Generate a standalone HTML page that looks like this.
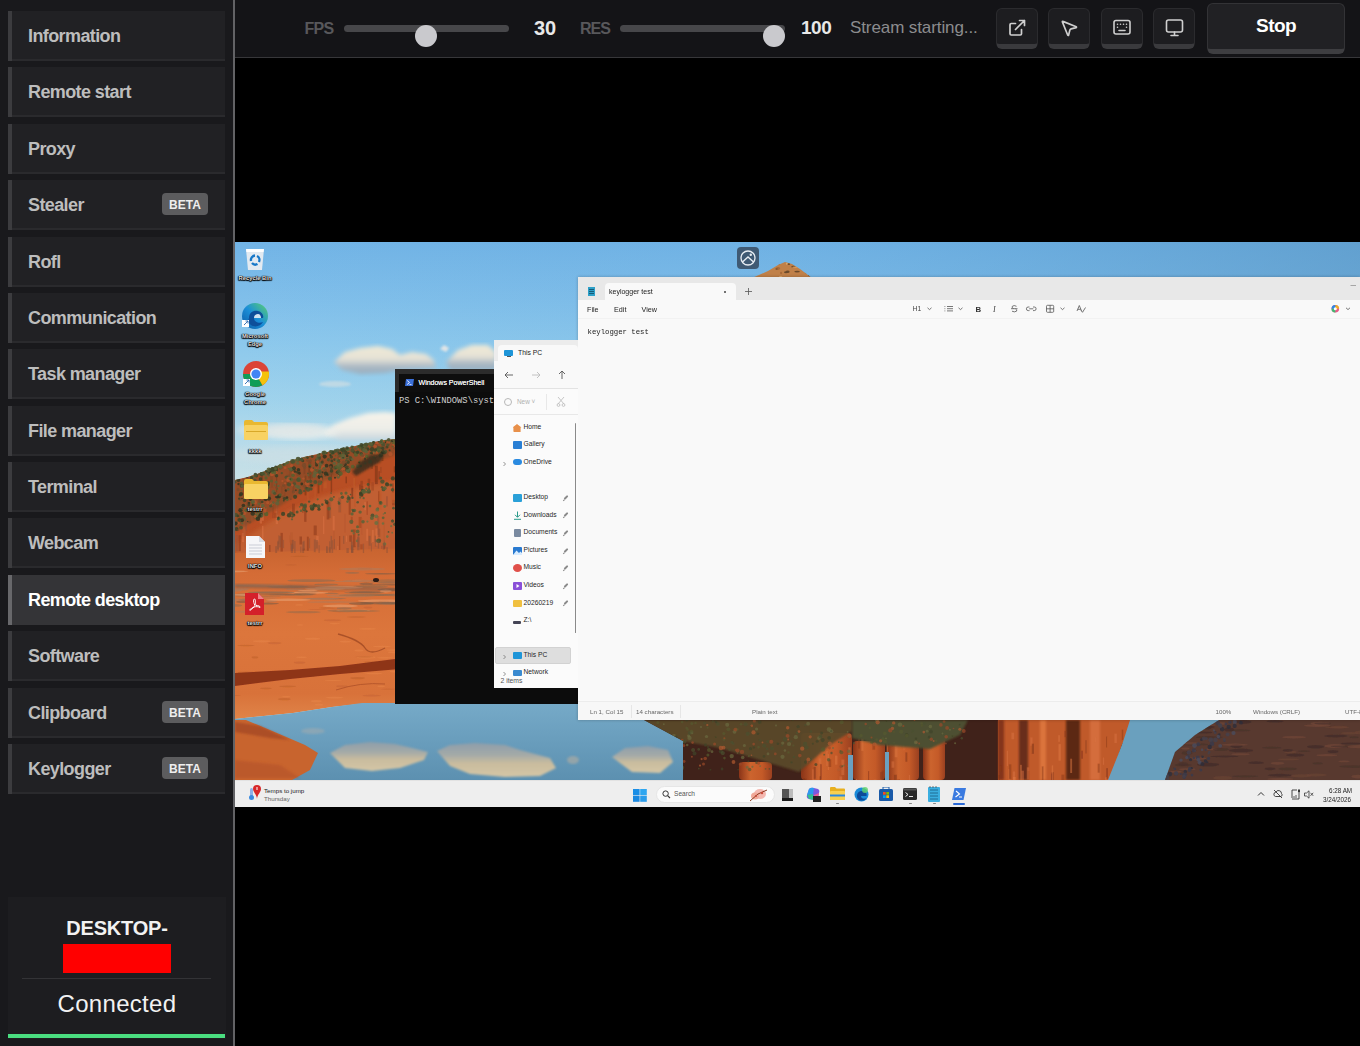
<!DOCTYPE html>
<html><head><meta charset="utf-8">
<style>
*{margin:0;padding:0;box-sizing:border-box}
html,body{width:1360px;height:1046px;overflow:hidden;background:#000;font-family:"Liberation Sans",sans-serif}
#side{position:absolute;left:0;top:0;width:233px;height:1046px;background:#19191c}
#vdiv{position:absolute;left:233px;top:0;width:2px;height:1046px;background:#626265}
.it{position:absolute;left:8px;width:217px;height:50px;background:#212124;box-shadow:inset 4px 0 0 #3c3c3f,inset 0 -2px 0 #2a2a2d}
.it span{position:absolute;left:20px;top:15px;font-size:18px;font-weight:bold;color:#bdbdbd;letter-spacing:-0.6px;line-height:20px}
.it.act{background:#343437;box-shadow:inset 4px 0 0 #68686b}
.it.act span{color:#fff}
.beta{position:absolute;left:154px;top:13px;width:46px;height:22px;background:#5c5c5e;border-radius:4px;color:#eee;font-size:12px;font-weight:bold;text-align:center;line-height:25px}
#card{position:absolute;left:8px;top:897px;width:218px;height:142px;background:#1d1d20}
#top{position:absolute;left:235px;top:0;width:1125px;height:58px;background:#141417;border-bottom:1px solid #37373a}

.lbl{position:absolute;font-weight:bold;font-size:16px;color:#58585b;letter-spacing:-0.4px;line-height:18px}
.val{position:absolute;font-weight:bold;font-size:19px;color:#e8e8e8;letter-spacing:-0.5px;line-height:20px}
.trk{position:absolute;top:25px;height:7px;background:#47474a;border-radius:4px}
.thm{position:absolute;top:25px;width:22px;height:22px;border-radius:50%;background:#c9c9cd}
.btn{position:absolute;top:8px;width:42px;height:41px;background:#1d1d20;border:1px solid #2b2b2e;border-bottom:5px solid #3a3a3d;border-radius:6px}
.btn svg{position:absolute;left:10px;top:9px}
#stop{position:absolute;left:1207px;top:3px;width:138px;height:51px;background:#212124;border:1px solid #333336;border-bottom:5px solid #3e3e41;border-radius:6px;color:#fff;font-weight:bold;font-size:19px;text-align:center;line-height:43px;letter-spacing:-0.6px}

#desk{position:absolute;left:235px;top:242px;width:1125px;height:565px;overflow:hidden;background:#72b2e2}
#desk svg.bg{position:absolute;left:0;top:0}

.win{position:absolute;overflow:hidden}
.t{position:absolute;white-space:nowrap;line-height:1}
#ps{left:160px;top:127px;width:183px;height:335px;background:#0c0c0c}
#ex{left:259px;top:98px;width:84px;height:348px;background:#fbfbfb}
#np{left:343px;top:35px;width:782px;height:443px;background:#f9f9f9;box-shadow:0 0 3px rgba(0,0,0,0.25)}

.exi{position:absolute;left:0;width:84px;height:10px}
.exi i{position:absolute;left:18.5px;top:1px;width:9px;height:8px;border-radius:1px}
.exi b{position:absolute;left:29.5px;top:1px;font-weight:normal;font-size:6.7px;color:#1f1f1f;white-space:nowrap;line-height:1}
.exi u{position:absolute;left:71px;top:1.5px;width:2.2px;height:5px;background:#8a8a8a;transform:rotate(45deg);border-radius:1px}
.exi u:after{content:'';position:absolute;left:1px;top:4.5px;width:0.6px;height:2.5px;background:#8a8a8a}

.lab{position:absolute;width:40px;text-align:center;font-size:5.8px;font-weight:bold;color:#e0e0e0;line-height:8px;text-shadow:0 0 1px #000,0.5px 0.5px 1px #000,-0.5px -0.5px 1px #000,0.5px -0.5px 1px #000,-0.5px 0.5px 1px #000}
#tb{position:absolute;left:0;top:538px;width:1125px;height:27px;background:#eeeeee;border-top:1px solid #e2e2e2}
</style></head><body>
<div id="side">
<div class="it" style="top:11px"><span>Information</span></div>
<div class="it" style="top:67px"><span>Remote start</span></div>
<div class="it" style="top:124px"><span>Proxy</span></div>
<div class="it" style="top:180px"><span>Stealer</span><div class="beta">BETA</div></div>
<div class="it" style="top:237px"><span>Rofl</span></div>
<div class="it" style="top:293px"><span>Communication</span></div>
<div class="it" style="top:349px"><span>Task manager</span></div>
<div class="it" style="top:406px"><span>File manager</span></div>
<div class="it" style="top:462px"><span>Terminal</span></div>
<div class="it" style="top:518px"><span>Webcam</span></div>
<div class="it act" style="top:575px"><span>Remote desktop</span></div>
<div class="it" style="top:631px"><span>Software</span></div>
<div class="it" style="top:688px"><span>Clipboard</span><div class="beta">BETA</div></div>
<div class="it" style="top:744px"><span>Keylogger</span><div class="beta">BETA</div></div>
<div id="card">
<div style="position:absolute;left:0;top:19.5px;width:218px;text-align:center;font-weight:bold;font-size:20px;color:#f2f2f2;letter-spacing:-0.2px;line-height:22px">DESKTOP-</div>
<div style="position:absolute;left:55px;top:47px;width:108px;height:29px;background:#ff0000"></div>
<div style="position:absolute;left:14px;top:81px;width:189px;height:1px;background:#333336"></div>
<div style="position:absolute;left:0;top:92.5px;width:218px;text-align:center;font-size:24px;color:#f2f2f2;line-height:28px;letter-spacing:0.3px">Connected</div>
<div style="position:absolute;left:0;top:137px;width:217px;height:4px;background:#4ade80"></div>
</div>
</div>
<div id="vdiv"></div>
<div id="top"></div>
<div class="lbl" style="left:304.5px;top:20px;letter-spacing:-0.7px">FPS</div>
<div class="trk" style="left:344px;width:165px"></div>
<div class="thm" style="left:415px"></div>
<div class="val" style="left:534px;top:17.5px;font-size:20px;letter-spacing:0">30</div>
<div class="lbl" style="left:580px;top:20px;letter-spacing:-1px">RES</div>
<div class="trk" style="left:620px;width:165px"></div>
<div class="thm" style="left:763px"></div>
<div class="val" style="left:801px;top:18px">100</div>
<div style="position:absolute;left:850px;top:18px;font-size:17px;color:#8c8c8e;line-height:20px;letter-spacing:-0.1px">Stream starting...</div>
<div class="btn" style="left:996px"><svg width="20" height="20" viewBox="0 0 20 20" fill="none" stroke="#cfcfcf" stroke-width="1.7" stroke-linecap="round" stroke-linejoin="round"><path d="M8.5 5.5H4.2A1.2 1.2 0 0 0 3 6.7V15.8A1.2 1.2 0 0 0 4.2 17H13.3A1.2 1.2 0 0 0 14.5 15.8V11.5"/><path d="M8.5 11.5L17.5 2.5M12.5 2.5H17.5V7.5"/></svg></div>
<div class="btn" style="left:1048px"><svg width="20" height="20" viewBox="0 0 24 24" fill="none" stroke="#cfcfcf" stroke-width="2" stroke-linecap="round" stroke-linejoin="round"><path d="M4.037 4.688a.495.495 0 0 1 .651-.651l16 6.5a.5.5 0 0 1-.063.947l-6.124 1.58a2 2 0 0 0-1.438 1.435l-1.579 6.126a.5.5 0 0 1-.947.063z"/></svg></div>
<div class="btn" style="left:1101px"><svg width="20" height="20" viewBox="0 0 20 20" fill="none" stroke="#cfcfcf" stroke-width="1.6" stroke-linecap="round" stroke-linejoin="round"><rect x="2" y="2.5" width="16" height="13.5" rx="2"/><path d="M5.5 6.2h.01M8.5 6.2h.01M11.5 6.2h.01M14.5 6.2h.01M5.5 9.2h.01M14.5 9.2h.01M7 12.5h6"/></svg></div>
<div class="btn" style="left:1153px"><svg width="20" height="20" viewBox="0 0 20 20" fill="none" stroke="#cfcfcf" stroke-width="1.6" stroke-linecap="round" stroke-linejoin="round"><rect x="2.5" y="2" width="16" height="12" rx="2"/><path d="M10.5 14v3.5M7 17.5h7"/></svg></div>
<div id="stop">Stop</div>

<div id="desk">
<svg class="bg" width="1125" height="565" viewBox="0 0 1125 565">
<defs>
<linearGradient id="sky" x1="0" y1="0" x2="0" y2="565" gradientUnits="userSpaceOnUse"><stop offset="0.0000" stop-color="#72b4e6"/><stop offset="0.1027" stop-color="#80bfea"/><stop offset="0.1770" stop-color="#8cc8ec"/><stop offset="0.2832" stop-color="#a0d3ec"/><stop offset="0.3540" stop-color="#b6dbea"/><stop offset="0.4159" stop-color="#c8e0e6"/></linearGradient>
<linearGradient id="skyR" x1="0" y1="0" x2="1125" y2="0" gradientUnits="userSpaceOnUse"><stop offset="0" stop-color="#5a9ed4" stop-opacity="0"/><stop offset="0.45" stop-color="#5a9ed4" stop-opacity="0.12"/><stop offset="1" stop-color="#5490be" stop-opacity="0.55"/></linearGradient>
<linearGradient id="water" x1="0" y1="461" x2="0" y2="538" gradientUnits="userSpaceOnUse"><stop offset="0" stop-color="#76aac8"/><stop offset="1" stop-color="#5c90b0"/></linearGradient>
<filter id="b05"><feGaussianBlur stdDeviation="0.5"/></filter>
<filter id="b1"><feGaussianBlur stdDeviation="1"/></filter>
<filter id="b2"><feGaussianBlur stdDeviation="2"/></filter>
<filter id="b3"><feGaussianBlur stdDeviation="3"/></filter>
<filter id="b5"><feGaussianBlur stdDeviation="5"/></filter>
</defs>
<rect width="1125" height="565" fill="url(#sky)"/>
<rect width="1125" height="250" fill="url(#skyR)"/>
<linearGradient id="cg1" x1="0" y1="0" x2="0" y2="1"><stop offset="0" stop-color="#f0ead6"/><stop offset="0.45" stop-color="#e6e2d6"/><stop offset="0.75" stop-color="#a9b8c4"/><stop offset="1" stop-color="#98acbc"/></linearGradient>
<linearGradient id="cg2" x1="0" y1="0" x2="0" y2="1"><stop offset="0" stop-color="#f6f3ea"/><stop offset="0.6" stop-color="#eeeee8"/><stop offset="1" stop-color="#c8d6de"/></linearGradient>
<path d="M99.0,120.0 L110.0,110.0 L125.0,106.0 L143.0,104.0 L157.0,107.0 L165.0,113.0 L177.0,110.0 L191.0,112.0 L199.0,118.0 L201.0,126.0 L165.0,128.0 L150.0,131.0 L125.0,132.0 L107.0,128.0Z" fill="url(#cg1)" filter="url(#b2)" opacity="1" stroke-linejoin="round"/>
<path d="M211.0,120.0 L223.0,108.0 L237.0,103.0 L253.0,103.0 L261.0,110.0 L261.0,128.0 L215.0,128.0Z" fill="url(#cg1)" filter="url(#b2)" opacity="1" stroke-linejoin="round"/>
<path d="M205.0,107.0 L209.0,103.0 L214.0,106.0 L211.0,110.0Z" fill="#dfe4e6" filter="url(#b1)" opacity="1" stroke-linejoin="round"/>
<ellipse cx="100" cy="142" rx="16" ry="3" fill="#c8dce4" opacity="0.8" filter="url(#b1)"/>
<path d="M87.0,192.0 L100.0,182.0 L115.0,176.0 L133.0,171.0 L150.0,170.0 L161.0,171.0 L161.0,198.0 L105.0,198.0Z" fill="url(#cg2)" filter="url(#b2)" opacity="1" stroke-linejoin="round"/>
<ellipse cx="65" cy="190" rx="38" ry="7" fill="#eef0ec" opacity="0.85" filter="url(#b3)"/>
<ellipse cx="45" cy="188" rx="45" ry="6" fill="#dde5e6" opacity="0.75" filter="url(#b3)"/>
<ellipse cx="65" cy="213" rx="70" ry="9" fill="#d3e0e3" opacity="0.55" filter="url(#b3)"/>
<clipPath id="pkc"><polygon points="517.0,36.0 533.0,29.0 543.0,23.0 550.0,20.0 557.0,22.0 565.0,27.0 577.0,36.0"/></clipPath>
<polygon points="517.0,36.0 533.0,29.0 543.0,23.0 550.0,20.0 557.0,22.0 565.0,27.0 577.0,36.0" fill="#c08048"/>
<g clip-path="url(#pkc)" filter="url(#b05)">
<ellipse cx="537.8" cy="23.3" rx="2.3" ry="0.7" fill="#a86a38"/>
<ellipse cx="525.2" cy="29.7" rx="2.8" ry="0.8" fill="#8a5a30"/>
<ellipse cx="543.9" cy="22.0" rx="1.2" ry="0.9" fill="#a86a38"/>
<ellipse cx="526.8" cy="24.3" rx="2.3" ry="1.4" fill="#a86a38"/>
<ellipse cx="552.2" cy="21.7" rx="1.4" ry="1.0" fill="#e0a868"/>
<ellipse cx="535.9" cy="23.2" rx="1.2" ry="0.8" fill="#e0a868"/>
<ellipse cx="525.7" cy="29.6" rx="1.4" ry="0.7" fill="#8a5a30"/>
<ellipse cx="551.0" cy="30.3" rx="2.0" ry="1.0" fill="#6a4a2a"/>
<ellipse cx="545.6" cy="34.9" rx="1.7" ry="0.8" fill="#e0a868"/>
<ellipse cx="558.4" cy="24.7" rx="2.1" ry="1.0" fill="#6a4a2a"/>
<ellipse cx="560.1" cy="25.3" rx="3.0" ry="0.7" fill="#d89858"/>
<ellipse cx="529.1" cy="26.1" rx="2.9" ry="0.9" fill="#8a5a30"/>
<ellipse cx="562.1" cy="29.6" rx="2.8" ry="0.9" fill="#6a4a2a"/>
<ellipse cx="552.7" cy="29.7" rx="1.9" ry="1.3" fill="#6a4a2a"/>
<ellipse cx="546.1" cy="31.0" rx="1.1" ry="1.2" fill="#a86a38"/>
<ellipse cx="574.6" cy="33.3" rx="1.6" ry="0.9" fill="#6a4a2a"/>
<ellipse cx="521.2" cy="27.9" rx="1.3" ry="0.7" fill="#8a5a30"/>
<ellipse cx="532.0" cy="25.3" rx="2.5" ry="0.9" fill="#d89858"/>
<ellipse cx="524.4" cy="27.7" rx="2.1" ry="1.3" fill="#d89858"/>
<ellipse cx="567.5" cy="25.2" rx="1.8" ry="0.9" fill="#d89858"/>
<ellipse cx="572.7" cy="23.3" rx="1.4" ry="0.8" fill="#e0a868"/>
<ellipse cx="520.7" cy="33.5" rx="1.4" ry="0.8" fill="#e0a868"/>
<ellipse cx="543.0" cy="26.5" rx="2.1" ry="1.4" fill="#a86a38"/>
<ellipse cx="572.3" cy="30.8" rx="2.5" ry="1.0" fill="#a86a38"/>
<ellipse cx="541.6" cy="27.0" rx="1.2" ry="1.1" fill="#8a5a30"/>
<ellipse cx="530.5" cy="35.8" rx="1.9" ry="0.7" fill="#a86a38"/>
<ellipse cx="522.9" cy="21.0" rx="1.3" ry="0.7" fill="#6a4a2a"/>
<ellipse cx="553.8" cy="22.1" rx="1.4" ry="0.9" fill="#6a4a2a"/>
<ellipse cx="572.6" cy="30.0" rx="1.9" ry="0.7" fill="#d89858"/>
<ellipse cx="574.6" cy="28.0" rx="2.0" ry="0.7" fill="#8a5a30"/>
</g>
<clipPath id="hillc"><polygon points="0.0,238.0 13.0,235.0 28.0,230.0 42.0,224.0 55.0,219.0 69.0,215.0 83.0,212.0 97.0,209.0 111.0,206.0 125.0,203.0 139.0,200.0 150.0,198.0 160.0,197.0 185.0,194.0 185.0,318.0 0.0,318.0"/></clipPath>
<polygon points="0.0,238.0 13.0,235.0 28.0,230.0 42.0,224.0 55.0,219.0 69.0,215.0 83.0,212.0 97.0,209.0 111.0,206.0 125.0,203.0 139.0,200.0 150.0,198.0 160.0,197.0 185.0,194.0 185.0,318.0 0.0,318.0" fill="#b84e24"/>
<g clip-path="url(#hillc)">
<g filter="url(#b05)">
<polygon points="0.0,303.0 45.0,273.0 85.0,255.0 125.0,245.0 165.0,238.0 185.0,236.0 185.0,318.0 0.0,318.0" fill="#c86a3a" opacity="0.6" filter="url(#b2)"/>
<rect x="131.2" y="286.7" width="2.0" height="12.2" fill="#d87242" opacity="0.6"/>
<rect x="35.9" y="310.6" width="2.8" height="10.4" fill="#9a5236" opacity="0.6"/>
<rect x="132.7" y="236.7" width="2.4" height="14.6" fill="#8e3a1a" opacity="0.6"/>
<rect x="45.7" y="244.4" width="2.1" height="7.5" fill="#a04420" opacity="0.6"/>
<rect x="136.3" y="240.3" width="2.6" height="8.3" fill="#a04420" opacity="0.6"/>
<rect x="143.2" y="286.6" width="2.0" height="8.4" fill="#9a5236" opacity="0.6"/>
<rect x="127.9" y="314.8" width="1.5" height="16.9" fill="#b85a30" opacity="0.6"/>
<rect x="121.2" y="311.1" width="2.9" height="11.7" fill="#a04420" opacity="0.6"/>
<rect x="63.8" y="227.9" width="1.7" height="8.4" fill="#a04420" opacity="0.6"/>
<rect x="84.5" y="314.3" width="2.0" height="14.2" fill="#8e3a1a" opacity="0.6"/>
<rect x="114.3" y="293.4" width="2.8" height="6.3" fill="#8e3a1a" opacity="0.6"/>
<rect x="136.9" y="287.8" width="1.9" height="12.2" fill="#d87242" opacity="0.6"/>
<rect x="111.3" y="212.8" width="1.9" height="19.2" fill="#c05a2a" opacity="0.6"/>
<rect x="130.1" y="212.6" width="1.1" height="7.4" fill="#a04420" opacity="0.6"/>
<rect x="103.4" y="255.6" width="2.7" height="14.8" fill="#9a5236" opacity="0.6"/>
<rect x="171.6" y="277.3" width="2.1" height="10.3" fill="#9a5236" opacity="0.6"/>
<rect x="3.7" y="293.3" width="2.1" height="15.9" fill="#8e3a1a" opacity="0.6"/>
<rect x="163.4" y="252.0" width="1.1" height="18.1" fill="#a04420" opacity="0.6"/>
<rect x="37.2" y="259.6" width="1.5" height="16.5" fill="#a04420" opacity="0.6"/>
<rect x="73.3" y="217.8" width="2.8" height="18.7" fill="#7a3018" opacity="0.6"/>
<rect x="115.9" y="295.1" width="1.3" height="12.8" fill="#9a5236" opacity="0.6"/>
<rect x="26.6" y="260.7" width="2.2" height="18.1" fill="#d87242" opacity="0.6"/>
<rect x="135.8" y="219.9" width="2.1" height="7.1" fill="#8e3a1a" opacity="0.6"/>
<rect x="57.0" y="261.6" width="2.8" height="13.3" fill="#8e3a1a" opacity="0.6"/>
<rect x="9.9" y="224.6" width="2.0" height="5.6" fill="#8e3a1a" opacity="0.6"/>
<rect x="98.3" y="288.9" width="1.7" height="18.7" fill="#b85a30" opacity="0.6"/>
<rect x="170.3" y="271.5" width="1.9" height="8.0" fill="#a04420" opacity="0.6"/>
<rect x="93.3" y="257.0" width="2.8" height="19.1" fill="#9a5236" opacity="0.6"/>
<rect x="164.9" y="232.3" width="2.7" height="13.4" fill="#a04420" opacity="0.6"/>
<rect x="24.0" y="216.7" width="2.3" height="11.6" fill="#8e3a1a" opacity="0.6"/>
<rect x="75.0" y="227.0" width="2.8" height="9.5" fill="#8e3a1a" opacity="0.6"/>
<rect x="27.0" y="283.9" width="1.5" height="14.9" fill="#d87242" opacity="0.6"/>
<rect x="24.0" y="255.9" width="1.8" height="16.2" fill="#8e3a1a" opacity="0.6"/>
<rect x="85.3" y="314.9" width="2.4" height="17.5" fill="#d87242" opacity="0.6"/>
<rect x="174.0" y="248.6" width="1.6" height="11.3" fill="#7a3018" opacity="0.6"/>
<rect x="126.4" y="205.2" width="2.4" height="13.3" fill="#c05a2a" opacity="0.6"/>
<rect x="67.3" y="261.5" width="1.2" height="9.4" fill="#8e3a1a" opacity="0.6"/>
<rect x="160.7" y="228.8" width="1.5" height="18.1" fill="#8e3a1a" opacity="0.6"/>
<rect x="6.9" y="291.0" width="2.6" height="9.1" fill="#d87242" opacity="0.6"/>
<rect x="148.7" y="279.4" width="1.3" height="19.2" fill="#b85a30" opacity="0.6"/>
<rect x="160.9" y="267.5" width="1.6" height="15.5" fill="#8e3a1a" opacity="0.6"/>
<rect x="139.9" y="223.7" width="2.9" height="18.4" fill="#7a3018" opacity="0.6"/>
<rect x="111.0" y="293.6" width="1.1" height="6.3" fill="#d87242" opacity="0.6"/>
<rect x="151.0" y="254.3" width="1.8" height="10.1" fill="#9a5236" opacity="0.6"/>
<rect x="160.2" y="273.3" width="2.9" height="5.6" fill="#d87242" opacity="0.6"/>
<rect x="169.6" y="232.6" width="2.3" height="7.7" fill="#7a3018" opacity="0.6"/>
<rect x="92.9" y="226.3" width="1.5" height="11.7" fill="#a04420" opacity="0.6"/>
<rect x="140.6" y="315.4" width="2.5" height="5.6" fill="#8e3a1a" opacity="0.6"/>
<rect x="96.4" y="224.4" width="1.2" height="12.1" fill="#c05a2a" opacity="0.6"/>
<rect x="143.3" y="251.8" width="2.9" height="12.4" fill="#c05a2a" opacity="0.6"/>
<rect x="53.9" y="227.3" width="2.7" height="8.4" fill="#a04420" opacity="0.6"/>
<rect x="123.7" y="274.9" width="3.0" height="11.1" fill="#a04420" opacity="0.6"/>
<rect x="146.5" y="204.6" width="1.9" height="14.4" fill="#7a3018" opacity="0.6"/>
<rect x="9.7" y="278.2" width="2.3" height="10.7" fill="#9a5236" opacity="0.6"/>
<rect x="49.3" y="230.4" width="1.4" height="9.4" fill="#c05a2a" opacity="0.6"/>
<rect x="47.1" y="203.4" width="2.9" height="10.5" fill="#7a3018" opacity="0.6"/>
<rect x="95.7" y="230.6" width="1.4" height="19.5" fill="#7a3018" opacity="0.6"/>
<rect x="32.0" y="240.9" width="2.0" height="6.3" fill="#7a3018" opacity="0.6"/>
<rect x="35.2" y="260.0" width="2.6" height="5.1" fill="#a04420" opacity="0.6"/>
<rect x="25.2" y="269.3" width="1.6" height="10.9" fill="#a04420" opacity="0.6"/>
<rect x="40.7" y="269.2" width="2.3" height="12.9" fill="#d87242" opacity="0.6"/>
<rect x="125.3" y="302.3" width="2.4" height="10.8" fill="#a04420" opacity="0.6"/>
<rect x="86.5" y="235.1" width="1.1" height="14.3" fill="#a04420" opacity="0.6"/>
<rect x="146.2" y="303.8" width="1.3" height="14.4" fill="#9a5236" opacity="0.6"/>
<rect x="91.7" y="260.0" width="2.7" height="17.5" fill="#8e3a1a" opacity="0.6"/>
<rect x="102.2" y="303.9" width="1.2" height="15.2" fill="#d87242" opacity="0.6"/>
<rect x="7.3" y="275.0" width="2.7" height="19.4" fill="#b85a30" opacity="0.6"/>
<rect x="97.7" y="273.9" width="2.0" height="14.4" fill="#d87242" opacity="0.6"/>
<rect x="0.6" y="293.1" width="2.8" height="16.2" fill="#9a5236" opacity="0.6"/>
<rect x="16.1" y="262.4" width="1.5" height="16.2" fill="#b85a30" opacity="0.6"/>
<rect x="13.0" y="233.0" width="1.5" height="15.9" fill="#a04420" opacity="0.6"/>
<rect x="113.7" y="255.0" width="2.0" height="17.7" fill="#8e3a1a" opacity="0.6"/>
<rect x="119.6" y="289.7" width="1.2" height="14.3" fill="#d87242" opacity="0.6"/>
<rect x="25.8" y="231.7" width="2.2" height="16.1" fill="#7a3018" opacity="0.6"/>
<rect x="23.4" y="257.5" width="2.4" height="12.3" fill="#8e3a1a" opacity="0.6"/>
<rect x="118.2" y="235.9" width="1.9" height="12.7" fill="#c05a2a" opacity="0.6"/>
<rect x="134.3" y="315.2" width="3.0" height="13.2" fill="#a04420" opacity="0.6"/>
<rect x="163.8" y="205.0" width="3.0" height="11.9" fill="#c05a2a" opacity="0.6"/>
<rect x="67.7" y="306.6" width="2.2" height="19.0" fill="#8e3a1a" opacity="0.6"/>
<rect x="24.8" y="262.2" width="2.2" height="19.3" fill="#d87242" opacity="0.6"/>
<rect x="110.5" y="234.6" width="1.5" height="6.7" fill="#7a3018" opacity="0.6"/>
<rect x="157.1" y="257.9" width="2.9" height="5.4" fill="#8e3a1a" opacity="0.6"/>
<rect x="119.3" y="248.8" width="1.7" height="15.9" fill="#c05a2a" opacity="0.6"/>
<rect x="55.3" y="297.9" width="2.7" height="5.0" fill="#a04420" opacity="0.6"/>
<rect x="21.0" y="307.7" width="1.5" height="15.7" fill="#a04420" opacity="0.6"/>
<rect x="11.4" y="247.1" width="1.7" height="18.0" fill="#8e3a1a" opacity="0.6"/>
<rect x="74.9" y="234.1" width="1.1" height="5.7" fill="#8e3a1a" opacity="0.6"/>
<rect x="115.8" y="274.8" width="1.9" height="7.2" fill="#a04420" opacity="0.6"/>
<rect x="55.2" y="290.4" width="2.8" height="16.8" fill="#b85a30" opacity="0.6"/>
<rect x="142.1" y="274.3" width="2.1" height="18.7" fill="#9a5236" opacity="0.6"/>
<rect x="125.9" y="208.6" width="2.2" height="16.0" fill="#c05a2a" opacity="0.6"/>
<rect x="24.3" y="301.3" width="1.3" height="12.3" fill="#9a5236" opacity="0.6"/>
<rect x="82.6" y="241.8" width="1.8" height="9.5" fill="#7a3018" opacity="0.6"/>
<rect x="41.8" y="257.6" width="1.3" height="15.0" fill="#8e3a1a" opacity="0.6"/>
<rect x="28.3" y="226.5" width="2.1" height="18.6" fill="#c05a2a" opacity="0.6"/>
<rect x="79.3" y="240.6" width="1.3" height="16.4" fill="#c05a2a" opacity="0.6"/>
<rect x="33.7" y="213.3" width="1.6" height="10.1" fill="#8e3a1a" opacity="0.6"/>
<rect x="64.5" y="294.5" width="2.5" height="8.0" fill="#8e3a1a" opacity="0.6"/>
<rect x="72.2" y="249.8" width="1.5" height="12.9" fill="#c05a2a" opacity="0.6"/>
<rect x="131.6" y="259.3" width="1.3" height="13.6" fill="#a04420" opacity="0.6"/>
<rect x="88.1" y="274.1" width="1.2" height="17.9" fill="#d87242" opacity="0.6"/>
<rect x="156.9" y="246.5" width="2.9" height="14.7" fill="#c05a2a" opacity="0.6"/>
<rect x="148.5" y="301.6" width="1.9" height="5.3" fill="#8e3a1a" opacity="0.6"/>
<rect x="133.6" y="293.9" width="1.0" height="19.5" fill="#b85a30" opacity="0.6"/>
<rect x="68.5" y="307.7" width="2.9" height="17.4" fill="#b85a30" opacity="0.6"/>
<rect x="43.5" y="215.3" width="2.9" height="7.3" fill="#8e3a1a" opacity="0.6"/>
<rect x="126.3" y="276.2" width="1.2" height="16.5" fill="#b85a30" opacity="0.6"/>
<rect x="136.0" y="203.2" width="2.3" height="6.9" fill="#8e3a1a" opacity="0.6"/>
<rect x="53.2" y="217.5" width="2.4" height="8.8" fill="#c05a2a" opacity="0.6"/>
<rect x="19.6" y="210.9" width="1.8" height="12.9" fill="#a04420" opacity="0.6"/>
<rect x="39.1" y="270.9" width="3.0" height="5.2" fill="#a04420" opacity="0.6"/>
<rect x="48.8" y="238.7" width="2.0" height="17.6" fill="#a04420" opacity="0.6"/>
<rect x="41.1" y="230.9" width="1.1" height="19.4" fill="#7a3018" opacity="0.6"/>
<rect x="34.0" y="303.0" width="1.5" height="14.7" fill="#8e3a1a" opacity="0.6"/>
<rect x="116.8" y="307.5" width="2.4" height="8.4" fill="#8e3a1a" opacity="0.6"/>
<rect x="125.7" y="243.9" width="2.6" height="10.9" fill="#8e3a1a" opacity="0.6"/>
<rect x="129.3" y="260.1" width="1.6" height="8.1" fill="#d87242" opacity="0.6"/>
<rect x="143.5" y="229.1" width="1.2" height="8.3" fill="#7a3018" opacity="0.6"/>
<rect x="109.1" y="271.9" width="1.8" height="18.4" fill="#b85a30" opacity="0.6"/>
<rect x="116.4" y="310.2" width="1.1" height="7.2" fill="#b85a30" opacity="0.6"/>
<rect x="4.1" y="270.4" width="1.4" height="11.2" fill="#8e3a1a" opacity="0.6"/>
<rect x="78.7" y="283.5" width="3.0" height="9.7" fill="#8e3a1a" opacity="0.6"/>
<rect x="163.0" y="240.2" width="1.1" height="7.8" fill="#c05a2a" opacity="0.6"/>
<rect x="116.3" y="245.8" width="1.9" height="10.6" fill="#7a3018" opacity="0.6"/>
<rect x="19.1" y="211.8" width="2.9" height="6.2" fill="#c05a2a" opacity="0.6"/>
<rect x="21.6" y="312.0" width="2.5" height="8.1" fill="#a04420" opacity="0.6"/>
<rect x="54.0" y="293.8" width="1.4" height="6.3" fill="#b85a30" opacity="0.6"/>
<rect x="94.8" y="253.4" width="1.1" height="9.8" fill="#b85a30" opacity="0.6"/>
<rect x="71.9" y="294.7" width="1.8" height="16.5" fill="#8e3a1a" opacity="0.6"/>
<rect x="81.2" y="293.8" width="2.5" height="5.9" fill="#d87242" opacity="0.6"/>
<rect x="157.2" y="241.3" width="1.5" height="9.1" fill="#8e3a1a" opacity="0.6"/>
<rect x="125.4" y="238.8" width="2.4" height="9.1" fill="#8e3a1a" opacity="0.6"/>
<rect x="104.2" y="294.0" width="1.0" height="19.2" fill="#8e3a1a" opacity="0.6"/>
<rect x="40.9" y="256.7" width="2.6" height="19.4" fill="#b85a30" opacity="0.6"/>
<rect x="159.9" y="295.1" width="1.4" height="7.0" fill="#b85a30" opacity="0.6"/>
<rect x="140.4" y="286.4" width="2.2" height="17.3" fill="#d87242" opacity="0.6"/>
<rect x="57.4" y="239.1" width="2.0" height="10.4" fill="#8e3a1a" opacity="0.6"/>
<rect x="68.5" y="221.1" width="2.0" height="11.1" fill="#8e3a1a" opacity="0.6"/>
<rect x="95.3" y="221.2" width="3.0" height="11.4" fill="#8e3a1a" opacity="0.6"/>
<rect x="46.4" y="212.5" width="3.0" height="6.4" fill="#c05a2a" opacity="0.6"/>
<rect x="170.1" y="222.6" width="2.2" height="7.0" fill="#c05a2a" opacity="0.6"/>
<rect x="118.0" y="287.5" width="2.6" height="17.7" fill="#8e3a1a" opacity="0.6"/>
<rect x="51.4" y="234.6" width="2.5" height="9.0" fill="#7a3018" opacity="0.6"/>
<rect x="34.9" y="231.0" width="1.6" height="8.7" fill="#a04420" opacity="0.6"/>
<rect x="158.8" y="224.3" width="3.0" height="6.0" fill="#7a3018" opacity="0.6"/>
<rect x="88.8" y="229.1" width="3.0" height="17.1" fill="#c05a2a" opacity="0.6"/>
<rect x="17.9" y="256.6" width="2.8" height="17.3" fill="#b85a30" opacity="0.6"/>
<rect x="7.1" y="236.2" width="2.2" height="6.8" fill="#a04420" opacity="0.6"/>
<rect x="144.9" y="224.9" width="1.9" height="6.1" fill="#a04420" opacity="0.6"/>
<rect x="45.5" y="290.9" width="2.3" height="19.2" fill="#8e3a1a" opacity="0.6"/>
<rect x="124.2" y="242.5" width="1.3" height="5.6" fill="#7a3018" opacity="0.6"/>
<rect x="35.7" y="231.8" width="2.6" height="14.0" fill="#a04420" opacity="0.6"/>
<rect x="143.3" y="249.2" width="1.2" height="10.6" fill="#7a3018" opacity="0.6"/>
<rect x="5.5" y="259.0" width="1.2" height="12.3" fill="#b85a30" opacity="0.6"/>
<rect x="69.2" y="265.2" width="2.3" height="14.6" fill="#8e3a1a" opacity="0.6"/>
<rect x="69.6" y="233.6" width="1.8" height="19.8" fill="#7a3018" opacity="0.6"/>
<rect x="9.0" y="287.2" width="1.8" height="18.3" fill="#b85a30" opacity="0.6"/>
<rect x="151.2" y="315.6" width="1.8" height="10.5" fill="#d87242" opacity="0.6"/>
<rect x="70.9" y="309.4" width="1.8" height="11.5" fill="#d87242" opacity="0.6"/>
<rect x="143.6" y="248.9" width="2.5" height="18.2" fill="#c05a2a" opacity="0.6"/>
</g>
<polygon points="0.0,238.0 13.0,235.0 28.0,230.0 42.0,224.0 55.0,219.0 69.0,215.0 83.0,212.0 97.0,209.0 111.0,206.0 125.0,203.0 139.0,200.0 150.0,198.0 160.0,197.0 160.0,213.0 137.0,221.0 110.0,230.0 83.0,242.0 61.0,254.0 39.0,268.0 17.0,280.0 0.0,290.0" fill="#6a4a2a" opacity="0.45" filter="url(#b1)"/>
<g filter="url(#b05)">
<circle cx="21.4" cy="233.7" r="1.7" fill="#3a4226" opacity="0.85"/>
<circle cx="150.1" cy="198.5" r="2.1" fill="#b4542a" opacity="0.85"/>
<circle cx="121.6" cy="206.8" r="1.2" fill="#5e6238" opacity="0.85"/>
<circle cx="86.0" cy="240.3" r="1.3" fill="#4a5230" opacity="0.85"/>
<circle cx="124.3" cy="220.5" r="1.1" fill="#2e3420" opacity="0.85"/>
<circle cx="20.9" cy="276.6" r="1.2" fill="#7a4a2a" opacity="0.85"/>
<circle cx="100.3" cy="225.7" r="2.1" fill="#4a5230" opacity="0.85"/>
<circle cx="102.4" cy="230.3" r="1.7" fill="#3a4226" opacity="0.85"/>
<circle cx="141.3" cy="210.4" r="2.0" fill="#b4542a" opacity="0.85"/>
<circle cx="136.8" cy="203.2" r="0.9" fill="#3a4226" opacity="0.85"/>
<circle cx="154.9" cy="199.0" r="1.0" fill="#5e6238" opacity="0.85"/>
<circle cx="40.8" cy="254.9" r="0.9" fill="#3a4226" opacity="0.85"/>
<circle cx="92.8" cy="232.2" r="1.7" fill="#4a5230" opacity="0.85"/>
<circle cx="53.5" cy="234.2" r="1.6" fill="#7a4a2a" opacity="0.85"/>
<circle cx="103.5" cy="215.2" r="1.2" fill="#7a4a2a" opacity="0.85"/>
<circle cx="41.1" cy="240.2" r="1.4" fill="#5e6238" opacity="0.85"/>
<circle cx="72.3" cy="214.1" r="2.2" fill="#b4542a" opacity="0.85"/>
<circle cx="76.8" cy="227.8" r="1.9" fill="#b4542a" opacity="0.85"/>
<circle cx="75.6" cy="218.8" r="1.4" fill="#7a4a2a" opacity="0.85"/>
<circle cx="11.1" cy="252.5" r="0.9" fill="#5e6238" opacity="0.85"/>
<circle cx="72.9" cy="231.3" r="0.9" fill="#4a5230" opacity="0.85"/>
<circle cx="21.5" cy="275.3" r="1.9" fill="#5e6238" opacity="0.85"/>
<circle cx="84.4" cy="212.5" r="2.1" fill="#b4542a" opacity="0.85"/>
<circle cx="107.7" cy="227.0" r="2.0" fill="#4a5230" opacity="0.85"/>
<circle cx="164.4" cy="205.4" r="1.0" fill="#2e3420" opacity="0.85"/>
<circle cx="21.7" cy="273.4" r="2.1" fill="#5e6238" opacity="0.85"/>
<circle cx="151.1" cy="199.6" r="1.8" fill="#2e3420" opacity="0.85"/>
<circle cx="36.5" cy="262.2" r="1.9" fill="#b4542a" opacity="0.85"/>
<circle cx="26.2" cy="271.5" r="2.1" fill="#5e6238" opacity="0.85"/>
<circle cx="75.3" cy="221.5" r="1.1" fill="#7a4a2a" opacity="0.85"/>
<circle cx="43.4" cy="244.0" r="1.3" fill="#5e6238" opacity="0.85"/>
<circle cx="32.8" cy="245.1" r="2.1" fill="#55602f" opacity="0.85"/>
<circle cx="112.1" cy="228.1" r="1.9" fill="#3a4226" opacity="0.85"/>
<circle cx="43.6" cy="255.1" r="1.7" fill="#4a5230" opacity="0.85"/>
<circle cx="59.4" cy="250.6" r="1.5" fill="#b4542a" opacity="0.85"/>
<circle cx="113.6" cy="227.5" r="2.2" fill="#5e6238" opacity="0.85"/>
<circle cx="103.9" cy="217.6" r="1.3" fill="#2e3420" opacity="0.85"/>
<circle cx="62.0" cy="230.1" r="1.3" fill="#3a4226" opacity="0.85"/>
<circle cx="126.2" cy="211.8" r="1.7" fill="#3a4226" opacity="0.85"/>
<circle cx="158.1" cy="200.7" r="1.2" fill="#b4542a" opacity="0.85"/>
<circle cx="105.5" cy="233.4" r="2.1" fill="#b4542a" opacity="0.85"/>
<circle cx="147.8" cy="210.3" r="0.8" fill="#55602f" opacity="0.85"/>
<circle cx="24.6" cy="259.1" r="1.4" fill="#7a4a2a" opacity="0.85"/>
<circle cx="60.1" cy="218.4" r="1.1" fill="#7a4a2a" opacity="0.85"/>
<circle cx="107.8" cy="206.3" r="1.6" fill="#4a5230" opacity="0.85"/>
<circle cx="50.1" cy="241.3" r="1.1" fill="#b4542a" opacity="0.85"/>
<circle cx="96.3" cy="225.8" r="1.3" fill="#3a4226" opacity="0.85"/>
<circle cx="136.7" cy="202.7" r="2.1" fill="#4a5230" opacity="0.85"/>
<circle cx="40.2" cy="230.2" r="0.9" fill="#4a5230" opacity="0.85"/>
<circle cx="23.9" cy="261.8" r="1.4" fill="#5e6238" opacity="0.85"/>
<circle cx="43.6" cy="222.9" r="1.9" fill="#55602f" opacity="0.85"/>
<circle cx="147.3" cy="208.0" r="1.4" fill="#b4542a" opacity="0.85"/>
<circle cx="154.6" cy="208.2" r="1.0" fill="#3a4226" opacity="0.85"/>
<circle cx="0.1" cy="240.2" r="1.4" fill="#4a5230" opacity="0.85"/>
<circle cx="39.2" cy="226.7" r="0.9" fill="#2e3420" opacity="0.85"/>
<circle cx="101.1" cy="226.0" r="1.0" fill="#3a4226" opacity="0.85"/>
<circle cx="32.9" cy="254.3" r="1.7" fill="#b4542a" opacity="0.85"/>
<circle cx="68.5" cy="236.6" r="1.2" fill="#b4542a" opacity="0.85"/>
<circle cx="49.5" cy="222.1" r="1.9" fill="#55602f" opacity="0.85"/>
<circle cx="118.0" cy="203.6" r="1.4" fill="#2e3420" opacity="0.85"/>
<circle cx="150.5" cy="198.3" r="1.4" fill="#55602f" opacity="0.85"/>
<circle cx="37.3" cy="229.7" r="1.7" fill="#3a4226" opacity="0.85"/>
<circle cx="20.3" cy="274.4" r="2.1" fill="#55602f" opacity="0.85"/>
<circle cx="43.4" cy="224.7" r="1.6" fill="#55602f" opacity="0.85"/>
<circle cx="71.9" cy="241.5" r="2.2" fill="#b4542a" opacity="0.85"/>
<circle cx="48.8" cy="258.7" r="0.9" fill="#3a4226" opacity="0.85"/>
<circle cx="83.7" cy="216.4" r="2.0" fill="#3a4226" opacity="0.85"/>
<circle cx="33.5" cy="233.8" r="1.1" fill="#5e6238" opacity="0.85"/>
<circle cx="64.1" cy="238.0" r="2.1" fill="#7a4a2a" opacity="0.85"/>
<circle cx="104.1" cy="225.9" r="2.0" fill="#55602f" opacity="0.85"/>
<circle cx="88.5" cy="224.8" r="1.8" fill="#b4542a" opacity="0.85"/>
<circle cx="141.5" cy="206.9" r="1.1" fill="#55602f" opacity="0.85"/>
<circle cx="146.0" cy="211.9" r="1.7" fill="#7a4a2a" opacity="0.85"/>
<circle cx="12.8" cy="279.5" r="0.8" fill="#3a4226" opacity="0.85"/>
<circle cx="18.5" cy="262.4" r="1.3" fill="#3a4226" opacity="0.85"/>
<circle cx="23.4" cy="231.9" r="1.0" fill="#4a5230" opacity="0.85"/>
<circle cx="106.2" cy="207.2" r="1.8" fill="#4a5230" opacity="0.85"/>
<circle cx="10.9" cy="264.3" r="1.1" fill="#5e6238" opacity="0.85"/>
<circle cx="157.5" cy="204.4" r="0.9" fill="#55602f" opacity="0.85"/>
<circle cx="143.2" cy="215.3" r="0.9" fill="#7a4a2a" opacity="0.85"/>
<circle cx="33.9" cy="231.5" r="2.1" fill="#4a5230" opacity="0.85"/>
<circle cx="150.3" cy="209.7" r="2.0" fill="#4a5230" opacity="0.85"/>
<circle cx="104.2" cy="214.5" r="1.0" fill="#4a5230" opacity="0.85"/>
<circle cx="130.7" cy="214.8" r="1.2" fill="#5e6238" opacity="0.85"/>
<circle cx="69.9" cy="214.6" r="2.1" fill="#5e6238" opacity="0.85"/>
<circle cx="8.0" cy="274.0" r="1.9" fill="#5e6238" opacity="0.85"/>
<circle cx="99.3" cy="221.4" r="1.7" fill="#5e6238" opacity="0.85"/>
<circle cx="5.1" cy="257.2" r="1.5" fill="#7a4a2a" opacity="0.85"/>
<circle cx="16.2" cy="256.0" r="1.6" fill="#4a5230" opacity="0.85"/>
<circle cx="35.7" cy="264.0" r="1.6" fill="#4a5230" opacity="0.85"/>
<circle cx="47.4" cy="239.1" r="1.1" fill="#b4542a" opacity="0.85"/>
<circle cx="125.8" cy="224.1" r="1.3" fill="#4a5230" opacity="0.85"/>
<circle cx="15.8" cy="267.3" r="1.1" fill="#2e3420" opacity="0.85"/>
<circle cx="81.6" cy="222.9" r="1.5" fill="#2e3420" opacity="0.85"/>
<circle cx="95.4" cy="213.1" r="1.1" fill="#2e3420" opacity="0.85"/>
<circle cx="115.4" cy="216.7" r="2.1" fill="#4a5230" opacity="0.85"/>
<circle cx="126.5" cy="212.8" r="1.6" fill="#55602f" opacity="0.85"/>
<circle cx="17.3" cy="248.5" r="1.4" fill="#4a5230" opacity="0.85"/>
<circle cx="65.1" cy="248.4" r="1.4" fill="#4a5230" opacity="0.85"/>
<circle cx="106.6" cy="216.2" r="1.2" fill="#5e6238" opacity="0.85"/>
<circle cx="148.7" cy="205.9" r="2.2" fill="#7a4a2a" opacity="0.85"/>
<circle cx="104.1" cy="232.9" r="1.5" fill="#3a4226" opacity="0.85"/>
<circle cx="124.5" cy="219.5" r="0.8" fill="#55602f" opacity="0.85"/>
<circle cx="96.0" cy="223.9" r="2.0" fill="#2e3420" opacity="0.85"/>
<circle cx="109.2" cy="225.2" r="1.4" fill="#3a4226" opacity="0.85"/>
<circle cx="113.7" cy="211.0" r="1.0" fill="#3a4226" opacity="0.85"/>
<circle cx="76.2" cy="243.2" r="1.5" fill="#3a4226" opacity="0.85"/>
<circle cx="44.1" cy="254.2" r="2.0" fill="#2e3420" opacity="0.85"/>
<circle cx="25.5" cy="237.1" r="1.8" fill="#3a4226" opacity="0.85"/>
<circle cx="99.5" cy="217.6" r="1.3" fill="#3a4226" opacity="0.85"/>
<circle cx="31.2" cy="272.0" r="2.2" fill="#55602f" opacity="0.85"/>
<circle cx="27.2" cy="259.9" r="1.3" fill="#3a4226" opacity="0.85"/>
<circle cx="162.3" cy="206.9" r="1.2" fill="#55602f" opacity="0.85"/>
<circle cx="45.2" cy="226.4" r="1.2" fill="#4a5230" opacity="0.85"/>
<circle cx="146.1" cy="206.0" r="1.4" fill="#4a5230" opacity="0.85"/>
<circle cx="130.5" cy="215.8" r="2.2" fill="#b4542a" opacity="0.85"/>
<circle cx="48.9" cy="221.3" r="1.6" fill="#5e6238" opacity="0.85"/>
<circle cx="66.8" cy="242.0" r="1.4" fill="#2e3420" opacity="0.85"/>
<circle cx="94.7" cy="231.2" r="2.0" fill="#7a4a2a" opacity="0.85"/>
<circle cx="110.2" cy="222.5" r="1.7" fill="#2e3420" opacity="0.85"/>
<circle cx="96.3" cy="215.0" r="1.7" fill="#3a4226" opacity="0.85"/>
<circle cx="74.9" cy="223.7" r="1.8" fill="#55602f" opacity="0.85"/>
<circle cx="147.6" cy="201.7" r="1.8" fill="#7a4a2a" opacity="0.85"/>
<circle cx="103.9" cy="213.5" r="1.5" fill="#7a4a2a" opacity="0.85"/>
<circle cx="3.2" cy="281.1" r="1.7" fill="#b4542a" opacity="0.85"/>
<circle cx="153.5" cy="199.6" r="1.3" fill="#55602f" opacity="0.85"/>
<circle cx="1.8" cy="280.3" r="0.9" fill="#4a5230" opacity="0.85"/>
<circle cx="89.7" cy="214.6" r="2.1" fill="#2e3420" opacity="0.85"/>
<circle cx="33.0" cy="242.6" r="1.6" fill="#2e3420" opacity="0.85"/>
<circle cx="89.3" cy="232.3" r="0.8" fill="#b4542a" opacity="0.85"/>
<circle cx="130.8" cy="208.8" r="1.4" fill="#5e6238" opacity="0.85"/>
<circle cx="156.4" cy="199.6" r="1.1" fill="#55602f" opacity="0.85"/>
<circle cx="84.8" cy="241.1" r="2.2" fill="#55602f" opacity="0.85"/>
<circle cx="58.7" cy="219.2" r="1.3" fill="#5e6238" opacity="0.85"/>
<circle cx="10.1" cy="238.5" r="1.7" fill="#7a4a2a" opacity="0.85"/>
<circle cx="111.4" cy="220.2" r="1.1" fill="#4a5230" opacity="0.85"/>
<circle cx="122.3" cy="224.8" r="2.2" fill="#b4542a" opacity="0.85"/>
<circle cx="164.0" cy="208.6" r="1.1" fill="#7a4a2a" opacity="0.85"/>
<circle cx="21.3" cy="268.4" r="1.9" fill="#2e3420" opacity="0.85"/>
<circle cx="31.9" cy="256.5" r="1.1" fill="#55602f" opacity="0.85"/>
<circle cx="159.0" cy="201.3" r="2.0" fill="#55602f" opacity="0.85"/>
<circle cx="131.2" cy="209.6" r="1.9" fill="#5e6238" opacity="0.85"/>
<circle cx="107.2" cy="227.1" r="1.3" fill="#7a4a2a" opacity="0.85"/>
<circle cx="140.4" cy="203.9" r="1.8" fill="#7a4a2a" opacity="0.85"/>
<circle cx="162.2" cy="205.3" r="0.8" fill="#7a4a2a" opacity="0.85"/>
<circle cx="119.1" cy="210.1" r="1.7" fill="#3a4226" opacity="0.85"/>
<circle cx="52.9" cy="238.4" r="1.7" fill="#b4542a" opacity="0.85"/>
<circle cx="108.8" cy="215.2" r="2.0" fill="#5e6238" opacity="0.85"/>
<circle cx="9.4" cy="276.8" r="1.9" fill="#5e6238" opacity="0.85"/>
<circle cx="23.2" cy="270.0" r="1.6" fill="#55602f" opacity="0.85"/>
<circle cx="108.5" cy="211.2" r="1.7" fill="#4a5230" opacity="0.85"/>
<circle cx="41.3" cy="227.7" r="2.0" fill="#3a4226" opacity="0.85"/>
<circle cx="30.6" cy="248.5" r="1.0" fill="#2e3420" opacity="0.85"/>
<circle cx="149.2" cy="210.8" r="1.7" fill="#3a4226" opacity="0.85"/>
<circle cx="113.5" cy="229.6" r="1.7" fill="#4a5230" opacity="0.85"/>
<circle cx="147.5" cy="211.3" r="1.2" fill="#2e3420" opacity="0.85"/>
<circle cx="81.6" cy="218.4" r="1.8" fill="#4a5230" opacity="0.85"/>
<circle cx="72.4" cy="244.7" r="1.0" fill="#b4542a" opacity="0.85"/>
<circle cx="69.1" cy="244.1" r="1.5" fill="#7a4a2a" opacity="0.85"/>
<circle cx="9.6" cy="258.4" r="1.8" fill="#3a4226" opacity="0.85"/>
<circle cx="40.7" cy="230.7" r="2.0" fill="#b4542a" opacity="0.85"/>
<circle cx="1.1" cy="281.1" r="1.8" fill="#7a4a2a" opacity="0.85"/>
<circle cx="82.1" cy="221.1" r="1.3" fill="#7a4a2a" opacity="0.85"/>
<circle cx="69.1" cy="249.0" r="1.1" fill="#4a5230" opacity="0.85"/>
<circle cx="59.5" cy="241.8" r="1.7" fill="#4a5230" opacity="0.85"/>
<circle cx="112.6" cy="228.8" r="1.9" fill="#5e6238" opacity="0.85"/>
<circle cx="15.5" cy="257.0" r="2.1" fill="#2e3420" opacity="0.85"/>
<circle cx="5.6" cy="272.8" r="1.0" fill="#55602f" opacity="0.85"/>
<circle cx="15.6" cy="265.6" r="1.5" fill="#5e6238" opacity="0.85"/>
<circle cx="86.7" cy="235.0" r="1.2" fill="#3a4226" opacity="0.85"/>
<circle cx="56.4" cy="227.5" r="2.0" fill="#4a5230" opacity="0.85"/>
<circle cx="48.3" cy="254.8" r="1.3" fill="#7a4a2a" opacity="0.85"/>
<circle cx="162.4" cy="208.0" r="2.2" fill="#5e6238" opacity="0.85"/>
<circle cx="108.0" cy="227.1" r="1.1" fill="#5e6238" opacity="0.85"/>
<circle cx="117.7" cy="206.7" r="0.9" fill="#55602f" opacity="0.85"/>
<circle cx="164.4" cy="200.9" r="2.0" fill="#b4542a" opacity="0.85"/>
<circle cx="90.0" cy="211.1" r="1.0" fill="#5e6238" opacity="0.85"/>
<circle cx="7.7" cy="277.3" r="1.7" fill="#7a4a2a" opacity="0.85"/>
<circle cx="108.6" cy="226.8" r="1.7" fill="#b4542a" opacity="0.85"/>
<circle cx="101.8" cy="224.9" r="1.8" fill="#55602f" opacity="0.85"/>
<circle cx="144.6" cy="199.5" r="1.7" fill="#4a5230" opacity="0.85"/>
<circle cx="75.6" cy="239.2" r="1.7" fill="#4a5230" opacity="0.85"/>
<circle cx="143.4" cy="206.0" r="2.1" fill="#4a5230" opacity="0.85"/>
<circle cx="108.2" cy="215.6" r="1.0" fill="#2e3420" opacity="0.85"/>
<circle cx="51.0" cy="248.5" r="1.2" fill="#2e3420" opacity="0.85"/>
<circle cx="69.6" cy="225.4" r="1.6" fill="#7a4a2a" opacity="0.85"/>
<circle cx="95.4" cy="235.8" r="1.6" fill="#7a4a2a" opacity="0.85"/>
<circle cx="6.5" cy="241.6" r="1.4" fill="#2e3420" opacity="0.85"/>
<circle cx="114.8" cy="214.5" r="0.8" fill="#4a5230" opacity="0.85"/>
<circle cx="63.9" cy="237.8" r="2.2" fill="#55602f" opacity="0.85"/>
<circle cx="78.4" cy="226.1" r="0.9" fill="#4a5230" opacity="0.85"/>
<circle cx="77.9" cy="242.8" r="0.8" fill="#55602f" opacity="0.85"/>
<circle cx="0.8" cy="272.9" r="2.2" fill="#4a5230" opacity="0.85"/>
<circle cx="141.6" cy="202.7" r="1.0" fill="#4a5230" opacity="0.85"/>
<circle cx="2.9" cy="273.9" r="1.4" fill="#3a4226" opacity="0.85"/>
<circle cx="122.8" cy="224.2" r="1.9" fill="#5e6238" opacity="0.85"/>
<circle cx="117.7" cy="224.7" r="1.9" fill="#55602f" opacity="0.85"/>
<circle cx="48.4" cy="243.6" r="1.4" fill="#7a4a2a" opacity="0.85"/>
<circle cx="153.8" cy="200.7" r="1.8" fill="#4a5230" opacity="0.85"/>
<circle cx="1.9" cy="237.3" r="1.8" fill="#55602f" opacity="0.85"/>
<circle cx="102.0" cy="218.0" r="1.8" fill="#5e6238" opacity="0.85"/>
<circle cx="27.4" cy="269.2" r="1.7" fill="#7a4a2a" opacity="0.85"/>
<circle cx="52.2" cy="257.5" r="1.4" fill="#55602f" opacity="0.85"/>
<circle cx="111.7" cy="208.6" r="1.0" fill="#2e3420" opacity="0.85"/>
<circle cx="157.4" cy="198.8" r="1.4" fill="#2e3420" opacity="0.85"/>
<circle cx="63.6" cy="245.2" r="1.9" fill="#5e6238" opacity="0.85"/>
<circle cx="93.5" cy="217.7" r="1.7" fill="#4a5230" opacity="0.85"/>
<circle cx="107.4" cy="227.6" r="1.3" fill="#b4542a" opacity="0.85"/>
<circle cx="100.0" cy="235.7" r="1.0" fill="#2e3420" opacity="0.85"/>
<circle cx="137.4" cy="211.1" r="1.3" fill="#3a4226" opacity="0.85"/>
<circle cx="113.0" cy="220.1" r="1.9" fill="#3a4226" opacity="0.85"/>
<circle cx="46.7" cy="221.2" r="1.2" fill="#5e6238" opacity="0.85"/>
<circle cx="26.0" cy="272.7" r="2.0" fill="#2e3420" opacity="0.85"/>
<circle cx="7.0" cy="278.2" r="2.0" fill="#2e3420" opacity="0.85"/>
<circle cx="163.8" cy="197.6" r="1.9" fill="#2e3420" opacity="0.85"/>
<circle cx="90.4" cy="233.7" r="1.3" fill="#7a4a2a" opacity="0.85"/>
<circle cx="14.0" cy="261.1" r="1.3" fill="#2e3420" opacity="0.85"/>
<circle cx="130.0" cy="216.7" r="1.2" fill="#3a4226" opacity="0.85"/>
<circle cx="9.5" cy="254.9" r="1.1" fill="#55602f" opacity="0.85"/>
<circle cx="42.0" cy="255.2" r="1.3" fill="#2e3420" opacity="0.85"/>
<circle cx="89.2" cy="226.6" r="1.9" fill="#5e6238" opacity="0.85"/>
<circle cx="38.4" cy="249.9" r="2.0" fill="#5e6238" opacity="0.85"/>
<circle cx="86.1" cy="225.7" r="1.1" fill="#b4542a" opacity="0.85"/>
<circle cx="35.1" cy="230.1" r="1.8" fill="#2e3420" opacity="0.85"/>
<circle cx="59.9" cy="238.4" r="1.9" fill="#7a4a2a" opacity="0.85"/>
<circle cx="141.4" cy="203.3" r="1.3" fill="#7a4a2a" opacity="0.85"/>
<circle cx="17.5" cy="263.4" r="0.9" fill="#2e3420" opacity="0.85"/>
<circle cx="52.1" cy="220.3" r="1.5" fill="#5e6238" opacity="0.85"/>
<circle cx="3.4" cy="238.0" r="2.0" fill="#2e3420" opacity="0.85"/>
<circle cx="80.2" cy="230.7" r="2.1" fill="#5e6238" opacity="0.85"/>
<circle cx="46.2" cy="225.5" r="1.9" fill="#7a4a2a" opacity="0.85"/>
<circle cx="135.1" cy="219.7" r="2.0" fill="#5e6238" opacity="0.85"/>
<circle cx="55.9" cy="257.1" r="0.9" fill="#7a4a2a" opacity="0.85"/>
<circle cx="8.4" cy="263.5" r="1.8" fill="#2e3420" opacity="0.85"/>
<circle cx="80.3" cy="240.1" r="2.0" fill="#4a5230" opacity="0.85"/>
<circle cx="105.6" cy="231.7" r="2.1" fill="#55602f" opacity="0.85"/>
<circle cx="42.4" cy="247.0" r="0.9" fill="#55602f" opacity="0.85"/>
<circle cx="151.9" cy="205.2" r="1.4" fill="#3a4226" opacity="0.85"/>
<circle cx="26.4" cy="274.6" r="1.1" fill="#55602f" opacity="0.85"/>
<circle cx="6.4" cy="248.7" r="0.9" fill="#5e6238" opacity="0.85"/>
<circle cx="91.2" cy="210.1" r="1.2" fill="#4a5230" opacity="0.85"/>
<circle cx="84.7" cy="234.8" r="2.2" fill="#2e3420" opacity="0.85"/>
<circle cx="9.2" cy="242.2" r="0.8" fill="#2e3420" opacity="0.85"/>
<circle cx="32.8" cy="260.7" r="1.6" fill="#b4542a" opacity="0.85"/>
<circle cx="125.1" cy="204.4" r="1.3" fill="#5e6238" opacity="0.85"/>
<circle cx="64.4" cy="229.4" r="1.0" fill="#7a4a2a" opacity="0.85"/>
<circle cx="39.3" cy="230.4" r="2.0" fill="#55602f" opacity="0.85"/>
<circle cx="77.2" cy="243.7" r="0.9" fill="#2e3420" opacity="0.85"/>
<circle cx="153.1" cy="200.3" r="2.0" fill="#b4542a" opacity="0.85"/>
<circle cx="146.6" cy="200.1" r="2.1" fill="#7a4a2a" opacity="0.85"/>
<circle cx="152.8" cy="203.0" r="1.7" fill="#4a5230" opacity="0.85"/>
<circle cx="74.6" cy="224.7" r="1.1" fill="#2e3420" opacity="0.85"/>
<circle cx="19.1" cy="249.7" r="1.1" fill="#5e6238" opacity="0.85"/>
<circle cx="9.4" cy="271.1" r="2.0" fill="#b4542a" opacity="0.85"/>
<circle cx="72.4" cy="218.6" r="1.4" fill="#7a4a2a" opacity="0.85"/>
<circle cx="25.7" cy="242.5" r="1.2" fill="#2e3420" opacity="0.85"/>
<circle cx="132.7" cy="205.9" r="1.2" fill="#4a5230" opacity="0.85"/>
<circle cx="149.0" cy="199.1" r="0.9" fill="#b4542a" opacity="0.85"/>
<circle cx="147.7" cy="209.2" r="1.6" fill="#3a4226" opacity="0.85"/>
<circle cx="137.8" cy="201.6" r="1.1" fill="#2e3420" opacity="0.85"/>
<circle cx="60.1" cy="254.8" r="2.1" fill="#3a4226" opacity="0.85"/>
<circle cx="16.1" cy="247.2" r="0.9" fill="#3a4226" opacity="0.85"/>
<circle cx="119.9" cy="210.2" r="0.8" fill="#55602f" opacity="0.85"/>
<circle cx="133.2" cy="207.4" r="1.4" fill="#3a4226" opacity="0.85"/>
<circle cx="130.3" cy="221.4" r="1.1" fill="#5e6238" opacity="0.85"/>
<circle cx="71.8" cy="246.0" r="1.2" fill="#3a4226" opacity="0.85"/>
<circle cx="29.8" cy="266.9" r="1.9" fill="#b4542a" opacity="0.85"/>
<circle cx="117.4" cy="208.5" r="2.0" fill="#4a5230" opacity="0.85"/>
<circle cx="146.7" cy="210.6" r="1.2" fill="#2e3420" opacity="0.85"/>
<circle cx="34.0" cy="253.9" r="1.7" fill="#55602f" opacity="0.85"/>
<circle cx="31.7" cy="241.4" r="0.9" fill="#4a5230" opacity="0.85"/>
<circle cx="120.9" cy="212.7" r="2.1" fill="#55602f" opacity="0.85"/>
<circle cx="85.5" cy="221.7" r="2.0" fill="#5e6238" opacity="0.85"/>
<circle cx="142.6" cy="207.6" r="1.4" fill="#4a5230" opacity="0.85"/>
<circle cx="125.9" cy="204.8" r="1.2" fill="#55602f" opacity="0.85"/>
<circle cx="30.7" cy="265.8" r="0.9" fill="#5e6238" opacity="0.85"/>
<circle cx="115.9" cy="218.4" r="0.8" fill="#2e3420" opacity="0.85"/>
<circle cx="85.8" cy="224.9" r="0.9" fill="#b4542a" opacity="0.85"/>
<circle cx="58.9" cy="226.4" r="2.0" fill="#2e3420" opacity="0.85"/>
<circle cx="53.0" cy="247.4" r="1.6" fill="#7a4a2a" opacity="0.85"/>
<circle cx="148.2" cy="202.4" r="2.1" fill="#4a5230" opacity="0.85"/>
<circle cx="81.6" cy="228.4" r="1.9" fill="#b4542a" opacity="0.85"/>
<circle cx="22.2" cy="242.6" r="1.1" fill="#4a5230" opacity="0.85"/>
<circle cx="30.1" cy="232.8" r="1.6" fill="#5e6238" opacity="0.85"/>
<circle cx="157.6" cy="196.5" r="1.8" fill="#55602f" opacity="0.85"/>
<circle cx="43.1" cy="258.3" r="1.6" fill="#55602f" opacity="0.85"/>
<circle cx="86.3" cy="233.0" r="1.3" fill="#4a5230" opacity="0.85"/>
<circle cx="15.5" cy="242.0" r="1.0" fill="#5e6238" opacity="0.85"/>
<circle cx="81.4" cy="228.1" r="1.0" fill="#5e6238" opacity="0.85"/>
<circle cx="20.1" cy="274.3" r="1.6" fill="#b4542a" opacity="0.85"/>
<circle cx="142.1" cy="201.2" r="1.4" fill="#b4542a" opacity="0.85"/>
<circle cx="65.4" cy="250.4" r="2.1" fill="#4a5230" opacity="0.85"/>
<circle cx="64.1" cy="231.2" r="1.6" fill="#2e3420" opacity="0.85"/>
<circle cx="6.0" cy="285.7" r="1.9" fill="#4a5230" opacity="0.85"/>
<circle cx="55.9" cy="227.3" r="1.8" fill="#5e6238" opacity="0.85"/>
<circle cx="139.1" cy="210.1" r="1.9" fill="#5e6238" opacity="0.85"/>
<circle cx="139.9" cy="199.9" r="1.0" fill="#b4542a" opacity="0.85"/>
<circle cx="112.2" cy="213.9" r="1.4" fill="#2e3420" opacity="0.85"/>
<circle cx="104.4" cy="216.6" r="1.1" fill="#b4542a" opacity="0.85"/>
<circle cx="53.5" cy="226.6" r="0.8" fill="#55602f" opacity="0.85"/>
<circle cx="23.0" cy="276.7" r="2.2" fill="#2e3420" opacity="0.85"/>
<circle cx="74.9" cy="214.4" r="0.8" fill="#4a5230" opacity="0.85"/>
<circle cx="105.9" cy="213.4" r="1.7" fill="#55602f" opacity="0.85"/>
<circle cx="103.7" cy="229.2" r="1.7" fill="#4a5230" opacity="0.85"/>
<circle cx="41.3" cy="245.7" r="1.1" fill="#7a4a2a" opacity="0.85"/>
<circle cx="6.5" cy="241.3" r="1.7" fill="#5e6238" opacity="0.85"/>
<circle cx="19.9" cy="260.4" r="2.1" fill="#b4542a" opacity="0.85"/>
<circle cx="13.9" cy="263.0" r="1.4" fill="#3a4226" opacity="0.85"/>
<circle cx="84.4" cy="239.7" r="1.6" fill="#7a4a2a" opacity="0.85"/>
<circle cx="45.2" cy="252.8" r="1.6" fill="#55602f" opacity="0.85"/>
<circle cx="138.6" cy="211.1" r="1.1" fill="#b4542a" opacity="0.85"/>
<circle cx="63.8" cy="236.2" r="1.4" fill="#5e6238" opacity="0.85"/>
<circle cx="90.4" cy="228.6" r="1.9" fill="#7a4a2a" opacity="0.85"/>
<circle cx="5.1" cy="253.1" r="1.5" fill="#3a4226" opacity="0.85"/>
<circle cx="63.2" cy="237.8" r="2.1" fill="#4a5230" opacity="0.85"/>
<circle cx="26.8" cy="273.7" r="1.6" fill="#5e6238" opacity="0.85"/>
<circle cx="81.1" cy="221.0" r="1.2" fill="#3a4226" opacity="0.85"/>
<circle cx="127.4" cy="205.0" r="1.6" fill="#4a5230" opacity="0.85"/>
<circle cx="57.4" cy="243.1" r="1.3" fill="#b4542a" opacity="0.85"/>
<circle cx="72.6" cy="239.4" r="1.5" fill="#4a5230" opacity="0.85"/>
<circle cx="163.2" cy="205.0" r="1.4" fill="#3a4226" opacity="0.85"/>
<circle cx="110.3" cy="208.9" r="1.7" fill="#3a4226" opacity="0.85"/>
<circle cx="140.2" cy="214.7" r="0.9" fill="#b4542a" opacity="0.85"/>
<circle cx="141.3" cy="216.2" r="1.2" fill="#7a4a2a" opacity="0.85"/>
<circle cx="104.1" cy="224.2" r="1.0" fill="#55602f" opacity="0.85"/>
<circle cx="143.7" cy="198.2" r="1.6" fill="#2e3420" opacity="0.85"/>
<circle cx="19.4" cy="251.1" r="1.0" fill="#b4542a" opacity="0.85"/>
<circle cx="140.2" cy="204.2" r="1.7" fill="#b4542a" opacity="0.85"/>
<circle cx="62.6" cy="233.0" r="1.2" fill="#7a4a2a" opacity="0.85"/>
<circle cx="58.2" cy="230.9" r="1.6" fill="#b4542a" opacity="0.85"/>
<circle cx="63.4" cy="227.8" r="1.8" fill="#2e3420" opacity="0.85"/>
<circle cx="163.3" cy="200.9" r="1.1" fill="#5e6238" opacity="0.85"/>
<circle cx="50.2" cy="225.8" r="1.3" fill="#b4542a" opacity="0.85"/>
<circle cx="38.3" cy="260.6" r="1.3" fill="#5e6238" opacity="0.85"/>
<circle cx="139.2" cy="215.4" r="1.1" fill="#5e6238" opacity="0.85"/>
<circle cx="70.4" cy="246.6" r="0.8" fill="#4a5230" opacity="0.85"/>
<circle cx="42.3" cy="261.3" r="2.1" fill="#5e6238" opacity="0.85"/>
<circle cx="127.6" cy="213.5" r="1.5" fill="#7a4a2a" opacity="0.85"/>
<circle cx="85.3" cy="232.8" r="1.4" fill="#7a4a2a" opacity="0.85"/>
<circle cx="6.7" cy="270.2" r="2.1" fill="#7a4a2a" opacity="0.85"/>
<circle cx="111.6" cy="218.6" r="1.4" fill="#4a5230" opacity="0.85"/>
<circle cx="82.6" cy="232.6" r="1.0" fill="#b4542a" opacity="0.85"/>
<circle cx="31.1" cy="246.9" r="1.4" fill="#7a4a2a" opacity="0.85"/>
<circle cx="103.1" cy="234.9" r="1.8" fill="#5e6238" opacity="0.85"/>
<circle cx="123.2" cy="204.6" r="1.2" fill="#5e6238" opacity="0.85"/>
<circle cx="161.4" cy="207.6" r="1.0" fill="#b4542a" opacity="0.85"/>
<circle cx="108.2" cy="213.6" r="1.9" fill="#5e6238" opacity="0.85"/>
<circle cx="163.4" cy="207.8" r="1.7" fill="#7a4a2a" opacity="0.85"/>
<circle cx="86.5" cy="236.6" r="1.5" fill="#3a4226" opacity="0.85"/>
<circle cx="31.0" cy="236.0" r="1.6" fill="#55602f" opacity="0.85"/>
<circle cx="17.6" cy="260.3" r="1.7" fill="#55602f" opacity="0.85"/>
<circle cx="7.0" cy="256.5" r="0.8" fill="#2e3420" opacity="0.85"/>
<circle cx="117.3" cy="217.4" r="1.4" fill="#5e6238" opacity="0.85"/>
<circle cx="16.3" cy="233.7" r="1.1" fill="#4a5230" opacity="0.85"/>
<circle cx="82.1" cy="229.6" r="2.0" fill="#5e6238" opacity="0.85"/>
<circle cx="147.8" cy="206.4" r="1.6" fill="#3a4226" opacity="0.85"/>
<circle cx="67.8" cy="218.8" r="1.5" fill="#3a4226" opacity="0.85"/>
<circle cx="84.1" cy="211.7" r="1.0" fill="#4a5230" opacity="0.85"/>
<circle cx="86.2" cy="236.9" r="1.4" fill="#b4542a" opacity="0.85"/>
<circle cx="132.0" cy="214.3" r="1.9" fill="#55602f" opacity="0.85"/>
<circle cx="53.3" cy="247.4" r="1.2" fill="#5e6238" opacity="0.85"/>
<circle cx="5.4" cy="268.2" r="2.1" fill="#2e3420" opacity="0.85"/>
<circle cx="96.1" cy="218.6" r="1.7" fill="#7a4a2a" opacity="0.85"/>
<circle cx="3.2" cy="247.7" r="1.6" fill="#7a4a2a" opacity="0.85"/>
<circle cx="158.3" cy="202.8" r="1.1" fill="#b4542a" opacity="0.85"/>
<circle cx="36.8" cy="232.3" r="2.0" fill="#b4542a" opacity="0.85"/>
<circle cx="51.9" cy="255.6" r="1.4" fill="#2e3420" opacity="0.85"/>
<circle cx="69.0" cy="223.2" r="2.2" fill="#7a4a2a" opacity="0.85"/>
<circle cx="11.1" cy="268.5" r="1.8" fill="#55602f" opacity="0.85"/>
<circle cx="36.5" cy="239.0" r="1.5" fill="#55602f" opacity="0.85"/>
<circle cx="130.8" cy="206.0" r="1.0" fill="#3a4226" opacity="0.85"/>
<circle cx="62.5" cy="216.1" r="1.4" fill="#5e6238" opacity="0.85"/>
<circle cx="59.9" cy="229.5" r="1.3" fill="#2e3420" opacity="0.85"/>
<circle cx="66.5" cy="217.1" r="1.4" fill="#4a5230" opacity="0.85"/>
<circle cx="150.6" cy="206.3" r="1.1" fill="#7a4a2a" opacity="0.85"/>
<circle cx="46.8" cy="231.1" r="1.2" fill="#4a5230" opacity="0.85"/>
<circle cx="4.2" cy="277.9" r="1.8" fill="#3a4226" opacity="0.85"/>
<circle cx="15.3" cy="246.5" r="1.9" fill="#2e3420" opacity="0.85"/>
<circle cx="91.6" cy="223.7" r="1.9" fill="#2e3420" opacity="0.85"/>
<circle cx="26.3" cy="246.1" r="1.4" fill="#55602f" opacity="0.85"/>
<circle cx="103.8" cy="222.8" r="2.1" fill="#5e6238" opacity="0.85"/>
<circle cx="83.3" cy="218.4" r="1.7" fill="#7a4a2a" opacity="0.85"/>
<circle cx="155.4" cy="212.1" r="2.1" fill="#b4542a" opacity="0.85"/>
<circle cx="96.9" cy="219.0" r="1.4" fill="#3a4226" opacity="0.85"/>
<circle cx="84.2" cy="214.9" r="1.0" fill="#2e3420" opacity="0.85"/>
<circle cx="84.6" cy="228.4" r="1.8" fill="#5e6238" opacity="0.85"/>
<circle cx="126.2" cy="202.4" r="1.6" fill="#55602f" opacity="0.85"/>
<circle cx="51.3" cy="235.3" r="1.8" fill="#4a5230" opacity="0.85"/>
<circle cx="128.1" cy="206.5" r="1.7" fill="#3a4226" opacity="0.85"/>
<circle cx="18.0" cy="259.7" r="1.9" fill="#5e6238" opacity="0.85"/>
<circle cx="125.1" cy="206.4" r="1.2" fill="#55602f" opacity="0.85"/>
<circle cx="37.4" cy="230.5" r="1.4" fill="#55602f" opacity="0.85"/>
<circle cx="58.7" cy="249.8" r="1.9" fill="#7a4a2a" opacity="0.85"/>
<circle cx="145.7" cy="213.3" r="2.1" fill="#3a4226" opacity="0.85"/>
<circle cx="29.1" cy="245.4" r="1.7" fill="#2e3420" opacity="0.85"/>
<circle cx="58.0" cy="233.3" r="1.8" fill="#55602f" opacity="0.85"/>
<circle cx="76.3" cy="247.1" r="1.3" fill="#7a4a2a" opacity="0.85"/>
<circle cx="103.8" cy="211.7" r="1.2" fill="#4a5230" opacity="0.85"/>
<circle cx="100.5" cy="213.6" r="0.9" fill="#55602f" opacity="0.85"/>
<circle cx="6.6" cy="243.8" r="1.9" fill="#3a4226" opacity="0.85"/>
<circle cx="25.8" cy="264.3" r="1.2" fill="#b4542a" opacity="0.85"/>
<circle cx="105.3" cy="211.2" r="1.1" fill="#2e3420" opacity="0.85"/>
<circle cx="82.2" cy="228.5" r="1.7" fill="#7a4a2a" opacity="0.85"/>
<circle cx="94.9" cy="236.7" r="2.0" fill="#4a5230" opacity="0.85"/>
<circle cx="128.1" cy="207.7" r="2.0" fill="#4a5230" opacity="0.85"/>
<circle cx="96.5" cy="228.9" r="1.8" fill="#3a4226" opacity="0.85"/>
<circle cx="6.1" cy="252.0" r="2.1" fill="#2e3420" opacity="0.85"/>
<circle cx="123.7" cy="204.3" r="1.8" fill="#55602f" opacity="0.85"/>
<circle cx="164.7" cy="203.7" r="1.2" fill="#3a4226" opacity="0.85"/>
<circle cx="14.8" cy="280.2" r="1.4" fill="#7a4a2a" opacity="0.85"/>
<circle cx="56.1" cy="237.6" r="2.0" fill="#55602f" opacity="0.85"/>
<circle cx="103.6" cy="219.3" r="1.7" fill="#4a5230" opacity="0.85"/>
<circle cx="34.0" cy="256.6" r="2.1" fill="#2e3420" opacity="0.85"/>
<circle cx="21.1" cy="267.8" r="2.1" fill="#4a5230" opacity="0.85"/>
<circle cx="136.2" cy="211.0" r="1.6" fill="#3a4226" opacity="0.85"/>
<circle cx="160.0" cy="205.3" r="1.2" fill="#b4542a" opacity="0.85"/>
<circle cx="159.0" cy="198.6" r="1.4" fill="#5e6238" opacity="0.85"/>
<circle cx="33.2" cy="240.7" r="1.8" fill="#3a4226" opacity="0.85"/>
<circle cx="80.3" cy="227.9" r="1.1" fill="#55602f" opacity="0.85"/>
<circle cx="85.0" cy="225.1" r="1.3" fill="#55602f" opacity="0.85"/>
<circle cx="49.4" cy="256.6" r="1.6" fill="#3a4226" opacity="0.85"/>
<circle cx="39.7" cy="251.3" r="1.6" fill="#4a5230" opacity="0.85"/>
<circle cx="125.5" cy="205.8" r="1.0" fill="#55602f" opacity="0.85"/>
<circle cx="161.6" cy="207.7" r="2.0" fill="#7a4a2a" opacity="0.85"/>
<circle cx="18.9" cy="246.1" r="1.5" fill="#5e6238" opacity="0.85"/>
<circle cx="7.2" cy="281.3" r="1.1" fill="#5e6238" opacity="0.85"/>
<circle cx="115.8" cy="215.3" r="1.0" fill="#4a5230" opacity="0.85"/>
<circle cx="73.4" cy="233.2" r="1.0" fill="#5e6238" opacity="0.85"/>
<circle cx="11.9" cy="234.8" r="1.5" fill="#2e3420" opacity="0.85"/>
<circle cx="123.3" cy="210.1" r="1.6" fill="#55602f" opacity="0.85"/>
<circle cx="18.0" cy="256.2" r="1.5" fill="#7a4a2a" opacity="0.85"/>
<circle cx="129.3" cy="208.1" r="2.1" fill="#5e6238" opacity="0.85"/>
<circle cx="106.3" cy="223.2" r="1.7" fill="#55602f" opacity="0.85"/>
<circle cx="41.5" cy="233.8" r="1.8" fill="#3a4226" opacity="0.85"/>
<circle cx="4.2" cy="256.6" r="1.2" fill="#3a4226" opacity="0.85"/>
<circle cx="30.6" cy="257.0" r="2.1" fill="#2e3420" opacity="0.85"/>
<circle cx="112.5" cy="207.3" r="2.0" fill="#55602f" opacity="0.85"/>
<circle cx="122.5" cy="210.3" r="1.7" fill="#3a4226" opacity="0.85"/>
<circle cx="58.8" cy="225.9" r="1.6" fill="#3a4226" opacity="0.85"/>
<circle cx="60.9" cy="248.2" r="0.9" fill="#3a4226" opacity="0.85"/>
<circle cx="17.7" cy="271.6" r="2.2" fill="#2e3420" opacity="0.85"/>
<circle cx="66.5" cy="216.6" r="1.5" fill="#3a4226" opacity="0.85"/>
<circle cx="82.4" cy="216.4" r="1.6" fill="#5e6238" opacity="0.85"/>
<circle cx="103.4" cy="210.6" r="1.0" fill="#3a4226" opacity="0.85"/>
<circle cx="73.1" cy="247.5" r="2.2" fill="#4a5230" opacity="0.85"/>
<circle cx="140.4" cy="208.0" r="1.8" fill="#3a4226" opacity="0.85"/>
<circle cx="0.5" cy="281.4" r="2.0" fill="#2e3420" opacity="0.85"/>
<circle cx="84.4" cy="215.4" r="1.7" fill="#4a5230" opacity="0.85"/>
<circle cx="84.9" cy="224.3" r="0.9" fill="#5e6238" opacity="0.85"/>
<circle cx="1.5" cy="287.0" r="2.1" fill="#3a4226" opacity="0.85"/>
<circle cx="27.1" cy="243.0" r="1.9" fill="#7a4a2a" opacity="0.85"/>
<circle cx="111.4" cy="219.8" r="0.9" fill="#7a4a2a" opacity="0.85"/>
<circle cx="53.4" cy="237.1" r="2.1" fill="#b4542a" opacity="0.85"/>
<circle cx="142.8" cy="216.6" r="1.7" fill="#b4542a" opacity="0.85"/>
<circle cx="133.8" cy="201.4" r="1.3" fill="#55602f" opacity="0.85"/>
<circle cx="108.6" cy="220.7" r="2.1" fill="#7a4a2a" opacity="0.85"/>
<circle cx="79.3" cy="233.8" r="2.0" fill="#5e6238" opacity="0.85"/>
<circle cx="87.5" cy="230.3" r="1.1" fill="#2e3420" opacity="0.85"/>
<circle cx="112.0" cy="216.5" r="1.0" fill="#4a5230" opacity="0.85"/>
<circle cx="95.5" cy="225.0" r="1.3" fill="#7a4a2a" opacity="0.85"/>
<circle cx="39.6" cy="243.2" r="1.0" fill="#5e6238" opacity="0.85"/>
<circle cx="29.8" cy="269.0" r="1.8" fill="#b4542a" opacity="0.85"/>
<circle cx="36.5" cy="262.4" r="0.9" fill="#55602f" opacity="0.85"/>
<circle cx="87.6" cy="218.1" r="1.1" fill="#7a4a2a" opacity="0.85"/>
<circle cx="75.6" cy="231.5" r="1.0" fill="#55602f" opacity="0.85"/>
<circle cx="84.7" cy="229.9" r="2.0" fill="#4a5230" opacity="0.85"/>
<circle cx="112.1" cy="225.6" r="2.0" fill="#3a4226" opacity="0.85"/>
<circle cx="90.8" cy="231.6" r="2.1" fill="#2e3420" opacity="0.85"/>
<circle cx="103.4" cy="233.7" r="0.9" fill="#b4542a" opacity="0.85"/>
<circle cx="137.0" cy="207.3" r="2.2" fill="#3a4226" opacity="0.85"/>
<circle cx="31.6" cy="249.0" r="1.0" fill="#4a5230" opacity="0.85"/>
<circle cx="128.1" cy="202.6" r="0.9" fill="#3a4226" opacity="0.85"/>
<circle cx="6.9" cy="271.5" r="1.4" fill="#3a4226" opacity="0.85"/>
<circle cx="19.9" cy="238.2" r="1.7" fill="#4a5230" opacity="0.85"/>
<circle cx="143.9" cy="208.5" r="2.0" fill="#55602f" opacity="0.85"/>
<circle cx="27.7" cy="263.6" r="1.9" fill="#5e6238" opacity="0.85"/>
<circle cx="121.5" cy="203.0" r="1.0" fill="#5e6238" opacity="0.85"/>
<circle cx="61.5" cy="244.3" r="1.8" fill="#5e6238" opacity="0.85"/>
<circle cx="7.2" cy="266.3" r="1.3" fill="#4a5230" opacity="0.85"/>
<circle cx="54.0" cy="242.5" r="2.1" fill="#4a5230" opacity="0.85"/>
<circle cx="111.4" cy="211.6" r="1.8" fill="#3a4226" opacity="0.85"/>
<circle cx="3.5" cy="287.8" r="1.0" fill="#7a4a2a" opacity="0.85"/>
<circle cx="3.5" cy="242.0" r="1.2" fill="#2e3420" opacity="0.85"/>
<circle cx="24.8" cy="273.9" r="1.8" fill="#2e3420" opacity="0.85"/>
<circle cx="62.8" cy="221.2" r="1.6" fill="#5e6238" opacity="0.85"/>
<circle cx="113.8" cy="225.2" r="0.8" fill="#7a4a2a" opacity="0.85"/>
<circle cx="56.5" cy="223.5" r="1.5" fill="#b4542a" opacity="0.85"/>
<circle cx="5.2" cy="279.1" r="1.1" fill="#4a5230" opacity="0.85"/>
<circle cx="135.0" cy="213.8" r="2.0" fill="#7a4a2a" opacity="0.85"/>
<circle cx="159.6" cy="206.2" r="1.4" fill="#7a4a2a" opacity="0.85"/>
<circle cx="144.0" cy="209.3" r="1.3" fill="#4a5230" opacity="0.85"/>
<circle cx="87.2" cy="220.1" r="1.6" fill="#3a4226" opacity="0.85"/>
<circle cx="7.2" cy="244.0" r="1.8" fill="#5e6238" opacity="0.85"/>
<circle cx="54.7" cy="236.8" r="1.2" fill="#5e6238" opacity="0.85"/>
<circle cx="55.4" cy="237.1" r="0.8" fill="#3a4226" opacity="0.85"/>
<circle cx="75.8" cy="246.9" r="1.7" fill="#4a5230" opacity="0.85"/>
<circle cx="119.9" cy="206.6" r="1.2" fill="#7a4a2a" opacity="0.85"/>
<circle cx="82.5" cy="219.8" r="1.6" fill="#b4542a" opacity="0.85"/>
<circle cx="96.4" cy="212.3" r="0.8" fill="#55602f" opacity="0.85"/>
<circle cx="92.5" cy="232.7" r="1.1" fill="#2e3420" opacity="0.85"/>
<circle cx="91.7" cy="260.0" r="1.9" fill="#3a4226" opacity="0.85"/>
<circle cx="69.3" cy="267.6" r="1.8" fill="#4a5230" opacity="0.85"/>
<circle cx="77.2" cy="266.2" r="2.0" fill="#5a6236" opacity="0.85"/>
<circle cx="70.2" cy="263.0" r="1.8" fill="#5a6236" opacity="0.85"/>
<circle cx="80.8" cy="263.4" r="1.5" fill="#3a4226" opacity="0.85"/>
<circle cx="147.4" cy="239.6" r="2.2" fill="#4a5230" opacity="0.85"/>
<circle cx="58.9" cy="273.2" r="1.4" fill="#5a6236" opacity="0.85"/>
<circle cx="94.0" cy="266.6" r="1.9" fill="#5a6236" opacity="0.85"/>
<circle cx="151.6" cy="241.2" r="1.2" fill="#5a6236" opacity="0.85"/>
<circle cx="127.5" cy="249.2" r="1.7" fill="#5a6236" opacity="0.85"/>
<circle cx="155.9" cy="243.0" r="1.6" fill="#4a5230" opacity="0.85"/>
<circle cx="77.2" cy="266.6" r="2.2" fill="#3a4226" opacity="0.85"/>
<circle cx="83.5" cy="264.3" r="2.0" fill="#4a5230" opacity="0.85"/>
<circle cx="79.0" cy="262.1" r="1.2" fill="#4a5230" opacity="0.85"/>
<circle cx="71.6" cy="269.3" r="1.1" fill="#3a4226" opacity="0.85"/>
<circle cx="43.4" cy="276.5" r="1.4" fill="#4a5230" opacity="0.85"/>
<circle cx="64.8" cy="264.8" r="0.9" fill="#5a6236" opacity="0.85"/>
<circle cx="69.8" cy="264.4" r="2.1" fill="#4a5230" opacity="0.85"/>
<circle cx="112.5" cy="259.6" r="1.3" fill="#5a6236" opacity="0.85"/>
<circle cx="57.3" cy="274.6" r="1.2" fill="#4a5230" opacity="0.85"/>
<circle cx="117.5" cy="255.9" r="1.1" fill="#4a5230" opacity="0.85"/>
<circle cx="79.9" cy="265.2" r="0.8" fill="#5a6236" opacity="0.85"/>
<circle cx="98.9" cy="254.9" r="0.9" fill="#4a5230" opacity="0.85"/>
<circle cx="90.3" cy="258.2" r="0.9" fill="#4a5230" opacity="0.85"/>
<circle cx="113.9" cy="255.8" r="1.2" fill="#3a4226" opacity="0.85"/>
<circle cx="96.1" cy="251.1" r="0.8" fill="#4a5230" opacity="0.85"/>
<circle cx="78.7" cy="263.8" r="1.7" fill="#3a4226" opacity="0.85"/>
<circle cx="127.2" cy="248.1" r="1.0" fill="#3a4226" opacity="0.85"/>
<circle cx="43.2" cy="277.2" r="1.3" fill="#4a5230" opacity="0.85"/>
<circle cx="84.0" cy="267.2" r="1.6" fill="#3a4226" opacity="0.85"/>
<circle cx="111.0" cy="251.1" r="1.6" fill="#5a6236" opacity="0.85"/>
<circle cx="68.4" cy="267.0" r="1.2" fill="#5a6236" opacity="0.85"/>
<circle cx="125.7" cy="251.1" r="1.7" fill="#3a4226" opacity="0.85"/>
<circle cx="106.4" cy="251.5" r="1.4" fill="#5a6236" opacity="0.85"/>
<circle cx="74.1" cy="259.6" r="1.2" fill="#4a5230" opacity="0.85"/>
<circle cx="107.4" cy="255.3" r="1.7" fill="#4a5230" opacity="0.85"/>
<circle cx="133.1" cy="242.5" r="1.4" fill="#4a5230" opacity="0.85"/>
<circle cx="157.5" cy="247.7" r="1.7" fill="#4a5230" opacity="0.85"/>
<circle cx="55.5" cy="270.5" r="1.2" fill="#4a5230" opacity="0.85"/>
<circle cx="113.1" cy="254.0" r="1.0" fill="#5a6236" opacity="0.85"/>
<circle cx="62.1" cy="269.9" r="1.5" fill="#4a5230" opacity="0.85"/>
<circle cx="82.7" cy="257.3" r="1.1" fill="#5a6236" opacity="0.85"/>
<circle cx="157.9" cy="236.4" r="2.1" fill="#3a4226" opacity="0.85"/>
<circle cx="87.3" cy="262.6" r="1.3" fill="#4a5230" opacity="0.85"/>
<circle cx="148.5" cy="247.4" r="1.9" fill="#4a5230" opacity="0.85"/>
<circle cx="149.7" cy="246.3" r="2.0" fill="#5a6236" opacity="0.85"/>
<circle cx="48.1" cy="271.9" r="2.1" fill="#3a4226" opacity="0.85"/>
<circle cx="115.6" cy="252.6" r="0.8" fill="#4a5230" opacity="0.85"/>
<circle cx="43.5" cy="275.7" r="1.1" fill="#3a4226" opacity="0.85"/>
<circle cx="131.3" cy="246.8" r="1.2" fill="#5a6236" opacity="0.85"/>
<circle cx="145.7" cy="236.0" r="1.5" fill="#4a5230" opacity="0.85"/>
<circle cx="152.1" cy="242.5" r="2.1" fill="#3a4226" opacity="0.85"/>
<circle cx="57.2" cy="271.5" r="1.5" fill="#4a5230" opacity="0.85"/>
<circle cx="147.0" cy="245.3" r="1.2" fill="#4a5230" opacity="0.85"/>
<circle cx="113.6" cy="256.4" r="2.0" fill="#4a5230" opacity="0.85"/>
<circle cx="66.0" cy="268.7" r="1.3" fill="#5a6236" opacity="0.85"/>
<circle cx="133.8" cy="249.4" r="2.2" fill="#4a5230" opacity="0.85"/>
<circle cx="76.4" cy="264.5" r="1.9" fill="#4a5230" opacity="0.85"/>
<circle cx="59.1" cy="272.7" r="1.0" fill="#3a4226" opacity="0.85"/>
<circle cx="128.6" cy="248.9" r="1.9" fill="#4a5230" opacity="0.85"/>
<circle cx="96.3" cy="257.3" r="2.1" fill="#5a6236" opacity="0.85"/>
<circle cx="126.2" cy="252.4" r="2.2" fill="#3a4226" opacity="0.85"/>
<circle cx="44.9" cy="276.3" r="0.8" fill="#5a6236" opacity="0.85"/>
<circle cx="57.0" cy="277.3" r="1.1" fill="#5a6236" opacity="0.85"/>
<circle cx="92.2" cy="261.5" r="0.9" fill="#3a4226" opacity="0.85"/>
<circle cx="54.1" cy="273.3" r="2.2" fill="#3a4226" opacity="0.85"/>
<circle cx="103.5" cy="259.7" r="1.0" fill="#5a6236" opacity="0.85"/>
<circle cx="128.8" cy="249.7" r="2.2" fill="#5a6236" opacity="0.85"/>
<circle cx="104.1" cy="261.4" r="1.3" fill="#4a5230" opacity="0.85"/>
<circle cx="66.6" cy="262.7" r="1.8" fill="#4a5230" opacity="0.85"/>
<circle cx="128.6" cy="256.1" r="1.2" fill="#5a6236" opacity="0.85"/>
<circle cx="163.3" cy="257.2" r="1.4" fill="#4a5230" opacity="0.85"/>
<circle cx="142.8" cy="266.7" r="1.3" fill="#4a5230" opacity="0.85"/>
<circle cx="117.1" cy="271.9" r="1.6" fill="#5a6236" opacity="0.85"/>
<circle cx="149.5" cy="302.0" r="1.8" fill="#6a6e40" opacity="0.85"/>
<circle cx="135.0" cy="264.1" r="1.3" fill="#5a6236" opacity="0.85"/>
<circle cx="122.6" cy="289.4" r="1.9" fill="#5a6236" opacity="0.85"/>
<circle cx="159.9" cy="282.2" r="1.7" fill="#4a5230" opacity="0.85"/>
<circle cx="161.3" cy="260.5" r="1.8" fill="#6a6e40" opacity="0.85"/>
<circle cx="164.6" cy="293.1" r="1.0" fill="#6a6e40" opacity="0.85"/>
<circle cx="157.2" cy="290.7" r="0.9" fill="#6a6e40" opacity="0.85"/>
<circle cx="149.7" cy="264.5" r="1.4" fill="#6a6e40" opacity="0.85"/>
<circle cx="148.4" cy="272.0" r="0.8" fill="#6a6e40" opacity="0.85"/>
<circle cx="152.3" cy="294.6" r="1.3" fill="#6a6e40" opacity="0.85"/>
<circle cx="142.3" cy="267.7" r="1.9" fill="#6a6e40" opacity="0.85"/>
<circle cx="158.5" cy="266.2" r="1.4" fill="#4a5230" opacity="0.85"/>
<circle cx="141.3" cy="280.9" r="2.0" fill="#6a6e40" opacity="0.85"/>
<circle cx="118.6" cy="291.4" r="1.1" fill="#6a6e40" opacity="0.85"/>
<circle cx="145.6" cy="261.1" r="2.0" fill="#5a6236" opacity="0.85"/>
<circle cx="132.4" cy="279.6" r="1.1" fill="#6a6e40" opacity="0.85"/>
<circle cx="122.1" cy="298.9" r="1.3" fill="#6a6e40" opacity="0.85"/>
<circle cx="125.2" cy="255.6" r="1.1" fill="#5a6236" opacity="0.85"/>
<circle cx="123.6" cy="292.8" r="1.0" fill="#5a6236" opacity="0.85"/>
<circle cx="162.4" cy="294.8" r="2.0" fill="#6a6e40" opacity="0.85"/>
<circle cx="117.2" cy="267.7" r="1.0" fill="#5a6236" opacity="0.85"/>
<circle cx="122.7" cy="260.3" r="1.3" fill="#4a5230" opacity="0.85"/>
<circle cx="148.2" cy="275.8" r="1.4" fill="#5a6236" opacity="0.85"/>
<circle cx="119.4" cy="268.5" r="1.8" fill="#5a6236" opacity="0.85"/>
<circle cx="137.5" cy="273.3" r="1.9" fill="#4a5230" opacity="0.85"/>
<circle cx="122.5" cy="284.8" r="1.5" fill="#5a6236" opacity="0.85"/>
<circle cx="148.0" cy="281.5" r="1.3" fill="#6a6e40" opacity="0.85"/>
<circle cx="134.1" cy="247.0" r="0.8" fill="#4a5230" opacity="0.85"/>
<circle cx="128.0" cy="279.7" r="1.8" fill="#5a6236" opacity="0.85"/>
<circle cx="128.7" cy="264.5" r="1.2" fill="#4a5230" opacity="0.85"/>
<circle cx="136.9" cy="275.9" r="2.0" fill="#5a6236" opacity="0.85"/>
<circle cx="125.1" cy="270.1" r="1.7" fill="#5a6236" opacity="0.85"/>
<circle cx="133.6" cy="248.5" r="1.3" fill="#5a6236" opacity="0.85"/>
<circle cx="117.1" cy="288.9" r="1.4" fill="#5a6236" opacity="0.85"/>
<circle cx="145.4" cy="260.6" r="1.3" fill="#4a5230" opacity="0.85"/>
<circle cx="143.9" cy="298.7" r="2.2" fill="#4a5230" opacity="0.85"/>
<circle cx="157.6" cy="279.1" r="1.7" fill="#4a5230" opacity="0.85"/>
<circle cx="131.5" cy="250.0" r="1.3" fill="#5a6236" opacity="0.85"/>
<circle cx="141.3" cy="274.3" r="1.9" fill="#6a6e40" opacity="0.85"/>
<circle cx="116.3" cy="279.8" r="2.1" fill="#5a6236" opacity="0.85"/>
<circle cx="150.0" cy="270.9" r="1.0" fill="#5a6236" opacity="0.85"/>
<circle cx="118.3" cy="268.7" r="1.5" fill="#4a5230" opacity="0.85"/>
<circle cx="156.2" cy="284.2" r="1.1" fill="#6a6e40" opacity="0.85"/>
<circle cx="142.1" cy="298.8" r="1.6" fill="#5a6236" opacity="0.85"/>
<circle cx="153.5" cy="289.9" r="0.9" fill="#4a5230" opacity="0.85"/>
<circle cx="157.4" cy="278.5" r="0.9" fill="#4a5230" opacity="0.85"/>
</g>
<polygon points="117.0,230.0 125.0,220.0 137.0,213.0 149.0,212.0 145.0,220.0 131.0,228.0 121.0,234.0" fill="#2a2a1e" opacity="0.75" filter="url(#b1)"/>
</g>
<g filter="url(#b05)">
<circle cx="28.2" cy="231.4" r="1.8" fill="#4a5230" opacity="0.9"/>
<circle cx="138.6" cy="200.5" r="1.5" fill="#4a5230" opacity="0.9"/>
<circle cx="97.6" cy="210.4" r="2.2" fill="#4a5230" opacity="0.9"/>
<circle cx="164.7" cy="198.1" r="2.2" fill="#4a5230" opacity="0.9"/>
<circle cx="63.1" cy="217.1" r="2.4" fill="#4a5230" opacity="0.9"/>
<circle cx="163.3" cy="197.2" r="1.4" fill="#3e4628" opacity="0.9"/>
<circle cx="72.6" cy="215.6" r="1.4" fill="#3e4628" opacity="0.9"/>
<circle cx="91.6" cy="211.0" r="1.1" fill="#3e4628" opacity="0.9"/>
<circle cx="52.3" cy="220.8" r="1.6" fill="#5a6036" opacity="0.9"/>
<circle cx="53.6" cy="220.0" r="1.1" fill="#5a6036" opacity="0.9"/>
<circle cx="112.8" cy="207.5" r="1.9" fill="#5a6036" opacity="0.9"/>
<circle cx="102.6" cy="208.5" r="2.1" fill="#4a5230" opacity="0.9"/>
<circle cx="83.5" cy="213.3" r="1.9" fill="#5a6036" opacity="0.9"/>
<circle cx="62.1" cy="218.0" r="1.6" fill="#5a6036" opacity="0.9"/>
<circle cx="138.5" cy="200.2" r="1.3" fill="#3e4628" opacity="0.9"/>
<circle cx="58.7" cy="219.4" r="2.1" fill="#5a6036" opacity="0.9"/>
<circle cx="106.6" cy="207.8" r="2.0" fill="#4a5230" opacity="0.9"/>
<circle cx="146.7" cy="198.7" r="1.6" fill="#5a6036" opacity="0.9"/>
<circle cx="33.7" cy="227.8" r="2.2" fill="#5a6036" opacity="0.9"/>
<circle cx="89.6" cy="210.6" r="2.0" fill="#5a6036" opacity="0.9"/>
<circle cx="135.1" cy="201.8" r="1.9" fill="#5a6036" opacity="0.9"/>
<circle cx="127.3" cy="204.1" r="1.7" fill="#4a5230" opacity="0.9"/>
<circle cx="36.9" cy="228.0" r="1.3" fill="#4a5230" opacity="0.9"/>
<circle cx="84.8" cy="212.0" r="1.1" fill="#4a5230" opacity="0.9"/>
<circle cx="77.2" cy="214.6" r="1.4" fill="#3e4628" opacity="0.9"/>
<circle cx="117.9" cy="204.8" r="1.1" fill="#5a6036" opacity="0.9"/>
<circle cx="35.0" cy="227.3" r="1.6" fill="#4a5230" opacity="0.9"/>
<circle cx="146.2" cy="200.3" r="2.0" fill="#5a6036" opacity="0.9"/>
<circle cx="38.1" cy="227.5" r="1.5" fill="#4a5230" opacity="0.9"/>
<circle cx="37.8" cy="227.4" r="2.4" fill="#3e4628" opacity="0.9"/>
<circle cx="161.1" cy="197.5" r="1.2" fill="#3e4628" opacity="0.9"/>
<circle cx="48.5" cy="222.6" r="1.1" fill="#3e4628" opacity="0.9"/>
<circle cx="37.3" cy="226.4" r="1.5" fill="#3e4628" opacity="0.9"/>
<circle cx="32.2" cy="229.9" r="1.2" fill="#4a5230" opacity="0.9"/>
<circle cx="164.4" cy="198.3" r="1.7" fill="#3e4628" opacity="0.9"/>
<circle cx="88.5" cy="210.9" r="2.1" fill="#4a5230" opacity="0.9"/>
<circle cx="45.1" cy="223.4" r="1.4" fill="#5a6036" opacity="0.9"/>
<circle cx="96.1" cy="209.4" r="1.2" fill="#3e4628" opacity="0.9"/>
<circle cx="130.2" cy="203.4" r="2.3" fill="#5a6036" opacity="0.9"/>
<circle cx="153.7" cy="197.7" r="1.8" fill="#4a5230" opacity="0.9"/>
<circle cx="66.6" cy="217.6" r="1.9" fill="#4a5230" opacity="0.9"/>
<circle cx="40.8" cy="225.2" r="1.7" fill="#3e4628" opacity="0.9"/>
<circle cx="126.4" cy="203.1" r="2.1" fill="#3e4628" opacity="0.9"/>
<circle cx="136.4" cy="202.0" r="1.6" fill="#5a6036" opacity="0.9"/>
<circle cx="97.7" cy="210.4" r="1.8" fill="#3e4628" opacity="0.9"/>
<circle cx="20.4" cy="232.6" r="1.8" fill="#3e4628" opacity="0.9"/>
<circle cx="112.0" cy="206.0" r="1.8" fill="#3e4628" opacity="0.9"/>
<circle cx="26.4" cy="232.0" r="2.0" fill="#3e4628" opacity="0.9"/>
<circle cx="40.5" cy="226.5" r="1.5" fill="#5a6036" opacity="0.9"/>
<circle cx="146.0" cy="199.7" r="1.2" fill="#4a5230" opacity="0.9"/>
<circle cx="31.0" cy="229.2" r="1.2" fill="#3e4628" opacity="0.9"/>
<circle cx="95.4" cy="209.6" r="1.7" fill="#4a5230" opacity="0.9"/>
<circle cx="100.3" cy="208.4" r="1.4" fill="#4a5230" opacity="0.9"/>
<circle cx="57.5" cy="219.4" r="2.4" fill="#4a5230" opacity="0.9"/>
<circle cx="124.0" cy="204.3" r="1.3" fill="#4a5230" opacity="0.9"/>
<circle cx="17.3" cy="235.5" r="1.7" fill="#5a6036" opacity="0.9"/>
<circle cx="100.6" cy="209.6" r="1.3" fill="#4a5230" opacity="0.9"/>
<circle cx="38.0" cy="226.2" r="1.0" fill="#3e4628" opacity="0.9"/>
<circle cx="108.6" cy="206.7" r="1.8" fill="#4a5230" opacity="0.9"/>
<circle cx="27.6" cy="231.3" r="1.3" fill="#5a6036" opacity="0.9"/>
<circle cx="131.2" cy="202.7" r="2.1" fill="#4a5230" opacity="0.9"/>
<circle cx="26.0" cy="231.4" r="1.1" fill="#4a5230" opacity="0.9"/>
<circle cx="107.7" cy="208.1" r="2.1" fill="#3e4628" opacity="0.9"/>
<circle cx="27.6" cy="231.7" r="1.8" fill="#4a5230" opacity="0.9"/>
<circle cx="16.6" cy="235.7" r="1.6" fill="#3e4628" opacity="0.9"/>
<circle cx="19.8" cy="234.3" r="1.2" fill="#5a6036" opacity="0.9"/>
<circle cx="116.8" cy="205.1" r="1.5" fill="#4a5230" opacity="0.9"/>
<circle cx="45.6" cy="224.5" r="2.0" fill="#5a6036" opacity="0.9"/>
<circle cx="161.4" cy="198.8" r="2.1" fill="#3e4628" opacity="0.9"/>
<circle cx="20.7" cy="233.5" r="1.5" fill="#4a5230" opacity="0.9"/>
</g>
<clipPath id="grc"><polygon points="0.0,311.0 65.0,309.0 185.0,306.0 185.0,470.0 125.0,462.0 97.0,465.0 58.0,471.0 0.0,477.0"/></clipPath>
<linearGradient id="grg" x1="0" y1="306" x2="0" y2="477" gradientUnits="userSpaceOnUse"><stop offset="0" stop-color="#c86430"/><stop offset="0.15" stop-color="#d46c36"/><stop offset="0.5" stop-color="#dc763c"/><stop offset="0.85" stop-color="#d8723a"/><stop offset="1" stop-color="#e08448"/></linearGradient>
<polygon points="0.0,311.0 65.0,309.0 185.0,306.0 185.0,470.0 125.0,462.0 97.0,465.0 58.0,471.0 0.0,477.0" fill="url(#grg)"/>
<g clip-path="url(#grc)">
<g filter="url(#b05)">
<ellipse cx="124.0" cy="408.5" rx="4.4" ry="0.9" fill="#e8884a" opacity="0.45"/>
<ellipse cx="129.8" cy="326.9" rx="8.0" ry="0.7" fill="#b85a28" opacity="0.45"/>
<ellipse cx="132.6" cy="386.9" rx="8.4" ry="0.8" fill="#e8884a" opacity="0.45"/>
<ellipse cx="136.7" cy="453.6" rx="9.3" ry="1.0" fill="#c06030" opacity="0.45"/>
<ellipse cx="97.4" cy="378.3" rx="8.8" ry="1.0" fill="#c06030" opacity="0.45"/>
<ellipse cx="49.3" cy="457.1" rx="6.7" ry="1.2" fill="#b85a28" opacity="0.45"/>
<ellipse cx="11.2" cy="430.5" rx="8.6" ry="1.0" fill="#b85a28" opacity="0.45"/>
<ellipse cx="39.6" cy="401.1" rx="6.9" ry="1.1" fill="#c06030" opacity="0.45"/>
<ellipse cx="149.8" cy="415.8" rx="8.0" ry="0.8" fill="#e8884a" opacity="0.45"/>
<ellipse cx="131.0" cy="415.4" rx="9.6" ry="1.1" fill="#e8884a" opacity="0.45"/>
<ellipse cx="156.4" cy="347.3" rx="7.7" ry="1.1" fill="#c06030" opacity="0.45"/>
<ellipse cx="98.2" cy="438.4" rx="8.6" ry="0.5" fill="#e8884a" opacity="0.45"/>
<ellipse cx="99.6" cy="455.6" rx="9.1" ry="0.8" fill="#e8884a" opacity="0.45"/>
<ellipse cx="99.8" cy="381.6" rx="5.3" ry="0.6" fill="#e8884a" opacity="0.45"/>
<ellipse cx="65.0" cy="382.9" rx="3.2" ry="0.7" fill="#e8884a" opacity="0.45"/>
<ellipse cx="30.9" cy="446.4" rx="5.9" ry="0.9" fill="#b85a28" opacity="0.45"/>
<ellipse cx="19.9" cy="415.4" rx="3.3" ry="1.1" fill="#b85a28" opacity="0.45"/>
<ellipse cx="64.3" cy="362.9" rx="4.1" ry="0.6" fill="#e8884a" opacity="0.45"/>
<ellipse cx="146.8" cy="404.5" rx="9.3" ry="0.8" fill="#e8884a" opacity="0.45"/>
<ellipse cx="52.6" cy="444.4" rx="8.5" ry="0.9" fill="#b85a28" opacity="0.45"/>
<ellipse cx="64.5" cy="314.4" rx="9.0" ry="0.6" fill="#b85a28" opacity="0.45"/>
<ellipse cx="75.0" cy="434.4" rx="4.8" ry="0.7" fill="#b85a28" opacity="0.45"/>
<ellipse cx="162.4" cy="423.2" rx="8.3" ry="1.0" fill="#b85a28" opacity="0.45"/>
<ellipse cx="153.2" cy="447.1" rx="7.7" ry="0.6" fill="#c06030" opacity="0.45"/>
<ellipse cx="54.6" cy="353.0" rx="5.1" ry="0.7" fill="#c06030" opacity="0.45"/>
<ellipse cx="104.3" cy="369.4" rx="6.7" ry="1.0" fill="#c06030" opacity="0.45"/>
<ellipse cx="82.2" cy="367.6" rx="9.8" ry="0.5" fill="#c06030" opacity="0.45"/>
<ellipse cx="19.6" cy="369.6" rx="5.2" ry="0.9" fill="#b85a28" opacity="0.45"/>
<ellipse cx="120.3" cy="425.5" rx="3.2" ry="0.7" fill="#b85a28" opacity="0.45"/>
<ellipse cx="1.2" cy="453.5" rx="4.9" ry="0.6" fill="#c06030" opacity="0.45"/>
<ellipse cx="83.8" cy="462.7" rx="4.2" ry="0.9" fill="#e8884a" opacity="0.45"/>
<ellipse cx="103.5" cy="349.3" rx="8.4" ry="0.5" fill="#c06030" opacity="0.45"/>
<ellipse cx="161.4" cy="410.3" rx="8.6" ry="1.0" fill="#e8884a" opacity="0.45"/>
<ellipse cx="81.3" cy="459.2" rx="5.5" ry="1.1" fill="#e8884a" opacity="0.45"/>
<ellipse cx="26.7" cy="399.3" rx="8.8" ry="1.1" fill="#e8884a" opacity="0.45"/>
<ellipse cx="147.5" cy="343.1" rx="8.7" ry="0.5" fill="#e8884a" opacity="0.45"/>
<ellipse cx="121.8" cy="338.6" rx="5.2" ry="0.5" fill="#e8884a" opacity="0.45"/>
<ellipse cx="160.3" cy="429.6" rx="5.5" ry="1.0" fill="#e8884a" opacity="0.45"/>
<ellipse cx="51.1" cy="454.6" rx="4.4" ry="0.7" fill="#e8884a" opacity="0.45"/>
<ellipse cx="66.5" cy="415.2" rx="5.5" ry="0.7" fill="#e8884a" opacity="0.45"/>
<ellipse cx="44.0" cy="343.6" rx="9.4" ry="0.8" fill="#e8884a" opacity="0.45"/>
<ellipse cx="105.1" cy="429.8" rx="5.2" ry="0.6" fill="#c06030" opacity="0.45"/>
<ellipse cx="77.6" cy="396.8" rx="7.7" ry="1.0" fill="#e8884a" opacity="0.45"/>
<ellipse cx="64.6" cy="420.6" rx="5.8" ry="1.1" fill="#c06030" opacity="0.45"/>
<ellipse cx="20.0" cy="380.4" rx="3.1" ry="0.9" fill="#c06030" opacity="0.45"/>
<ellipse cx="93.5" cy="366.0" rx="9.6" ry="0.7" fill="#b85a28" opacity="0.45"/>
<ellipse cx="146.2" cy="444.3" rx="3.7" ry="0.9" fill="#e8884a" opacity="0.45"/>
<ellipse cx="137.7" cy="419.8" rx="9.5" ry="0.6" fill="#b85a28" opacity="0.45"/>
<ellipse cx="159.6" cy="408.1" rx="7.8" ry="1.0" fill="#e8884a" opacity="0.45"/>
<ellipse cx="138.9" cy="431.5" rx="8.9" ry="0.8" fill="#e8884a" opacity="0.45"/>
<ellipse cx="132.9" cy="365.5" rx="4.3" ry="1.1" fill="#c06030" opacity="0.45"/>
<ellipse cx="121.4" cy="375.0" rx="9.5" ry="0.7" fill="#b85a28" opacity="0.45"/>
<ellipse cx="55.9" cy="322.9" rx="5.9" ry="0.9" fill="#c06030" opacity="0.45"/>
<ellipse cx="110.2" cy="399.7" rx="5.8" ry="0.9" fill="#e8884a" opacity="0.45"/>
<ellipse cx="129.6" cy="414.9" rx="9.0" ry="0.6" fill="#b85a28" opacity="0.45"/>
<ellipse cx="110.8" cy="426.1" rx="6.5" ry="1.1" fill="#b85a28" opacity="0.45"/>
<ellipse cx="122.6" cy="436.1" rx="7.5" ry="1.1" fill="#b85a28" opacity="0.45"/>
<ellipse cx="106.8" cy="444.3" rx="5.7" ry="1.1" fill="#c06030" opacity="0.45"/>
<ellipse cx="11.1" cy="403.5" rx="8.8" ry="0.7" fill="#b85a28" opacity="0.45"/>
<ellipse cx="149.1" cy="359.4" rx="5.5" ry="0.9" fill="#b85a28" opacity="0.45"/>
<ellipse cx="56.2" cy="352.9" rx="21.9" ry="0.9" fill="#8e6a50" opacity="0.6"/>
<ellipse cx="72.8" cy="350.7" rx="20.5" ry="1.0" fill="#e8a070" opacity="0.6"/>
<ellipse cx="5.0" cy="343.2" rx="21.3" ry="0.6" fill="#b07a58" opacity="0.6"/>
<ellipse cx="13.8" cy="357.8" rx="10.3" ry="1.2" fill="#7a5a44" opacity="0.6"/>
<ellipse cx="159.0" cy="347.6" rx="16.6" ry="1.4" fill="#7a5a44" opacity="0.6"/>
<ellipse cx="137.7" cy="352.8" rx="21.4" ry="1.1" fill="#8e6a50" opacity="0.6"/>
<ellipse cx="32.9" cy="361.6" rx="11.1" ry="1.0" fill="#7a5a44" opacity="0.6"/>
<ellipse cx="118.2" cy="368.5" rx="17.1" ry="1.0" fill="#e8a070" opacity="0.6"/>
<ellipse cx="157.3" cy="342.8" rx="22.8" ry="0.7" fill="#7a5a44" opacity="0.6"/>
<ellipse cx="158.4" cy="361.2" rx="12.3" ry="1.6" fill="#8e6a50" opacity="0.6"/>
<ellipse cx="104.1" cy="345.5" rx="24.4" ry="1.5" fill="#e8a070" opacity="0.6"/>
<ellipse cx="72.3" cy="349.6" rx="12.5" ry="0.8" fill="#b07a58" opacity="0.6"/>
<ellipse cx="23.1" cy="354.2" rx="23.1" ry="0.6" fill="#9a6a48" opacity="0.6"/>
<ellipse cx="129.3" cy="350.4" rx="20.1" ry="1.4" fill="#9a6a48" opacity="0.6"/>
<ellipse cx="90.2" cy="346.7" rx="20.2" ry="1.5" fill="#e8a070" opacity="0.6"/>
<ellipse cx="117.3" cy="330.9" rx="7.2" ry="0.8" fill="#8e6a50" opacity="0.6"/>
<ellipse cx="137.0" cy="344.6" rx="16.2" ry="1.2" fill="#9a6a48" opacity="0.6"/>
<ellipse cx="91.1" cy="342.4" rx="12.0" ry="1.0" fill="#8e6a50" opacity="0.6"/>
<ellipse cx="2.5" cy="357.8" rx="23.1" ry="1.4" fill="#b07a58" opacity="0.6"/>
<ellipse cx="126.4" cy="361.5" rx="12.5" ry="1.5" fill="#7a5a44" opacity="0.6"/>
<ellipse cx="127.2" cy="327.0" rx="23.3" ry="1.4" fill="#b07a58" opacity="0.6"/>
<ellipse cx="147.5" cy="358.9" rx="24.5" ry="1.4" fill="#e8a070" opacity="0.6"/>
<ellipse cx="90.8" cy="347.8" rx="10.8" ry="0.6" fill="#9a6a48" opacity="0.6"/>
<ellipse cx="115.7" cy="353.7" rx="24.0" ry="1.6" fill="#b07a58" opacity="0.6"/>
<ellipse cx="126.7" cy="353.2" rx="23.0" ry="1.0" fill="#9a6a48" opacity="0.6"/>
<ellipse cx="-2.8" cy="348.7" rx="10.1" ry="1.2" fill="#b07a58" opacity="0.6"/>
<ellipse cx="-0.3" cy="363.4" rx="7.6" ry="1.4" fill="#9a6a48" opacity="0.6"/>
<ellipse cx="146.1" cy="331.7" rx="16.1" ry="0.7" fill="#7a5a44" opacity="0.6"/>
<ellipse cx="52.5" cy="344.7" rx="20.6" ry="1.5" fill="#8e6a50" opacity="0.6"/>
<ellipse cx="36.4" cy="350.3" rx="23.2" ry="1.0" fill="#8e6a50" opacity="0.6"/>
<ellipse cx="11.7" cy="369.6" rx="14.4" ry="1.2" fill="#b07a58" opacity="0.6"/>
<ellipse cx="124.5" cy="338.9" rx="16.8" ry="1.3" fill="#b07a58" opacity="0.6"/>
<ellipse cx="23.7" cy="343.6" rx="24.8" ry="1.3" fill="#b07a58" opacity="0.6"/>
<ellipse cx="112.6" cy="339.4" rx="15.0" ry="0.7" fill="#b07a58" opacity="0.6"/>
<ellipse cx="96.8" cy="360.1" rx="24.8" ry="0.8" fill="#b07a58" opacity="0.6"/>
<ellipse cx="91.2" cy="356.6" rx="20.2" ry="0.8" fill="#8e6a50" opacity="0.6"/>
<ellipse cx="36.2" cy="359.0" rx="6.0" ry="1.1" fill="#b07a58" opacity="0.6"/>
<ellipse cx="35.9" cy="350.7" rx="23.7" ry="0.8" fill="#8e6a50" opacity="0.6"/>
<ellipse cx="153.2" cy="341.0" rx="11.0" ry="0.8" fill="#8e6a50" opacity="0.6"/>
<ellipse cx="76.4" cy="338.6" rx="24.2" ry="1.4" fill="#8e6a50" opacity="0.6"/>
<ellipse cx="26.8" cy="355.9" rx="15.7" ry="0.7" fill="#b07a58" opacity="0.6"/>
<ellipse cx="150.8" cy="349.0" rx="6.0" ry="1.5" fill="#e8a070" opacity="0.6"/>
<ellipse cx="105.2" cy="363.9" rx="17.6" ry="1.4" fill="#e8a070" opacity="0.6"/>
<ellipse cx="8.2" cy="359.9" rx="7.0" ry="1.1" fill="#7a5a44" opacity="0.6"/>
<ellipse cx="72.7" cy="348.5" rx="10.0" ry="0.8" fill="#e8a070" opacity="0.6"/>
<ellipse cx="133.0" cy="343.9" rx="14.7" ry="0.7" fill="#9a6a48" opacity="0.6"/>
<ellipse cx="109.2" cy="366.3" rx="7.6" ry="1.1" fill="#8e6a50" opacity="0.6"/>
<ellipse cx="9.9" cy="352.7" rx="10.5" ry="1.5" fill="#8e6a50" opacity="0.6"/>
<ellipse cx="10.3" cy="352.8" rx="11.6" ry="1.1" fill="#e8a070" opacity="0.6"/>
<ellipse cx="161.4" cy="361.7" rx="20.6" ry="0.6" fill="#8e6a50" opacity="0.6"/>
<ellipse cx="2.4" cy="347.7" rx="10.1" ry="1.0" fill="#b07a58" opacity="0.6"/>
<ellipse cx="152.0" cy="340.0" rx="16.9" ry="0.8" fill="#8e6a50" opacity="0.6"/>
<ellipse cx="150.2" cy="361.4" rx="6.6" ry="1.3" fill="#b07a58" opacity="0.6"/>
<ellipse cx="131.2" cy="341.8" rx="7.0" ry="1.2" fill="#7a5a44" opacity="0.6"/>
<ellipse cx="70.1" cy="352.1" rx="11.7" ry="0.9" fill="#7a5a44" opacity="0.6"/>
<ellipse cx="60.0" cy="347.4" rx="9.1" ry="0.8" fill="#b07a58" opacity="0.6"/>
<ellipse cx="124.6" cy="369.0" rx="20.3" ry="0.9" fill="#9a6a48" opacity="0.6"/>
<ellipse cx="-2.8" cy="329.3" rx="16.2" ry="0.9" fill="#e8a070" opacity="0.6"/>
<ellipse cx="145.7" cy="361.1" rx="20.6" ry="1.4" fill="#7a5a44" opacity="0.6"/>
<ellipse cx="130.1" cy="350.2" rx="16.1" ry="0.7" fill="#7a5a44" opacity="0.6"/>
<ellipse cx="67.3" cy="352.3" rx="8.3" ry="1.1" fill="#9a6a48" opacity="0.6"/>
<ellipse cx="85.3" cy="356.8" rx="18.3" ry="1.1" fill="#b07a58" opacity="0.6"/>
<ellipse cx="153.3" cy="338.5" rx="18.0" ry="1.2" fill="#9a6a48" opacity="0.6"/>
<ellipse cx="43.9" cy="352.2" rx="23.2" ry="0.6" fill="#7a5a44" opacity="0.6"/>
<ellipse cx="68.3" cy="370.1" rx="17.6" ry="1.2" fill="#9a6a48" opacity="0.6"/>
<ellipse cx="112.4" cy="368.8" rx="20.2" ry="1.4" fill="#9a6a48" opacity="0.6"/>
<ellipse cx="53.1" cy="357.8" rx="22.5" ry="1.2" fill="#e8a070" opacity="0.6"/>
<ellipse cx="158.9" cy="353.0" rx="18.2" ry="1.2" fill="#8e6a50" opacity="0.6"/>
<ellipse cx="96.6" cy="351.4" rx="7.2" ry="0.7" fill="#8e6a50" opacity="0.6"/>
<ellipse cx="7.5" cy="346.8" rx="7.4" ry="1.2" fill="#b07a58" opacity="0.6"/>
</g>
<polygon points="0.0,342.0 65.0,343.0 160.0,346.0 160.0,349.0 65.0,347.0 0.0,346.0" fill="#7a5a48" opacity="0.6" filter="url(#b1)"/>
<polygon points="0.0,431.0 55.0,428.0 105.0,424.0 160.0,417.0 165.0,427.0 105.0,432.0 55.0,437.0 0.0,444.0" fill="#8a3018" opacity="0.95" filter="url(#b05)"/>
<ellipse cx="141" cy="338" rx="3" ry="2" fill="#2a1a14" filter="url(#b05)"/>
<path d="M103.0,392.0 Q125.0,398.0 130.0,406.0 T150.0,406.0" stroke="#a04a24" stroke-width="1.4" fill="none" opacity="0.8" filter="url(#b05)"/>
<path d="M101.0,448.0 Q125.0,440.0 150.0,442.0" stroke="#a84c26" stroke-width="1" fill="none" opacity="0.7" filter="url(#b05)"/>
</g>
<g filter="url(#b05)">
<rect x="116.1" y="299.6" width="2.3" height="11.4" fill="#8a5038" opacity="0.5"/>
<rect x="91.3" y="304.7" width="1.4" height="6.3" fill="#8a5038" opacity="0.5"/>
<rect x="122.1" y="295.3" width="2.5" height="13.0" fill="#8a5038" opacity="0.5"/>
<rect x="142.7" y="299.0" width="1.5" height="7.6" fill="#8a5038" opacity="0.5"/>
<rect x="83.5" y="303.2" width="1.2" height="7.7" fill="#8a5038" opacity="0.5"/>
<rect x="78.8" y="297.4" width="1.9" height="12.8" fill="#8a5038" opacity="0.5"/>
<rect x="44.1" y="294.2" width="2.2" height="11.3" fill="#8a5038" opacity="0.5"/>
<rect x="74.0" y="296.4" width="1.1" height="9.9" fill="#8a5038" opacity="0.5"/>
<rect x="139.6" y="293.7" width="1.4" height="6.7" fill="#8a5038" opacity="0.5"/>
<rect x="108.0" y="293.8" width="1.4" height="8.1" fill="#8a5038" opacity="0.5"/>
<rect x="151.3" y="305.2" width="1.5" height="5.8" fill="#8a5038" opacity="0.5"/>
<rect x="57.0" y="297.8" width="2.1" height="9.0" fill="#8a5038" opacity="0.5"/>
<rect x="55.8" y="301.6" width="2.3" height="9.4" fill="#8a5038" opacity="0.5"/>
<rect x="55.7" y="302.9" width="2.4" height="6.2" fill="#8a5038" opacity="0.5"/>
<rect x="116.1" y="304.5" width="2.1" height="6.5" fill="#8a5038" opacity="0.5"/>
<rect x="65.1" y="304.6" width="1.4" height="6.1" fill="#8a5038" opacity="0.5"/>
<rect x="47.5" y="297.9" width="1.6" height="8.3" fill="#8a5038" opacity="0.5"/>
<rect x="94.1" y="299.3" width="1.2" height="10.4" fill="#8a5038" opacity="0.5"/>
<rect x="96.5" y="298.3" width="1.7" height="12.7" fill="#8a5038" opacity="0.5"/>
<rect x="148.7" y="298.5" width="1.1" height="7.5" fill="#8a5038" opacity="0.5"/>
<rect x="68.3" y="298.8" width="1.4" height="8.7" fill="#8a5038" opacity="0.5"/>
<rect x="42.2" y="299.6" width="1.7" height="7.7" fill="#8a5038" opacity="0.5"/>
<rect x="111.4" y="306.0" width="2.4" height="5.0" fill="#8a5038" opacity="0.5"/>
<rect x="42.5" y="298.6" width="1.1" height="10.2" fill="#8a5038" opacity="0.5"/>
<rect x="98.8" y="297.1" width="1.2" height="9.8" fill="#8a5038" opacity="0.5"/>
<rect x="93.6" y="305.3" width="2.2" height="5.7" fill="#8a5038" opacity="0.5"/>
<rect x="135.8" y="301.2" width="1.1" height="8.2" fill="#8a5038" opacity="0.5"/>
<rect x="133.6" y="293.9" width="2.1" height="9.8" fill="#8a5038" opacity="0.5"/>
<rect x="67.2" y="299.6" width="1.9" height="11.4" fill="#8a5038" opacity="0.5"/>
<rect x="147.8" y="301.4" width="2.0" height="6.3" fill="#8a5038" opacity="0.5"/>
<rect x="116.1" y="303.0" width="2.0" height="7.1" fill="#8a5038" opacity="0.5"/>
<rect x="80.6" y="298.0" width="2.3" height="8.6" fill="#8a5038" opacity="0.5"/>
<rect x="40.2" y="304.1" width="2.0" height="6.9" fill="#8a5038" opacity="0.5"/>
<rect x="122.5" y="293.2" width="1.7" height="11.8" fill="#8a5038" opacity="0.5"/>
<rect x="91.2" y="304.1" width="1.4" height="6.9" fill="#8a5038" opacity="0.5"/>
<rect x="139.9" y="297.0" width="1.5" height="7.6" fill="#8a5038" opacity="0.5"/>
<rect x="43.3" y="293.3" width="1.2" height="8.9" fill="#8a5038" opacity="0.5"/>
<rect x="95.5" y="293.9" width="1.6" height="12.8" fill="#8a5038" opacity="0.5"/>
<rect x="127.8" y="301.7" width="1.3" height="9.3" fill="#8a5038" opacity="0.5"/>
<rect x="59.1" y="299.1" width="1.5" height="11.9" fill="#8a5038" opacity="0.5"/>
</g>
<polygon points="0.0,477.0 58.0,471.0 97.0,465.0 127.0,461.0 185.0,461.0 1125.0,461.0 1125.0,538.0 0.0,538.0" fill="url(#water)"/>
<polygon points="0.0,478.0 11.0,478.0 49.0,494.0 70.0,503.0 83.0,511.0 75.0,528.0 57.0,538.0 0.0,538.0" fill="#c8642e"/>
<polygon points="0.0,480.0 25.0,484.0 55.0,498.0 35.0,496.0 0.0,490.0" fill="#9a4020" opacity="0.6" filter="url(#b1)"/>
<polygon points="0.0,518.0 45.0,523.0 65.0,536.0 0.0,536.0" fill="#b0502a" opacity="0.5" filter="url(#b1)"/>
<linearGradient id="cgR" x1="0" y1="0" x2="0" y2="1"><stop offset="0" stop-color="#8e9eaa"/><stop offset="0.35" stop-color="#a4aaa8"/><stop offset="0.6" stop-color="#c9bc9e"/><stop offset="1" stop-color="#d4c6a6"/></linearGradient>
<path d="M95.0,511.0 L110.0,503.0 L135.0,500.0 L160.0,502.0 L177.0,506.0 L193.0,510.0 L189.0,518.0 L165.0,526.0 L137.0,529.0 L110.0,526.0Z" fill="url(#cgR)" filter="url(#b1)" opacity="1" stroke-linejoin="round"/>
<path d="M202.0,509.0 L215.0,503.0 L240.0,501.0 L270.0,503.0 L285.0,508.0 L315.0,516.0 L321.0,526.0 L305.0,534.0 L270.0,535.0 L235.0,532.0 L215.0,524.0Z" fill="url(#cgR)" filter="url(#b1)" opacity="1" stroke-linejoin="round"/>
<path d="M377.0,515.0 L390.0,506.0 L413.0,504.0 L433.0,508.0 L438.0,520.0 L425.0,531.0 L397.0,530.0Z" fill="url(#cgR)" filter="url(#b1)" opacity="1" stroke-linejoin="round"/>
<ellipse cx="338" cy="518" rx="6" ry="4" fill="#a8aaa4" opacity="0.7" filter="url(#b1)"/>
<ellipse cx="78" cy="489" rx="12" ry="3" fill="#9eaab0" opacity="0.6" filter="url(#b1)"/>
<clipPath id="rrc"><polygon points="409.0,478.0 899.0,478.0 887.0,503.0 875.0,538.0 448.0,538.0 448.0,499.0"/></clipPath>
<polygon points="409.0,478.0 899.0,478.0 887.0,503.0 875.0,538.0 448.0,538.0 448.0,499.0" fill="#40221a"/>
<g clip-path="url(#rrc)">
<linearGradient id="pil" x1="0" y1="0" x2="1" y2="0"><stop offset="0" stop-color="#8a3418"/><stop offset="0.35" stop-color="#cc642e"/><stop offset="0.7" stop-color="#c45a28"/><stop offset="1" stop-color="#9a4020"/></linearGradient>
<rect x="504" y="520" width="33" height="18" rx="4" fill="url(#pil)"/>
<rect x="566" y="491" width="51" height="47" rx="4" fill="url(#pil)"/>
<rect x="618" y="499" width="32" height="39" rx="4" fill="url(#pil)"/>
<rect x="652" y="502" width="32" height="36" rx="4" fill="url(#pil)"/>
<rect x="688" y="493" width="22" height="45" rx="4" fill="url(#pil)"/>
<polygon points="763.0,478.0 899.0,478.0 887.0,503.0 875.0,538.0 763.0,538.0" fill="#c05a2a"/>
<g filter="url(#b1)">
<rect x="784" y="478" width="9" height="60" fill="#5a2414" opacity="0.85"/>
<rect x="831" y="478" width="14" height="60" fill="#4a2012" opacity="0.85"/>
<rect x="805" y="478" width="6" height="60" fill="#e07840" opacity="0.85"/>
<rect x="855" y="478" width="10" height="60" fill="#d87040" opacity="0.85"/>
<rect x="763" y="478" width="6" height="60" fill="#7a3018" opacity="0.85"/>
</g>
<g filter="url(#b05)">
<rect x="886.8" y="487.7" width="1.4" height="10.4" fill="#8a3a1c" opacity="0.5"/>
<rect x="633.1" y="529.1" width="1.0" height="12.9" fill="#7a3018" opacity="0.5"/>
<rect x="823.3" y="493.2" width="1.5" height="6.6" fill="#e07a44" opacity="0.5"/>
<rect x="583.6" y="516.2" width="2.8" height="5.7" fill="#d87040" opacity="0.5"/>
<rect x="773.2" y="527.1" width="1.5" height="12.4" fill="#d87040" opacity="0.5"/>
<rect x="884.5" y="536.3" width="2.4" height="6.2" fill="#e07a44" opacity="0.5"/>
<rect x="673.9" y="533.0" width="1.1" height="14.8" fill="#d87040" opacity="0.5"/>
<rect x="816.4" y="530.1" width="2.6" height="13.5" fill="#8a3a1c" opacity="0.5"/>
<rect x="826.4" y="532.7" width="2.9" height="7.5" fill="#8a3a1c" opacity="0.5"/>
<rect x="795.2" y="495.4" width="2.4" height="8.3" fill="#d87040" opacity="0.5"/>
<rect x="884.5" y="521.2" width="1.1" height="14.6" fill="#e07a44" opacity="0.5"/>
<rect x="591.1" y="509.1" width="1.7" height="14.9" fill="#d87040" opacity="0.5"/>
<rect x="620.9" y="536.9" width="1.2" height="17.6" fill="#e07a44" opacity="0.5"/>
<rect x="613.3" y="505.3" width="2.4" height="9.9" fill="#e07a44" opacity="0.5"/>
<rect x="656.5" y="519.3" width="2.8" height="6.5" fill="#d87040" opacity="0.5"/>
<rect x="670.4" y="510.4" width="1.9" height="9.3" fill="#7a3018" opacity="0.5"/>
<rect x="859.3" y="495.1" width="2.0" height="5.2" fill="#d87040" opacity="0.5"/>
<rect x="777.9" y="529.4" width="2.3" height="13.2" fill="#d87040" opacity="0.5"/>
<rect x="871.0" y="494.5" width="1.1" height="10.9" fill="#8a3a1c" opacity="0.5"/>
<rect x="764.9" y="523.7" width="1.5" height="5.9" fill="#8a3a1c" opacity="0.5"/>
<rect x="664.8" y="486.2" width="1.5" height="8.4" fill="#d87040" opacity="0.5"/>
<rect x="568.3" y="536.4" width="1.3" height="9.4" fill="#7a3018" opacity="0.5"/>
<rect x="816.0" y="531.5" width="1.7" height="17.1" fill="#7a3018" opacity="0.5"/>
<rect x="585.2" y="522.2" width="1.5" height="15.3" fill="#7a3018" opacity="0.5"/>
<rect x="606.3" y="517.5" width="3.0" height="15.5" fill="#d87040" opacity="0.5"/>
<rect x="816.7" y="523.3" width="1.5" height="15.4" fill="#e07a44" opacity="0.5"/>
<rect x="577.1" y="527.3" width="1.9" height="11.1" fill="#d87040" opacity="0.5"/>
<rect x="867.8" y="515.4" width="1.3" height="7.5" fill="#d87040" opacity="0.5"/>
<rect x="578.7" y="525.0" width="2.0" height="11.8" fill="#7a3018" opacity="0.5"/>
<rect x="651.5" y="497.5" width="1.6" height="13.3" fill="#e07a44" opacity="0.5"/>
<rect x="638.5" y="537.3" width="3.0" height="16.7" fill="#d87040" opacity="0.5"/>
<rect x="791.7" y="529.0" width="2.4" height="17.5" fill="#7a3018" opacity="0.5"/>
<rect x="829.4" y="488.9" width="2.2" height="6.2" fill="#8a3a1c" opacity="0.5"/>
<rect x="604.4" y="534.4" width="2.8" height="11.0" fill="#d87040" opacity="0.5"/>
<rect x="862.7" y="521.7" width="2.0" height="9.0" fill="#8a3a1c" opacity="0.5"/>
<rect x="771.9" y="508.7" width="1.1" height="15.4" fill="#d87040" opacity="0.5"/>
<rect x="871.2" y="526.1" width="1.7" height="10.8" fill="#7a3018" opacity="0.5"/>
<rect x="776.3" y="490.6" width="2.8" height="6.7" fill="#d87040" opacity="0.5"/>
<rect x="573.5" y="501.6" width="1.1" height="14.8" fill="#7a3018" opacity="0.5"/>
<rect x="773.9" y="522.3" width="2.4" height="14.6" fill="#8a3a1c" opacity="0.5"/>
<rect x="600.0" y="513.6" width="2.4" height="9.1" fill="#e07a44" opacity="0.5"/>
<rect x="785.1" y="522.8" width="1.7" height="16.6" fill="#e07a44" opacity="0.5"/>
<rect x="777.9" y="535.0" width="2.9" height="14.4" fill="#e07a44" opacity="0.5"/>
<rect x="884.5" y="525.5" width="1.8" height="7.6" fill="#d87040" opacity="0.5"/>
<rect x="879.3" y="491.6" width="2.6" height="9.4" fill="#d87040" opacity="0.5"/>
<rect x="569.3" y="536.8" width="2.2" height="9.1" fill="#7a3018" opacity="0.5"/>
<rect x="646.5" y="528.7" width="2.7" height="12.5" fill="#8a3a1c" opacity="0.5"/>
<rect x="658.9" y="532.8" width="2.9" height="9.3" fill="#7a3018" opacity="0.5"/>
<rect x="796.8" y="501.7" width="2.2" height="10.1" fill="#7a3018" opacity="0.5"/>
<rect x="791.8" y="525.3" width="2.5" height="12.4" fill="#d87040" opacity="0.5"/>
<rect x="662.4" y="537.5" width="2.5" height="14.8" fill="#7a3018" opacity="0.5"/>
<rect x="846.3" y="508.7" width="1.6" height="8.1" fill="#7a3018" opacity="0.5"/>
<rect x="645.2" y="530.1" width="2.8" height="6.8" fill="#8a3a1c" opacity="0.5"/>
<rect x="870.0" y="535.2" width="1.9" height="11.0" fill="#d87040" opacity="0.5"/>
<rect x="652.1" y="491.2" width="1.7" height="5.3" fill="#8a3a1c" opacity="0.5"/>
<rect x="592.8" y="511.9" width="1.1" height="16.2" fill="#e07a44" opacity="0.5"/>
<rect x="823.5" y="502.1" width="2.3" height="16.6" fill="#e07a44" opacity="0.5"/>
<rect x="806.8" y="524.4" width="1.7" height="16.9" fill="#8a3a1c" opacity="0.5"/>
<rect x="623.1" y="496.8" width="1.7" height="9.7" fill="#8a3a1c" opacity="0.5"/>
<rect x="835.2" y="516.7" width="1.9" height="14.3" fill="#e07a44" opacity="0.5"/>
<rect x="786.3" y="528.7" width="2.6" height="9.6" fill="#d87040" opacity="0.5"/>
<rect x="659.7" y="497.4" width="2.8" height="17.9" fill="#e07a44" opacity="0.5"/>
<rect x="584.6" y="534.3" width="1.4" height="8.9" fill="#7a3018" opacity="0.5"/>
<rect x="886.5" y="514.4" width="2.0" height="13.7" fill="#d87040" opacity="0.5"/>
<rect x="637.4" y="495.5" width="2.8" height="12.2" fill="#8a3a1c" opacity="0.5"/>
<rect x="668.5" y="496.8" width="1.0" height="11.5" fill="#d87040" opacity="0.5"/>
<rect x="626.3" y="493.5" width="2.3" height="15.4" fill="#e07a44" opacity="0.5"/>
<rect x="850.3" y="498.2" width="1.4" height="13.2" fill="#8a3a1c" opacity="0.5"/>
<rect x="763.7" y="533.0" width="1.3" height="15.2" fill="#7a3018" opacity="0.5"/>
<rect x="593.4" y="517.4" width="2.8" height="7.6" fill="#8a3a1c" opacity="0.5"/>
</g>
<polygon points="405.0,478.0 617.0,478.0 617.0,489.0 595.0,503.0 564.0,530.0 525.0,518.0 485.0,506.0 447.0,499.0" fill="#5a4a2c" opacity="0.95" filter="url(#b1)"/>
<polygon points="617.0,478.0 733.0,478.0 725.0,493.0 695.0,507.0 645.0,503.0 617.0,496.0" fill="#4e5030" filter="url(#b1)"/>
<g filter="url(#b05)">
<circle cx="564.8" cy="513.6" r="1.8" fill="#9a4a28" opacity="0.7"/>
<circle cx="582.2" cy="499.2" r="1.5" fill="#3e4428" opacity="0.7"/>
<circle cx="603.8" cy="500.1" r="0.9" fill="#4a5030" opacity="0.7"/>
<circle cx="594.5" cy="506.0" r="1.4" fill="#9a4a28" opacity="0.7"/>
<circle cx="507.0" cy="509.9" r="2.2" fill="#9a4a28" opacity="0.7"/>
<circle cx="496.7" cy="514.1" r="2.2" fill="#6a6a40" opacity="0.7"/>
<circle cx="447.2" cy="498.5" r="1.7" fill="#9a4a28" opacity="0.7"/>
<circle cx="477.0" cy="509.7" r="1.4" fill="#6a6a40" opacity="0.7"/>
<circle cx="453.6" cy="493.8" r="1.5" fill="#6a6a40" opacity="0.7"/>
<circle cx="498.5" cy="520.0" r="1.9" fill="#b05a30" opacity="0.7"/>
<circle cx="512.2" cy="525.2" r="1.5" fill="#6a6a40" opacity="0.7"/>
<circle cx="509.4" cy="503.4" r="1.5" fill="#6a6a40" opacity="0.7"/>
<circle cx="429.7" cy="513.1" r="2.2" fill="#3e4428" opacity="0.7"/>
<circle cx="435.1" cy="514.7" r="1.3" fill="#55582f" opacity="0.7"/>
<circle cx="553.1" cy="497.6" r="1.0" fill="#b05a30" opacity="0.7"/>
<circle cx="524.6" cy="480.1" r="1.9" fill="#3e4428" opacity="0.7"/>
<circle cx="485.9" cy="509.5" r="2.1" fill="#3e4428" opacity="0.7"/>
<circle cx="605.4" cy="509.0" r="1.0" fill="#55582f" opacity="0.7"/>
<circle cx="547.5" cy="514.8" r="2.1" fill="#6a6a40" opacity="0.7"/>
<circle cx="540.3" cy="511.9" r="1.4" fill="#9a4a28" opacity="0.7"/>
<circle cx="533.0" cy="511.9" r="1.3" fill="#6a6a40" opacity="0.7"/>
<circle cx="524.9" cy="498.1" r="1.1" fill="#4a5030" opacity="0.7"/>
<circle cx="442.2" cy="523.2" r="2.2" fill="#b05a30" opacity="0.7"/>
<circle cx="479.6" cy="502.0" r="1.5" fill="#9a4a28" opacity="0.7"/>
<circle cx="519.3" cy="479.0" r="1.6" fill="#9a4a28" opacity="0.7"/>
<circle cx="542.8" cy="501.8" r="1.3" fill="#3e4428" opacity="0.7"/>
<circle cx="536.9" cy="506.3" r="2.0" fill="#4a5030" opacity="0.7"/>
<circle cx="489.1" cy="497.4" r="1.3" fill="#55582f" opacity="0.7"/>
<circle cx="522.8" cy="491.8" r="1.3" fill="#3e4428" opacity="0.7"/>
<circle cx="447.0" cy="512.5" r="0.8" fill="#6a6a40" opacity="0.7"/>
<circle cx="456.9" cy="514.8" r="1.0" fill="#9a4a28" opacity="0.7"/>
<circle cx="460.6" cy="480.9" r="1.2" fill="#55582f" opacity="0.7"/>
<circle cx="609.2" cy="523.3" r="0.9" fill="#6a6a40" opacity="0.7"/>
<circle cx="525.2" cy="524.1" r="0.9" fill="#6a6a40" opacity="0.7"/>
<circle cx="501.8" cy="487.6" r="1.8" fill="#55582f" opacity="0.7"/>
<circle cx="492.2" cy="482.7" r="2.0" fill="#6a6a40" opacity="0.7"/>
<circle cx="534.4" cy="526.8" r="0.9" fill="#4a5030" opacity="0.7"/>
<circle cx="447.1" cy="480.0" r="1.3" fill="#55582f" opacity="0.7"/>
<circle cx="541.0" cy="483.6" r="1.0" fill="#6a6a40" opacity="0.7"/>
<circle cx="454.5" cy="495.9" r="2.1" fill="#6a6a40" opacity="0.7"/>
<circle cx="487.1" cy="527.0" r="1.4" fill="#3e4428" opacity="0.7"/>
<circle cx="496.8" cy="500.3" r="1.5" fill="#4a5030" opacity="0.7"/>
<circle cx="614.0" cy="513.3" r="1.0" fill="#6a6a40" opacity="0.7"/>
<circle cx="593.6" cy="517.7" r="1.7" fill="#55582f" opacity="0.7"/>
<circle cx="426.8" cy="504.5" r="1.8" fill="#4a5030" opacity="0.7"/>
<circle cx="571.6" cy="505.4" r="2.0" fill="#4a5030" opacity="0.7"/>
<circle cx="505.3" cy="522.1" r="1.6" fill="#9a4a28" opacity="0.7"/>
<circle cx="547.0" cy="503.6" r="1.0" fill="#4a5030" opacity="0.7"/>
<circle cx="598.0" cy="506.0" r="1.0" fill="#6a6a40" opacity="0.7"/>
<circle cx="552.7" cy="485.8" r="1.7" fill="#b05a30" opacity="0.7"/>
<circle cx="575.4" cy="517.3" r="1.5" fill="#4a5030" opacity="0.7"/>
<circle cx="583.9" cy="496.1" r="1.8" fill="#6a6a40" opacity="0.7"/>
<circle cx="529.0" cy="514.4" r="1.4" fill="#3e4428" opacity="0.7"/>
<circle cx="606.1" cy="524.4" r="1.7" fill="#9a4a28" opacity="0.7"/>
<circle cx="594.0" cy="487.5" r="2.2" fill="#6a6a40" opacity="0.7"/>
<circle cx="573.4" cy="517.4" r="1.9" fill="#b05a30" opacity="0.7"/>
<circle cx="552.6" cy="493.9" r="1.9" fill="#9a4a28" opacity="0.7"/>
<circle cx="575.2" cy="494.8" r="1.6" fill="#b05a30" opacity="0.7"/>
<circle cx="512.7" cy="491.8" r="2.1" fill="#4a5030" opacity="0.7"/>
<circle cx="513.4" cy="519.4" r="0.9" fill="#3e4428" opacity="0.7"/>
<circle cx="567.2" cy="506.7" r="2.1" fill="#b05a30" opacity="0.7"/>
<circle cx="516.5" cy="513.3" r="0.8" fill="#b05a30" opacity="0.7"/>
<circle cx="570.4" cy="483.1" r="1.2" fill="#4a5030" opacity="0.7"/>
<circle cx="536.2" cy="499.8" r="2.0" fill="#9a4a28" opacity="0.7"/>
<circle cx="431.3" cy="500.4" r="1.3" fill="#4a5030" opacity="0.7"/>
<circle cx="513.8" cy="514.1" r="1.1" fill="#55582f" opacity="0.7"/>
<circle cx="466.6" cy="517.1" r="1.1" fill="#b05a30" opacity="0.7"/>
<circle cx="603.6" cy="527.9" r="1.4" fill="#b05a30" opacity="0.7"/>
<circle cx="553.5" cy="510.4" r="1.2" fill="#55582f" opacity="0.7"/>
<circle cx="587.7" cy="498.1" r="2.1" fill="#3e4428" opacity="0.7"/>
<circle cx="606.7" cy="480.3" r="2.0" fill="#55582f" opacity="0.7"/>
<circle cx="474.0" cy="508.1" r="2.0" fill="#55582f" opacity="0.7"/>
<circle cx="563.1" cy="484.6" r="1.7" fill="#3e4428" opacity="0.7"/>
<circle cx="586.6" cy="491.0" r="1.5" fill="#3e4428" opacity="0.7"/>
<circle cx="510.6" cy="482.3" r="2.0" fill="#4a5030" opacity="0.7"/>
<circle cx="458.1" cy="508.0" r="2.0" fill="#4a5030" opacity="0.7"/>
<circle cx="560.8" cy="495.2" r="2.1" fill="#6a6a40" opacity="0.7"/>
<circle cx="606.4" cy="510.3" r="1.9" fill="#55582f" opacity="0.7"/>
<circle cx="452.2" cy="503.0" r="1.3" fill="#6a6a40" opacity="0.7"/>
<circle cx="596.3" cy="489.2" r="2.0" fill="#6a6a40" opacity="0.7"/>
<circle cx="465.0" cy="523.6" r="1.1" fill="#b05a30" opacity="0.7"/>
<circle cx="475.4" cy="527.7" r="0.9" fill="#3e4428" opacity="0.7"/>
<circle cx="521.6" cy="520.7" r="1.4" fill="#4a5030" opacity="0.7"/>
<circle cx="498.3" cy="501.5" r="1.2" fill="#4a5030" opacity="0.7"/>
<circle cx="563.9" cy="489.6" r="1.4" fill="#b05a30" opacity="0.7"/>
<circle cx="607.4" cy="524.2" r="1.0" fill="#55582f" opacity="0.7"/>
<circle cx="438.9" cy="493.9" r="2.0" fill="#6a6a40" opacity="0.7"/>
<circle cx="594.8" cy="501.5" r="2.1" fill="#b05a30" opacity="0.7"/>
<circle cx="488.5" cy="505.7" r="1.9" fill="#b05a30" opacity="0.7"/>
<circle cx="480.7" cy="495.1" r="0.9" fill="#3e4428" opacity="0.7"/>
<circle cx="607.0" cy="527.1" r="1.0" fill="#b05a30" opacity="0.7"/>
<circle cx="471.5" cy="494.5" r="1.6" fill="#6a6a40" opacity="0.7"/>
<circle cx="477.8" cy="479.4" r="1.1" fill="#4a5030" opacity="0.7"/>
<circle cx="606.4" cy="500.8" r="1.3" fill="#55582f" opacity="0.7"/>
<circle cx="554.1" cy="502.0" r="2.1" fill="#6a6a40" opacity="0.7"/>
<circle cx="523.6" cy="521.1" r="1.7" fill="#9a4a28" opacity="0.7"/>
<circle cx="452.7" cy="487.5" r="1.2" fill="#55582f" opacity="0.7"/>
<circle cx="463.8" cy="526.6" r="0.9" fill="#4a5030" opacity="0.7"/>
<circle cx="456.9" cy="481.5" r="1.5" fill="#55582f" opacity="0.7"/>
<circle cx="438.6" cy="519.8" r="1.7" fill="#55582f" opacity="0.7"/>
<circle cx="472.3" cy="483.0" r="1.1" fill="#b05a30" opacity="0.7"/>
<circle cx="557.6" cy="478.1" r="0.9" fill="#3e4428" opacity="0.7"/>
<circle cx="432.5" cy="492.0" r="2.1" fill="#55582f" opacity="0.7"/>
<circle cx="416.8" cy="498.8" r="2.1" fill="#b05a30" opacity="0.7"/>
<circle cx="521.6" cy="487.0" r="1.6" fill="#6a6a40" opacity="0.7"/>
<circle cx="596.2" cy="489.2" r="1.1" fill="#4a5030" opacity="0.7"/>
<circle cx="468.5" cy="522.0" r="1.5" fill="#9a4a28" opacity="0.7"/>
<circle cx="550.0" cy="497.2" r="2.2" fill="#4a5030" opacity="0.7"/>
<circle cx="428.5" cy="519.5" r="2.2" fill="#4a5030" opacity="0.7"/>
<circle cx="580.9" cy="522.6" r="1.5" fill="#3e4428" opacity="0.7"/>
<circle cx="487.8" cy="511.1" r="2.1" fill="#4a5030" opacity="0.7"/>
<circle cx="613.7" cy="509.2" r="1.7" fill="#6a6a40" opacity="0.7"/>
<circle cx="489.4" cy="496.3" r="1.0" fill="#9a4a28" opacity="0.7"/>
<circle cx="466.0" cy="485.1" r="1.0" fill="#6a6a40" opacity="0.7"/>
<circle cx="437.1" cy="517.8" r="1.0" fill="#9a4a28" opacity="0.7"/>
<circle cx="515.6" cy="506.7" r="1.6" fill="#3e4428" opacity="0.7"/>
<circle cx="507.7" cy="515.5" r="1.8" fill="#6a6a40" opacity="0.7"/>
<circle cx="499.5" cy="489.8" r="1.9" fill="#6a6a40" opacity="0.7"/>
<circle cx="594.1" cy="495.9" r="1.9" fill="#3e4428" opacity="0.7"/>
<circle cx="532.8" cy="499.5" r="1.5" fill="#4a5030" opacity="0.7"/>
<circle cx="459.5" cy="511.5" r="2.0" fill="#3e4428" opacity="0.7"/>
<circle cx="612.6" cy="489.9" r="0.9" fill="#6a6a40" opacity="0.7"/>
<circle cx="454.6" cy="491.0" r="1.9" fill="#4a5030" opacity="0.7"/>
<circle cx="482.8" cy="481.9" r="1.9" fill="#4a5030" opacity="0.7"/>
<circle cx="517.4" cy="524.8" r="1.1" fill="#6a6a40" opacity="0.7"/>
<circle cx="449.4" cy="499.6" r="2.1" fill="#4a5030" opacity="0.7"/>
<circle cx="556.2" cy="499.4" r="1.0" fill="#4a5030" opacity="0.7"/>
<circle cx="514.6" cy="527.5" r="1.8" fill="#55582f" opacity="0.7"/>
<circle cx="446.3" cy="509.3" r="0.9" fill="#b05a30" opacity="0.7"/>
<circle cx="422.9" cy="480.4" r="1.5" fill="#55582f" opacity="0.7"/>
<circle cx="558.4" cy="503.5" r="1.0" fill="#55582f" opacity="0.7"/>
<circle cx="456.9" cy="490.9" r="1.4" fill="#6a6a40" opacity="0.7"/>
<circle cx="595.5" cy="478.2" r="1.1" fill="#3e4428" opacity="0.7"/>
<circle cx="435.2" cy="498.4" r="1.6" fill="#9a4a28" opacity="0.7"/>
<circle cx="613.8" cy="494.7" r="1.2" fill="#55582f" opacity="0.7"/>
<circle cx="481.0" cy="479.9" r="1.4" fill="#3e4428" opacity="0.7"/>
<circle cx="428.8" cy="482.2" r="0.9" fill="#6a6a40" opacity="0.7"/>
<circle cx="613.1" cy="524.0" r="0.9" fill="#b05a30" opacity="0.7"/>
<circle cx="551.1" cy="490.6" r="0.9" fill="#3e4428" opacity="0.7"/>
<circle cx="527.5" cy="500.4" r="0.9" fill="#b05a30" opacity="0.7"/>
<circle cx="577.9" cy="501.7" r="1.0" fill="#3e4428" opacity="0.7"/>
<circle cx="502.5" cy="511.0" r="0.8" fill="#6a6a40" opacity="0.7"/>
<circle cx="530.6" cy="526.8" r="0.9" fill="#55582f" opacity="0.7"/>
<circle cx="573.1" cy="481.7" r="1.9" fill="#6a6a40" opacity="0.7"/>
<circle cx="425.8" cy="507.2" r="1.8" fill="#9a4a28" opacity="0.7"/>
<circle cx="449.1" cy="519.5" r="1.4" fill="#9a4a28" opacity="0.7"/>
<circle cx="447.4" cy="499.9" r="1.1" fill="#6a6a40" opacity="0.7"/>
<circle cx="433.3" cy="514.3" r="2.0" fill="#55582f" opacity="0.7"/>
<circle cx="596.5" cy="511.0" r="1.2" fill="#4a5030" opacity="0.7"/>
<circle cx="438.0" cy="497.0" r="1.7" fill="#4a5030" opacity="0.7"/>
<circle cx="445.6" cy="521.7" r="0.9" fill="#9a4a28" opacity="0.7"/>
<circle cx="614.3" cy="493.9" r="2.1" fill="#b05a30" opacity="0.7"/>
<circle cx="588.0" cy="507.4" r="2.2" fill="#55582f" opacity="0.7"/>
<circle cx="572.0" cy="520.0" r="1.5" fill="#9a4a28" opacity="0.7"/>
<circle cx="518.7" cy="502.1" r="1.3" fill="#9a4a28" opacity="0.7"/>
<circle cx="485.9" cy="506.0" r="2.2" fill="#b05a30" opacity="0.7"/>
<circle cx="470.5" cy="503.1" r="1.5" fill="#3e4428" opacity="0.7"/>
<circle cx="500.9" cy="507.9" r="0.9" fill="#9a4a28" opacity="0.7"/>
<circle cx="470.2" cy="516.5" r="1.8" fill="#9a4a28" opacity="0.7"/>
<circle cx="518.5" cy="490.4" r="2.1" fill="#b05a30" opacity="0.7"/>
<circle cx="523.5" cy="505.2" r="1.2" fill="#55582f" opacity="0.7"/>
<circle cx="421.4" cy="490.8" r="1.2" fill="#55582f" opacity="0.7"/>
<circle cx="457.6" cy="500.6" r="1.3" fill="#9a4a28" opacity="0.7"/>
<circle cx="506.0" cy="482.3" r="1.3" fill="#55582f" opacity="0.7"/>
<circle cx="456.5" cy="489.7" r="1.9" fill="#55582f" opacity="0.7"/>
<circle cx="562.0" cy="490.8" r="1.3" fill="#4a5030" opacity="0.7"/>
<circle cx="469.6" cy="481.0" r="1.3" fill="#4a5030" opacity="0.7"/>
<circle cx="502.5" cy="508.4" r="2.0" fill="#9a4a28" opacity="0.7"/>
<circle cx="575.9" cy="489.5" r="1.3" fill="#4a5030" opacity="0.7"/>
<circle cx="558.9" cy="514.9" r="1.1" fill="#4a5030" opacity="0.7"/>
<circle cx="488.9" cy="491.5" r="1.5" fill="#55582f" opacity="0.7"/>
<circle cx="441.2" cy="494.9" r="1.4" fill="#3e4428" opacity="0.7"/>
<circle cx="472.7" cy="485.8" r="1.0" fill="#55582f" opacity="0.7"/>
<circle cx="451.7" cy="485.9" r="1.2" fill="#55582f" opacity="0.7"/>
<circle cx="585.5" cy="494.6" r="2.0" fill="#4a5030" opacity="0.7"/>
<circle cx="500.4" cy="487.6" r="1.9" fill="#9a4a28" opacity="0.7"/>
<circle cx="516.8" cy="483.6" r="1.2" fill="#b05a30" opacity="0.7"/>
<circle cx="494.5" cy="507.8" r="1.2" fill="#4a5030" opacity="0.7"/>
<circle cx="493.4" cy="487.3" r="1.9" fill="#55582f" opacity="0.7"/>
<circle cx="489.4" cy="516.1" r="1.3" fill="#55582f" opacity="0.7"/>
<circle cx="422.0" cy="513.8" r="1.1" fill="#b05a30" opacity="0.7"/>
<circle cx="549.9" cy="508.5" r="1.2" fill="#6a6a40" opacity="0.7"/>
<circle cx="556.6" cy="520.4" r="1.1" fill="#3e4428" opacity="0.7"/>
<circle cx="532.2" cy="506.7" r="1.3" fill="#4a5030" opacity="0.7"/>
<circle cx="529.3" cy="503.8" r="2.0" fill="#4a5030" opacity="0.7"/>
<circle cx="517.0" cy="484.1" r="1.1" fill="#9a4a28" opacity="0.7"/>
<circle cx="613.6" cy="523.8" r="0.8" fill="#6a6a40" opacity="0.7"/>
<circle cx="438.2" cy="527.3" r="1.1" fill="#3e4428" opacity="0.7"/>
<circle cx="463.7" cy="507.4" r="1.3" fill="#4a5030" opacity="0.7"/>
<circle cx="518.9" cy="505.5" r="1.2" fill="#3e4428" opacity="0.7"/>
<circle cx="570.2" cy="502.0" r="2.2" fill="#4a5030" opacity="0.7"/>
<circle cx="547.7" cy="501.1" r="1.6" fill="#6a6a40" opacity="0.7"/>
<circle cx="570.6" cy="520.1" r="1.6" fill="#3e4428" opacity="0.7"/>
<circle cx="447.0" cy="525.8" r="2.2" fill="#55582f" opacity="0.7"/>
<circle cx="503.1" cy="527.6" r="0.9" fill="#3e4428" opacity="0.7"/>
<circle cx="589.2" cy="512.7" r="0.9" fill="#4a5030" opacity="0.7"/>
<circle cx="451.8" cy="478.2" r="1.4" fill="#3e4428" opacity="0.7"/>
<circle cx="472.9" cy="513.1" r="1.5" fill="#55582f" opacity="0.7"/>
<circle cx="448.8" cy="503.5" r="1.5" fill="#9a4a28" opacity="0.7"/>
<circle cx="473.0" cy="505.1" r="1.1" fill="#3e4428" opacity="0.7"/>
<circle cx="657.4" cy="486.4" r="1.7" fill="#b05a30" opacity="0.7"/>
<circle cx="648.0" cy="497.0" r="1.7" fill="#55582f" opacity="0.7"/>
<circle cx="658.7" cy="480.9" r="1.7" fill="#b05a30" opacity="0.7"/>
<circle cx="689.5" cy="481.4" r="1.7" fill="#4a5030" opacity="0.7"/>
<circle cx="655.3" cy="488.4" r="2.1" fill="#9a4a28" opacity="0.7"/>
<circle cx="642.1" cy="478.1" r="2.2" fill="#6a6a40" opacity="0.7"/>
<circle cx="692.1" cy="489.2" r="1.4" fill="#6a6a40" opacity="0.7"/>
<circle cx="636.5" cy="495.6" r="1.0" fill="#9a4a28" opacity="0.7"/>
<circle cx="709.1" cy="479.5" r="1.3" fill="#9a4a28" opacity="0.7"/>
<circle cx="694.1" cy="494.9" r="1.5" fill="#3e4428" opacity="0.7"/>
<circle cx="707.5" cy="491.5" r="0.9" fill="#6a6a40" opacity="0.7"/>
<circle cx="695.4" cy="484.5" r="1.7" fill="#6a6a40" opacity="0.7"/>
<circle cx="696.3" cy="497.3" r="1.7" fill="#9a4a28" opacity="0.7"/>
<circle cx="649.8" cy="491.4" r="1.8" fill="#55582f" opacity="0.7"/>
<circle cx="686.7" cy="481.4" r="1.2" fill="#55582f" opacity="0.7"/>
<circle cx="639.7" cy="502.3" r="1.9" fill="#b05a30" opacity="0.7"/>
<circle cx="711.2" cy="494.8" r="1.8" fill="#9a4a28" opacity="0.7"/>
<circle cx="681.0" cy="496.8" r="1.3" fill="#3e4428" opacity="0.7"/>
<circle cx="679.1" cy="482.1" r="0.9" fill="#4a5030" opacity="0.7"/>
<circle cx="626.1" cy="493.6" r="1.6" fill="#55582f" opacity="0.7"/>
<circle cx="726.8" cy="496.2" r="1.2" fill="#4a5030" opacity="0.7"/>
<circle cx="637.0" cy="498.7" r="1.5" fill="#4a5030" opacity="0.7"/>
<circle cx="686.9" cy="483.7" r="0.9" fill="#55582f" opacity="0.7"/>
<circle cx="668.3" cy="484.0" r="1.1" fill="#9a4a28" opacity="0.7"/>
<circle cx="718.5" cy="486.5" r="0.8" fill="#9a4a28" opacity="0.7"/>
<circle cx="659.1" cy="500.7" r="0.8" fill="#55582f" opacity="0.7"/>
<circle cx="630.7" cy="482.0" r="1.2" fill="#9a4a28" opacity="0.7"/>
<circle cx="651.0" cy="496.4" r="0.9" fill="#6a6a40" opacity="0.7"/>
<circle cx="728.8" cy="489.0" r="1.9" fill="#9a4a28" opacity="0.7"/>
<circle cx="679.5" cy="478.1" r="0.9" fill="#9a4a28" opacity="0.7"/>
<circle cx="642.7" cy="480.3" r="2.1" fill="#b05a30" opacity="0.7"/>
<circle cx="671.7" cy="493.0" r="2.0" fill="#3e4428" opacity="0.7"/>
<circle cx="696.0" cy="489.6" r="1.9" fill="#3e4428" opacity="0.7"/>
<circle cx="710.7" cy="501.5" r="1.1" fill="#9a4a28" opacity="0.7"/>
<circle cx="701.2" cy="498.8" r="1.1" fill="#55582f" opacity="0.7"/>
<circle cx="651.5" cy="479.1" r="0.9" fill="#3e4428" opacity="0.7"/>
<circle cx="724.8" cy="487.2" r="1.5" fill="#b05a30" opacity="0.7"/>
<circle cx="671.8" cy="493.6" r="1.9" fill="#55582f" opacity="0.7"/>
<circle cx="657.3" cy="483.2" r="1.3" fill="#55582f" opacity="0.7"/>
<circle cx="720.1" cy="501.3" r="1.0" fill="#6a6a40" opacity="0.7"/>
<circle cx="665.0" cy="482.6" r="2.2" fill="#6a6a40" opacity="0.7"/>
<circle cx="705.9" cy="482.9" r="1.8" fill="#9a4a28" opacity="0.7"/>
<circle cx="681.5" cy="500.5" r="1.2" fill="#9a4a28" opacity="0.7"/>
<circle cx="688.8" cy="490.1" r="1.3" fill="#b05a30" opacity="0.7"/>
<circle cx="712.1" cy="485.9" r="1.9" fill="#9a4a28" opacity="0.7"/>
<circle cx="645.7" cy="498.8" r="1.6" fill="#b05a30" opacity="0.7"/>
<circle cx="680.7" cy="500.4" r="1.8" fill="#6a6a40" opacity="0.7"/>
<circle cx="650.0" cy="499.6" r="1.9" fill="#55582f" opacity="0.7"/>
<circle cx="666.2" cy="489.7" r="2.0" fill="#55582f" opacity="0.7"/>
<circle cx="724.7" cy="482.7" r="0.9" fill="#3e4428" opacity="0.7"/>
<circle cx="636.5" cy="500.4" r="1.2" fill="#55582f" opacity="0.7"/>
<circle cx="714.9" cy="487.7" r="1.0" fill="#6a6a40" opacity="0.7"/>
<circle cx="698.6" cy="499.0" r="1.0" fill="#b05a30" opacity="0.7"/>
<circle cx="677.8" cy="489.0" r="1.5" fill="#4a5030" opacity="0.7"/>
<circle cx="618.9" cy="501.2" r="1.1" fill="#4a5030" opacity="0.7"/>
<circle cx="717.5" cy="494.2" r="0.9" fill="#3e4428" opacity="0.7"/>
<circle cx="641.6" cy="497.5" r="1.2" fill="#55582f" opacity="0.7"/>
<circle cx="684.2" cy="501.5" r="1.0" fill="#9a4a28" opacity="0.7"/>
<circle cx="659.0" cy="490.0" r="0.9" fill="#55582f" opacity="0.7"/>
<circle cx="634.8" cy="485.7" r="1.2" fill="#55582f" opacity="0.7"/>
</g>
</g>
<rect x="613" y="513" width="5" height="25" fill="#6aa0c0"/>
<rect x="650" y="510" width="4" height="28" fill="#6aa0c0"/>
<polygon points="895.0,478.0 984.0,478.0 960.0,493.0 940.0,510.0 930.0,538.0 873.0,538.0 887.0,503.0" fill="#6aa0be"/>
<clipPath id="brc"><polygon points="984.0,478.0 1125.0,478.0 1125.0,538.0 930.0,538.0 940.0,510.0 960.0,493.0"/></clipPath>
<polygon points="984.0,478.0 1125.0,478.0 1125.0,538.0 930.0,538.0 940.0,510.0 960.0,493.0" fill="#58392f"/>
<g clip-path="url(#brc)"><g filter="url(#b05)">
<ellipse cx="1085.3" cy="481.6" rx="9.7" ry="1.9" fill="#744838" opacity="0.6"/>
<ellipse cx="974.7" cy="483.0" rx="6.5" ry="0.9" fill="#6a4234" opacity="0.6"/>
<ellipse cx="961.5" cy="478.0" rx="13.2" ry="1.1" fill="#744838" opacity="0.6"/>
<ellipse cx="1082.7" cy="521.4" rx="5.1" ry="1.1" fill="#46302a" opacity="0.6"/>
<ellipse cx="947.9" cy="523.0" rx="8.5" ry="1.4" fill="#46302a" opacity="0.6"/>
<ellipse cx="1124.2" cy="490.5" rx="4.4" ry="1.7" fill="#6a4234" opacity="0.6"/>
<ellipse cx="1055.3" cy="510.0" rx="6.2" ry="1.3" fill="#6a4234" opacity="0.6"/>
<ellipse cx="1060.4" cy="513.1" rx="9.3" ry="1.7" fill="#3e2a28" opacity="0.6"/>
<ellipse cx="960.6" cy="502.4" rx="12.9" ry="1.3" fill="#46302a" opacity="0.6"/>
<ellipse cx="1036.9" cy="505.7" rx="9.7" ry="1.1" fill="#46302a" opacity="0.6"/>
<ellipse cx="941.0" cy="500.1" rx="12.8" ry="2.0" fill="#46302a" opacity="0.6"/>
<ellipse cx="976.8" cy="507.3" rx="5.6" ry="1.0" fill="#744838" opacity="0.6"/>
<ellipse cx="1099.9" cy="504.0" rx="10.4" ry="1.9" fill="#744838" opacity="0.6"/>
<ellipse cx="1053.5" cy="517.4" rx="10.6" ry="0.8" fill="#6a4234" opacity="0.6"/>
<ellipse cx="1069.0" cy="509.2" rx="6.3" ry="0.9" fill="#46302a" opacity="0.6"/>
<ellipse cx="1059.1" cy="495.2" rx="11.9" ry="1.2" fill="#744838" opacity="0.6"/>
<ellipse cx="948.1" cy="521.9" rx="4.7" ry="1.9" fill="#46302a" opacity="0.6"/>
<ellipse cx="1080.9" cy="533.0" rx="11.0" ry="1.5" fill="#6a4234" opacity="0.6"/>
<ellipse cx="1104.0" cy="485.1" rx="8.6" ry="1.4" fill="#6a4234" opacity="0.6"/>
<ellipse cx="1001.6" cy="504.1" rx="6.3" ry="2.0" fill="#3e2a28" opacity="0.6"/>
<ellipse cx="1021.0" cy="520.7" rx="7.8" ry="1.4" fill="#3e2a28" opacity="0.6"/>
<ellipse cx="1091.8" cy="513.2" rx="10.5" ry="1.1" fill="#744838" opacity="0.6"/>
<ellipse cx="955.7" cy="501.4" rx="10.1" ry="1.2" fill="#744838" opacity="0.6"/>
<ellipse cx="1010.1" cy="534.3" rx="13.0" ry="1.1" fill="#46302a" opacity="0.6"/>
<ellipse cx="1008.2" cy="480.0" rx="8.4" ry="1.9" fill="#3e2a28" opacity="0.6"/>
<ellipse cx="1107.2" cy="504.4" rx="11.6" ry="0.9" fill="#46302a" opacity="0.6"/>
<ellipse cx="1006.0" cy="508.4" rx="12.2" ry="1.8" fill="#3e2a28" opacity="0.6"/>
<ellipse cx="950.3" cy="506.4" rx="4.2" ry="1.0" fill="#744838" opacity="0.6"/>
<ellipse cx="1052.7" cy="526.9" rx="9.5" ry="1.5" fill="#46302a" opacity="0.6"/>
<ellipse cx="952.4" cy="527.3" rx="8.2" ry="1.1" fill="#744838" opacity="0.6"/>
<ellipse cx="987.6" cy="535.9" rx="9.6" ry="2.0" fill="#6a4234" opacity="0.6"/>
<ellipse cx="986.1" cy="481.5" rx="5.1" ry="1.3" fill="#744838" opacity="0.6"/>
<ellipse cx="1042.5" cy="521.3" rx="6.8" ry="1.4" fill="#744838" opacity="0.6"/>
<ellipse cx="1039.9" cy="479.3" rx="8.6" ry="1.2" fill="#3e2a28" opacity="0.6"/>
<ellipse cx="1052.7" cy="508.5" rx="4.9" ry="1.4" fill="#3e2a28" opacity="0.6"/>
<ellipse cx="970.8" cy="484.9" rx="9.1" ry="1.4" fill="#3e2a28" opacity="0.6"/>
<ellipse cx="999.8" cy="502.7" rx="12.9" ry="1.1" fill="#744838" opacity="0.6"/>
<ellipse cx="1123.0" cy="534.6" rx="6.6" ry="1.8" fill="#744838" opacity="0.6"/>
<ellipse cx="952.0" cy="510.9" rx="5.3" ry="1.8" fill="#46302a" opacity="0.6"/>
<ellipse cx="940.9" cy="529.8" rx="5.8" ry="1.1" fill="#744838" opacity="0.6"/>
<ellipse cx="1004.8" cy="488.4" rx="10.5" ry="1.2" fill="#46302a" opacity="0.6"/>
<ellipse cx="961.9" cy="516.5" rx="9.3" ry="1.3" fill="#744838" opacity="0.6"/>
<ellipse cx="1116.6" cy="501.5" rx="10.9" ry="1.0" fill="#3e2a28" opacity="0.6"/>
<ellipse cx="1005.5" cy="512.2" rx="9.2" ry="1.0" fill="#744838" opacity="0.6"/>
<ellipse cx="1118.0" cy="524.6" rx="13.9" ry="1.4" fill="#46302a" opacity="0.6"/>
<ellipse cx="973.1" cy="522.6" rx="11.1" ry="1.9" fill="#3e2a28" opacity="0.6"/>
<ellipse cx="1100.9" cy="494.1" rx="11.9" ry="1.4" fill="#3e2a28" opacity="0.6"/>
<ellipse cx="1045.3" cy="537.0" rx="12.9" ry="1.0" fill="#744838" opacity="0.6"/>
<ellipse cx="959.1" cy="487.3" rx="9.7" ry="1.1" fill="#3e2a28" opacity="0.6"/>
<ellipse cx="1098.0" cy="509.5" rx="5.4" ry="1.5" fill="#3e2a28" opacity="0.6"/>
<ellipse cx="1119.1" cy="495.3" rx="4.8" ry="1.0" fill="#46302a" opacity="0.6"/>
<ellipse cx="1114.8" cy="491.2" rx="8.7" ry="1.3" fill="#6a4234" opacity="0.6"/>
<ellipse cx="1082.3" cy="483.6" rx="13.5" ry="1.3" fill="#744838" opacity="0.6"/>
<ellipse cx="929.9" cy="484.0" rx="11.1" ry="1.5" fill="#46302a" opacity="0.6"/>
<ellipse cx="974.2" cy="495.2" rx="13.7" ry="1.2" fill="#46302a" opacity="0.6"/>
<ellipse cx="1102.3" cy="485.5" rx="12.5" ry="0.8" fill="#6a4234" opacity="0.6"/>
<ellipse cx="1035.0" cy="526.8" rx="5.5" ry="1.4" fill="#3e2a28" opacity="0.6"/>
<ellipse cx="994.1" cy="487.6" rx="4.9" ry="2.0" fill="#3e2a28" opacity="0.6"/>
<ellipse cx="1044.8" cy="533.3" rx="12.1" ry="1.5" fill="#3e2a28" opacity="0.6"/>
<ellipse cx="934.5" cy="508.1" rx="9.1" ry="0.8" fill="#3e2a28" opacity="0.6"/>
<ellipse cx="1066.3" cy="533.9" rx="10.5" ry="1.6" fill="#6a4234" opacity="0.6"/>
<ellipse cx="1080.6" cy="504.7" rx="8.6" ry="1.7" fill="#3e2a28" opacity="0.6"/>
<ellipse cx="1109.0" cy="519.3" rx="5.8" ry="0.9" fill="#744838" opacity="0.6"/>
<ellipse cx="966.9" cy="490.5" rx="10.7" ry="1.0" fill="#3e2a28" opacity="0.6"/>
<ellipse cx="1124.3" cy="504.7" rx="11.9" ry="1.6" fill="#744838" opacity="0.6"/>
<ellipse cx="1087.7" cy="481.5" rx="8.5" ry="0.9" fill="#46302a" opacity="0.6"/>
<ellipse cx="928.6" cy="506.8" rx="8.1" ry="1.9" fill="#6a4234" opacity="0.6"/>
<ellipse cx="971.4" cy="486.3" rx="4.5" ry="1.3" fill="#3e2a28" opacity="0.6"/>
<ellipse cx="986.0" cy="507.5" rx="8.0" ry="1.6" fill="#46302a" opacity="0.6"/>
<ellipse cx="989.6" cy="514.4" rx="14.0" ry="1.0" fill="#3e2a28" opacity="0.6"/>
<circle cx="929.5" cy="537.2" r="2.2" fill="#44404a" opacity="0.85"/>
<circle cx="950.3" cy="529.5" r="1.7" fill="#2e2e3a" opacity="0.85"/>
<circle cx="954.4" cy="528.2" r="1.8" fill="#3a3a4a" opacity="0.85"/>
<circle cx="949.1" cy="535.5" r="1.6" fill="#3a3a4a" opacity="0.85"/>
<circle cx="970.8" cy="508.0" r="1.1" fill="#3a3a4a" opacity="0.85"/>
<circle cx="963.2" cy="502.3" r="2.0" fill="#3a3a4a" opacity="0.85"/>
<circle cx="993.7" cy="484.9" r="2.2" fill="#2e2e3a" opacity="0.85"/>
<circle cx="1005.9" cy="480.7" r="1.9" fill="#2e2e3a" opacity="0.85"/>
<circle cx="946.0" cy="518.1" r="1.7" fill="#4a4a5a" opacity="0.85"/>
<circle cx="977.1" cy="499.1" r="1.1" fill="#3a3a4a" opacity="0.85"/>
<circle cx="980.4" cy="497.9" r="2.3" fill="#44404a" opacity="0.85"/>
<circle cx="949.7" cy="532.8" r="2.4" fill="#3a3a4a" opacity="0.85"/>
<circle cx="985.2" cy="503.8" r="1.9" fill="#4a4a5a" opacity="0.85"/>
<circle cx="962.7" cy="515.4" r="1.9" fill="#3a3a4a" opacity="0.85"/>
<circle cx="972.3" cy="520.3" r="1.0" fill="#2e2e3a" opacity="0.85"/>
<circle cx="964.7" cy="520.6" r="2.1" fill="#4a4a5a" opacity="0.85"/>
<circle cx="999.8" cy="479.9" r="2.1" fill="#4a4a5a" opacity="0.85"/>
<circle cx="967.5" cy="522.0" r="2.0" fill="#2e2e3a" opacity="0.85"/>
<circle cx="953.1" cy="514.9" r="2.1" fill="#3a3a4a" opacity="0.85"/>
<circle cx="984.1" cy="492.8" r="1.5" fill="#2e2e3a" opacity="0.85"/>
<circle cx="987.2" cy="487.2" r="2.2" fill="#2e2e3a" opacity="0.85"/>
<circle cx="932.0" cy="534.1" r="1.4" fill="#44404a" opacity="0.85"/>
<circle cx="982.8" cy="481.1" r="2.2" fill="#3a3a4a" opacity="0.85"/>
<circle cx="977.0" cy="501.8" r="2.3" fill="#3a3a4a" opacity="0.85"/>
<circle cx="966.5" cy="497.6" r="1.5" fill="#2e2e3a" opacity="0.85"/>
<circle cx="954.0" cy="510.5" r="2.2" fill="#44404a" opacity="0.85"/>
<circle cx="958.9" cy="508.4" r="2.1" fill="#3a3a4a" opacity="0.85"/>
<circle cx="998.5" cy="491.0" r="2.1" fill="#4a4a5a" opacity="0.85"/>
<circle cx="934.9" cy="532.1" r="2.3" fill="#2e2e3a" opacity="0.85"/>
<circle cx="999.7" cy="483.9" r="2.1" fill="#2e2e3a" opacity="0.85"/>
<circle cx="933.1" cy="536.7" r="1.3" fill="#44404a" opacity="0.85"/>
<circle cx="970.5" cy="519.1" r="1.8" fill="#2e2e3a" opacity="0.85"/>
<circle cx="956.6" cy="526.3" r="1.3" fill="#2e2e3a" opacity="0.85"/>
<circle cx="941.3" cy="531.4" r="2.0" fill="#3a3a4a" opacity="0.85"/>
<circle cx="980.3" cy="490.1" r="1.0" fill="#2e2e3a" opacity="0.85"/>
<circle cx="985.2" cy="483.9" r="2.1" fill="#44404a" opacity="0.85"/>
<circle cx="954.7" cy="526.4" r="1.6" fill="#3a3a4a" opacity="0.85"/>
<circle cx="989.5" cy="498.9" r="1.2" fill="#3a3a4a" opacity="0.85"/>
<circle cx="931.8" cy="534.0" r="2.3" fill="#44404a" opacity="0.85"/>
<circle cx="984.9" cy="483.0" r="1.9" fill="#44404a" opacity="0.85"/>
<circle cx="951.7" cy="515.6" r="1.6" fill="#4a4a5a" opacity="0.85"/>
<circle cx="992.6" cy="492.5" r="2.0" fill="#44404a" opacity="0.85"/>
<circle cx="974.3" cy="509.9" r="1.2" fill="#44404a" opacity="0.85"/>
<circle cx="990.9" cy="482.0" r="1.4" fill="#3a3a4a" opacity="0.85"/>
<circle cx="980.2" cy="490.8" r="1.4" fill="#44404a" opacity="0.85"/>
<circle cx="984.3" cy="496.2" r="1.1" fill="#3a3a4a" opacity="0.85"/>
<circle cx="974.7" cy="505.0" r="2.2" fill="#2e2e3a" opacity="0.85"/>
<circle cx="967.1" cy="507.7" r="1.3" fill="#4a4a5a" opacity="0.85"/>
<circle cx="960.1" cy="508.7" r="1.0" fill="#44404a" opacity="0.85"/>
<circle cx="965.8" cy="528.1" r="1.5" fill="#3a3a4a" opacity="0.85"/>
<circle cx="973.6" cy="511.4" r="1.1" fill="#44404a" opacity="0.85"/>
<circle cx="955.6" cy="517.6" r="1.7" fill="#2e2e3a" opacity="0.85"/>
<circle cx="989.4" cy="497.5" r="1.4" fill="#44404a" opacity="0.85"/>
<circle cx="967.6" cy="514.7" r="1.2" fill="#2e2e3a" opacity="0.85"/>
<circle cx="973.6" cy="516.4" r="1.6" fill="#3a3a4a" opacity="0.85"/>
<circle cx="983.3" cy="494.5" r="1.7" fill="#4a4a5a" opacity="0.85"/>
<circle cx="959.5" cy="503.6" r="2.4" fill="#4a4a5a" opacity="0.85"/>
<circle cx="964.8" cy="519.9" r="1.1" fill="#4a4a5a" opacity="0.85"/>
<circle cx="971.3" cy="496.6" r="1.5" fill="#44404a" opacity="0.85"/>
<circle cx="958.8" cy="516.0" r="1.2" fill="#3a3a4a" opacity="0.85"/>
<circle cx="968.8" cy="496.5" r="2.0" fill="#44404a" opacity="0.85"/>
<circle cx="963.4" cy="517.7" r="1.9" fill="#4a4a5a" opacity="0.85"/>
<circle cx="949.0" cy="534.3" r="1.8" fill="#44404a" opacity="0.85"/>
<circle cx="975.8" cy="497.8" r="2.4" fill="#44404a" opacity="0.85"/>
<circle cx="995.0" cy="480.2" r="1.7" fill="#3a3a4a" opacity="0.85"/>
<circle cx="939.8" cy="526.8" r="1.4" fill="#3a3a4a" opacity="0.85"/>
<circle cx="941.1" cy="531.4" r="2.1" fill="#44404a" opacity="0.85"/>
<circle cx="945.7" cy="532.0" r="1.1" fill="#3a3a4a" opacity="0.85"/>
<circle cx="978.9" cy="488.4" r="1.1" fill="#4a4a5a" opacity="0.85"/>
<circle cx="957.0" cy="533.1" r="1.4" fill="#3a3a4a" opacity="0.85"/>
</g></g>
</svg>
<!-- desktop icons -->
<svg style="position:absolute;left:9px;top:4px" width="22" height="25" viewBox="0 0 22 25"><path d="M2 3H20L18 24H4Z" fill="#eef0f2" opacity="0.9"/><path d="M2 3H20L19.5 6H2.5Z" fill="#fff"/><g fill="none" stroke="#1878c8" stroke-width="2.4"><path d="M7 15A4.5 4.5 0 0 1 11 9.5"/><path d="M13 10A4.5 4.5 0 0 1 15 16"/><path d="M13.5 18A4.5 4.5 0 0 1 8 17"/></g></svg>
<div class="lab" style="left:0px;top:32px">Recycle Bin</div>
<svg style="position:absolute;left:6px;top:60px" width="28" height="28" viewBox="0 0 28 28"><defs><linearGradient id="edg" x1="0" y1="1" x2="1" y2="0"><stop offset="0" stop-color="#0c59a4"/><stop offset="0.5" stop-color="#1b8fd8"/><stop offset="1" stop-color="#5fd36a"/></linearGradient></defs><circle cx="14" cy="14" r="13" fill="url(#edg)"/><path d="M8 16C8 10 13 8 17 9C21 10 23 13 22 16L13 16C13 20 18 22 22 20C20 24 14 26 10 23C7 21 7 18 8 16Z" fill="#0e4f9a"/><path d="M13 16C13 13 15 12 17 12C19 12 20 14 20 16Z" fill="#e9f4fb" opacity="0.9"/><rect x="1" y="18" width="7" height="7" fill="#fff"/><path d="M3 23L7 19M4.5 19H7V21.5" stroke="#2a6ab0" stroke-width="0.9" fill="none"/></svg>
<div class="lab" style="left:0px;top:90px">Microsoft<br>Edge</div>
<svg style="position:absolute;left:7px;top:118px" width="28" height="28" viewBox="0 0 28 28"><circle cx="14" cy="14" r="13" fill="#db4437"/><path d="M14 14L2.7 20.5A13 13 0 0 0 20.5 25.3Z" fill="#0f9d58"/><path d="M14 14L20.5 25.3A13 13 0 0 0 26.8 11.5L14 11.5Z" fill="#f4c20d"/><path d="M14 14L1 14A13 13 0 0 0 2.7 20.5Z" fill="#0f9d58"/><circle cx="14" cy="14" r="6" fill="#fff"/><circle cx="14" cy="14" r="4.6" fill="#4285f4"/><rect x="1" y="19" width="7" height="7" fill="#fff"/><path d="M3 24L7 20M4.5 20H7V22.5" stroke="#2a6ab0" stroke-width="0.9" fill="none"/></svg>
<div class="lab" style="left:0px;top:148px">Google<br>Chrome</div>
<svg style="position:absolute;left:9px;top:178px" width="24" height="20" viewBox="0 0 24 20"><path d="M0 2Q0 0 2 0H8L10 2H22Q24 2 24 4V18Q24 20 22 20H2Q0 20 0 18Z" fill="#e9b830"/><rect x="0" y="5" width="24" height="15" rx="1.5" fill="#f8d263"/><rect x="2" y="11" width="20" height="1" fill="#d8a828"/></svg>
<div class="lab" style="left:0px;top:205px">kkkk</div>
<svg style="position:absolute;left:9px;top:237px" width="24" height="20" viewBox="0 0 24 20"><path d="M0 2Q0 0 2 0H8L10 2H22Q24 2 24 4V18Q24 20 22 20H2Q0 20 0 18Z" fill="#e9b830"/><rect x="0" y="5" width="24" height="15" rx="1.5" fill="#f8d263"/></svg>
<div class="lab" style="left:0px;top:263px">testrr</div>
<svg style="position:absolute;left:11px;top:294px" width="19" height="22" viewBox="0 0 19 22"><path d="M0 0H13L19 6V22H0Z" fill="#f6f6f8"/><path d="M13 0V6H19" fill="#d8dce4"/><g stroke="#b8bcc8" stroke-width="0.7"><path d="M3 9H16M3 12H16M3 15H16M3 18H16"/></g></svg>
<div class="lab" style="left:0px;top:320px">INFO</div>
<svg style="position:absolute;left:10px;top:351px" width="19" height="22" viewBox="0 0 19 22"><path d="M0 0H13L19 6V22H0Z" fill="#d4202a"/><path d="M13 0V6H19" fill="#f08088"/><path d="M9.5 6C8 6 8.5 10 10 12.5C8 15 5 16 4.5 17C5 18 7 16 9 14C11 13.5 13.5 13.5 15 14.5C15.5 13 13 12.5 11 12.5C10 10 11 6 9.5 6Z" fill="none" stroke="#fff" stroke-width="1"/></svg>
<div class="lab" style="left:0px;top:377px">testrr</div>
<!-- photo icon -->
<div style="position:absolute;left:502px;top:5px;width:22px;height:22px;background:#3f5a74;border-radius:4px"></div>
<svg style="position:absolute;left:502px;top:5px" width="22" height="22" viewBox="0 0 22 22"><circle cx="11" cy="11" r="7" fill="none" stroke="#e8eef4" stroke-width="1.3"/><path d="M5.5 15L11 10L16.5 15" fill="none" stroke="#e8eef4" stroke-width="1.3"/><circle cx="13.8" cy="7.8" r="1.2" fill="#e8eef4"/></svg>
<div id="tb">
<svg style="position:absolute;left:13px;top:4px" width="14" height="16" viewBox="0 0 14 16"><rect x="2" y="3" width="3" height="11" rx="1.5" fill="#8fb0e8"/><circle cx="3.5" cy="12.5" r="2.5" fill="#3a8ae0"/><path d="M9 0A4 4 0 0 1 13 4C13 7 9 10 9 14C9 10 5 7 5 4A4 4 0 0 1 9 0Z" fill="#d8282a"/><rect x="8.5" y="2" width="1" height="3" fill="#fff"/></svg>
<div class="t" style="left:29px;top:6.5px;font-size:6.2px;color:#222">Temps to jump</div>
<div class="t" style="left:29px;top:15px;font-size:6.2px;color:#666">Thursday</div>
<svg style="position:absolute;left:398px;top:8px" width="14" height="13" viewBox="0 0 14 13"><rect x="0" y="0" width="6.6" height="6.1" fill="#1a8ee6"/><rect x="7.2" y="0" width="6.6" height="6.1" fill="#2ea6f0"/><rect x="0" y="6.7" width="6.6" height="6.1" fill="#1a88e0"/><rect x="7.2" y="6.7" width="6.6" height="6.1" fill="#2a9cea"/></svg>
<div style="position:absolute;left:421px;top:5px;width:119px;height:17px;background:#fbfbfb;border-radius:9px;border:1px solid #e6e6e6"></div>
<svg style="position:absolute;left:427px;top:9px" width="9" height="9" viewBox="0 0 9 9"><circle cx="3.6" cy="3.6" r="2.7" fill="none" stroke="#333" stroke-width="1"/><path d="M5.6 5.6L8 8" stroke="#333" stroke-width="1.1"/></svg>
<div class="t" style="left:439px;top:10px;font-size:6.6px;color:#555">Search</div>
<svg style="position:absolute;left:513px;top:6px" width="21" height="15" viewBox="0 0 21 15"><ellipse cx="12" cy="7" rx="6" ry="5" fill="#f4b8b0"/><ellipse cx="7" cy="9" rx="4" ry="3.5" fill="#f0a898"/><path d="M2 14L10 7L19 3" stroke="#8a3a20" stroke-width="1" fill="none"/><circle cx="14" cy="6" r="1.2" fill="#c84a3a"/><circle cx="8" cy="9" r="1" fill="#c84a3a"/></svg>
<svg style="position:absolute;left:547px;top:8px" width="11" height="12" viewBox="0 0 11 12"><rect x="0" y="0" width="11" height="12" fill="#e8e8e8"/><rect x="0" y="0" width="7" height="9" fill="#555"/><rect x="0" y="9" width="11" height="3" fill="#1a1a1a"/><rect x="7" y="0" width="4" height="9" fill="#bbb"/></svg>
<svg style="position:absolute;left:571px;top:6px" width="15" height="15" viewBox="0 0 15 15"><path d="M3 2Q5 0 8 1L12 2Q14 3 13 6L12 11Q11 14 8 13L3 12Q0 11 1 8Z" fill="#7a5ae0"/><path d="M3 2Q5 0 8 1L7 7L1 8Z" fill="#2a9af0"/><path d="M8 13L12 11L13 6L8 8Z" fill="#e85a9a"/><path d="M1 8L7 7L8 13L3 12Z" fill="#30c090"/><rect x="7" y="9" width="8" height="6" fill="#222"/></svg>
<svg style="position:absolute;left:595px;top:6px" width="15" height="13" viewBox="0 0 15 13"><path d="M0 1Q0 0 1 0H5L6.5 1.5H14Q15 1.5 15 2.5V12Q15 13 14 13H1Q0 13 0 12Z" fill="#e8b020"/><rect x="0" y="4" width="15" height="9" rx="1" fill="#f8d050"/><rect x="0" y="7.5" width="15" height="2" fill="#2a8ae0"/></svg>
<div style="position:absolute;left:601px;top:21.8px;width:3px;height:1.5px;background:#888;border-radius:1px"></div>
<svg style="position:absolute;left:619px;top:6px" width="15" height="15" viewBox="0 0 15 15"><circle cx="7.5" cy="7.5" r="7" fill="#1a8ad8"/><path d="M3 9C3 5 6 3.5 9 4C12 4.5 13 7 12.5 9H7C7 11.5 10 12.5 12.5 11C11 14 6 14.5 4 12C3 11 3 10 3 9Z" fill="#0c4a9a"/><circle cx="11" cy="3" r="3" fill="#5fd36a" opacity="0.8"/></svg>
<svg style="position:absolute;left:644px;top:6px" width="14" height="14" viewBox="0 0 14 14"><rect x="0" y="2" width="14" height="12" rx="1.5" fill="#1a5aa8"/><rect x="4" y="0" width="6" height="3" fill="none" stroke="#1a5aa8" stroke-width="1"/><rect x="4" y="5" width="2.7" height="2.7" fill="#f25022"/><rect x="7.3" y="5" width="2.7" height="2.7" fill="#7fba00"/><rect x="4" y="8.3" width="2.7" height="2.7" fill="#00a4ef"/><rect x="7.3" y="8.3" width="2.7" height="2.7" fill="#ffb900"/></svg>
<svg style="position:absolute;left:668px;top:7px" width="14" height="12" viewBox="0 0 14 12"><rect x="0" y="0" width="14" height="12" rx="1.5" fill="#2a2a2a"/><rect x="0.5" y="0.5" width="13" height="2" fill="#555"/><path d="M2.5 4.5L5 6.5L2.5 8.5" stroke="#fff" stroke-width="0.9" fill="none"/><path d="M6 8.5H10" stroke="#fff" stroke-width="0.9"/></svg>
<div style="position:absolute;left:673.5px;top:21.8px;width:3px;height:1.5px;background:#888;border-radius:1px"></div>
<svg style="position:absolute;left:693px;top:5px" width="12" height="16" viewBox="0 0 12 16"><rect x="0" y="1" width="12" height="15" rx="1" fill="#3aaee0"/><path d="M2 4H10M2 7H10M2 10H10M2 13H10" stroke="#1a5a80" stroke-width="0.8"/><path d="M2 0V2M5 0V2M8 0V2" stroke="#555" stroke-width="0.8"/></svg>
<div style="position:absolute;left:697.5px;top:21.8px;width:3px;height:1.5px;background:#888;border-radius:1px"></div>
<svg style="position:absolute;left:717px;top:7px" width="14" height="12" viewBox="0 0 14 12"><path d="M2.5 0H14L11.5 12H0Z" fill="#3a7ae0"/><path d="M4 3L7.5 6L3.5 9" stroke="#fff" stroke-width="1.1" fill="none"/><path d="M7 9H10" stroke="#fff" stroke-width="1"/></svg>
<div style="position:absolute;left:717.5px;top:22px;width:12px;height:2px;background:#2a6ad8;border-radius:1px"></div>
<svg style="position:absolute;left:1022px;top:10px" width="8" height="6" viewBox="0 0 8 6"><path d="M1 4.5L4 1.5L7 4.5" stroke="#333" stroke-width="1" fill="none"/></svg>
<svg style="position:absolute;left:1038px;top:8px" width="10" height="10" viewBox="0 0 10 10"><path d="M2.5 7.5A2.2 2.2 0 0 1 2.8 3.2A3 3 0 0 1 8.5 4.5A1.8 1.8 0 0 1 8 7.5Z" fill="none" stroke="#333" stroke-width="0.9"/><path d="M1 1L9 9" stroke="#333" stroke-width="0.9"/></svg>
<svg style="position:absolute;left:1056px;top:8px" width="10" height="11" viewBox="0 0 10 11"><path d="M6 1H1V9" stroke="#333" stroke-width="0.9" fill="none"/><path d="M1 10H8V4" stroke="#333" stroke-width="0.9" fill="none"/><rect x="7" y="0.5" width="2" height="3" fill="#333"/><path d="M3 9V7M5 9V6" stroke="#333" stroke-width="0.8"/></svg>
<svg style="position:absolute;left:1069px;top:9px" width="10" height="9" viewBox="0 0 10 9"><path d="M0.5 3H2.5L5 0.8V8.2L2.5 6H0.5Z" fill="none" stroke="#333" stroke-width="0.8"/><path d="M6.5 2.8L9.2 5.8M9.2 2.8L6.5 5.8" stroke="#333" stroke-width="0.8"/></svg>
<div class="t" style="left:1094px;top:7px;font-size:6.3px;color:#222">6:28 AM</div>
<div class="t" style="left:1088px;top:15.5px;font-size:6.3px;color:#222">3/24/2026</div>
</div>
<div class="win" id="ps">
<div style="position:absolute;left:0;top:0;width:183px;height:5px;background:#2c2c2c"></div>
<div style="position:absolute;left:0;top:5px;width:4px;height:18px;background:#2a2a2a"></div>
<div style="position:absolute;left:4px;top:5px;width:179px;height:18px;background:#0e0e0e"></div>
<svg style="position:absolute;left:10px;top:10px" width="9" height="7" viewBox="0 0 9 7"><path d="M1 0H9L8 7H0Z" fill="#3a6fd8"/><path d="M2.2 1.5L4.5 3.5L2.2 5.5" stroke="#e8eefc" stroke-width="1" fill="none"/><path d="M4.5 5.5H6.5" stroke="#e8eefc" stroke-width="0.8"/></svg>
<div class="t" style="left:23.5px;top:10.5px;font-size:7.1px;color:#f0f0f0;letter-spacing:-0.05px;text-shadow:0 0 0.3px #fff">Windows PowerShell</div>
<div class="t" style="left:4px;top:28px;font-family:'Liberation Mono',monospace;font-size:8.8px;color:#d0d0d0">PS C:\WINDOWS\system32&gt;</div>
</div>
<div class="win" id="np">
<div style="position:absolute;left:0;top:0;width:782px;height:23px;background:#e8e8e8"></div>
<svg style="position:absolute;left:10px;top:10px" width="7" height="9" viewBox="0 0 7 9"><rect x="0" y="0" width="7" height="9" fill="#2ea0c8"/><path d="M1 2.5H6M1 4.5H6M1 6.5H6" stroke="#0c4a66" stroke-width="0.8"/></svg>
<div style="position:absolute;left:27px;top:6px;width:131px;height:17px;background:#f9f9f9;border-radius:4px 4px 0 0"></div>
<div class="t" style="left:31px;top:11px;font-size:7px;color:#1a1a1a">keylogger test</div>
<div style="position:absolute;left:145.8px;top:13.8px;width:2.4px;height:2.4px;border-radius:50%;background:#444"></div>
<svg style="position:absolute;left:166px;top:10px" width="9" height="9"><path d="M4.5 1V8M1 4.5H8" stroke="#555" stroke-width="0.8"/></svg>

<div class="t" style="left:9px;top:29px;font-size:7.2px;color:#222">File</div>
<div class="t" style="left:36px;top:29px;font-size:7.2px;color:#222">Edit</div>
<div class="t" style="left:63.5px;top:29px;font-size:7.2px;color:#222">View</div>
<div class="t" style="left:334.5px;top:28.5px;font-size:6.8px;color:#444">H1</div>
<svg style="position:absolute;left:0;top:0" width="782" height="42"><g stroke="#555" stroke-width="0.8" fill="none">
<path d="M349.5 30.8L351.5 32.6L353.5 30.8"/><path d="M380.5 30.8L382.5 32.6L384.5 30.8"/><path d="M482.5 30.8L484.5 32.6L486.5 30.8"/><path d="M768 30.8L770 32.6L772 30.8"/>
<path d="M369 29.5H375M369 31.7H375M369 33.9H375"/><path d="M366.5 29.5H367.3M366.5 31.7H367.3M366.5 33.9H367.3"/>
<path d="M433 31.7H439.5"/><path d="M438.5 29.3Q436 27.8 434.3 29.3Q433.3 30.6 435.5 31.5M434 34.2Q436.5 35.5 438.5 34.2Q439.5 32.9 437.5 31.9"/>
<path d="M451.5 30H450.2A1.8 1.8 0 0 0 450.2 33.6H451.5M455 30H456.3A1.8 1.8 0 0 1 456.3 33.6H455M451.2 31.8H455.3"/>
<rect x="468.5" y="28.3" width="7.2" height="7" rx="1"/><path d="M468.5 31.8H475.7M472.1 28.3V35.3"/>
<path d="M499 34L501.3 28.5L503.6 34M499.8 32.3H502.8M503 33.5L504.5 35.3L507.5 30.5"/>
</g>
<path d="M772.5 8.5H778" stroke="#777" stroke-width="0.6"/>
<text x="397.5" y="34.8" font-family="Liberation Sans" font-weight="bold" font-size="7.8" fill="#333">B</text>
<text x="415" y="34.8" font-family="Liberation Serif" font-style="italic" font-size="8" fill="#444">I</text>
<circle cx="757.3" cy="31.7" r="3.8" fill="#e85a8a"/><path d="M757.3 27.9A3.8 3.8 0 0 1 761.1 31.7L757.3 31.7Z" fill="#f0b020"/><path d="M753.5 31.7A3.8 3.8 0 0 1 757.3 27.9L757.3 31.7Z" fill="#2a8ae8"/><path d="M757.3 35.5A3.8 3.8 0 0 1 753.5 31.7L757.3 31.7Z" fill="#40b870"/><circle cx="757.3" cy="31.7" r="1.5" fill="#fff"/>
</svg>
<div style="position:absolute;left:0;top:41px;width:782px;height:1px;background:#f2f2f2"></div>
<div class="t" style="left:9.5px;top:52px;font-family:'Liberation Mono',monospace;font-size:7.3px;color:#222">keylogger test</div>
<div style="position:absolute;left:0;top:424px;width:782px;height:1px;background:#ececec"></div>
<div style="position:absolute;left:0;top:425px;width:782px;height:18px;background:#f7f7f7"></div>
<div class="t" style="left:12px;top:431.5px;font-size:6.2px;color:#666">Ln 1, Col 15</div>
<div style="position:absolute;left:52.5px;top:428px;width:1px;height:13px;background:#e6e6e6"></div><div class="t" style="left:58px;top:431.5px;font-size:6.2px;color:#666">14 characters</div><div style="position:absolute;left:102px;top:428px;width:1px;height:13px;background:#e6e6e6"></div>
<div class="t" style="left:174px;top:431.5px;font-size:6.2px;color:#666">Plain text</div>
<div class="t" style="left:637.5px;top:431.5px;font-size:6.2px;color:#666">100%</div>
<div class="t" style="left:675px;top:431.5px;font-size:6.2px;color:#666">Windows (CRLF)</div>
<div class="t" style="left:767px;top:431.5px;font-size:6.2px;color:#666">UTF-8</div>
</div>
<div class="win" id="ex">
<div style="position:absolute;left:0;top:0;width:84px;height:21px;background:#ececec"></div>
<div style="position:absolute;left:4px;top:5px;width:80px;height:16px;background:#f9f9f9;border-radius:4px 4px 0 0"></div>
<div style="position:absolute;left:10px;top:9.5px;width:8.5px;height:6px;background:#1e95d8;border-radius:1px"></div>
<div style="position:absolute;left:12.5px;top:15.5px;width:4px;height:1px;background:#555"></div>
<div class="t" style="left:24px;top:10px;font-size:6.8px;color:#1a1a1a">This PC</div>
<div style="position:absolute;left:0;top:21px;width:84px;height:27px;background:#f9f9f9"></div>
<svg style="position:absolute;left:0;top:21px" width="84" height="27"><g stroke="#555" stroke-width="0.9" fill="none"><path d="M11 14H19M11 14L14 11M11 14L14 17"/><path d="M38 14H46M46 14L43 11M46 14L43 17" stroke="#bbb"/><path d="M68 10V18M68 10L65 13M68 10L71 13"/></g></svg>
<div style="position:absolute;left:0;top:48px;width:84px;height:1px;background:#e3e3e3"></div>
<div style="position:absolute;left:0;top:49px;width:84px;height:25px;background:#fbfbfb"></div>
<div style="position:absolute;left:10px;top:58px;width:8px;height:8px;border:0.9px solid #b8b8b8;border-radius:50%"></div>
<div class="t" style="left:23px;top:59px;font-size:6.4px;color:#b0b0b0">New &#709;</div>
<div style="position:absolute;left:52px;top:54px;width:1px;height:16px;background:#e8e8e8"></div>
<svg style="position:absolute;left:62px;top:56px" width="10" height="11"><g stroke="#c0c0c0" stroke-width="0.9" fill="none"><path d="M2 1L8 8M8 1L2 8"/><circle cx="2.5" cy="9" r="1.4"/><circle cx="7.5" cy="9" r="1.4"/></g></svg>
<div style="position:absolute;left:0;top:74px;width:84px;height:1px;background:#e8e8e8"></div>
<div class="exi" style="top:83px"><i style="background:#e8904a;clip-path:polygon(50% 0,100% 45%,90% 45%,90% 100%,10% 100%,10% 45%,0 45%)"></i><b>Home</b></div>
<div class="exi" style="top:100px"><i style="background:#2a7fd4"></i><b>Gallery</b></div>
<div class="exi" style="top:118px"><svg style="position:absolute;left:7.5px;top:2.5px" width="5" height="6"><path d="M1.5 1L3.5 3L1.5 5" stroke="#666" stroke-width="0.7" fill="none"/></svg><i style="background:#2a8ae0;border-radius:4px;height:6px;top:1px"></i><b>OneDrive</b></div>
<div class="exi" style="top:153px"><i style="background:#2aa0d8"></i><b>Desktop</b><u></u></div>
<div class="exi" style="top:170.5px"><svg style="position:absolute;left:19px;top:0.5px" width="9" height="9"><path d="M4.5 0.5V6M2 3.8L4.5 6.3L7 3.8M1 8.3H8" stroke="#2a9a8a" stroke-width="1" fill="none"/></svg><b>Downloads</b><u></u></div>
<div class="exi" style="top:188px"><i style="background:#7a8aa0;width:7px;left:19.5px"></i><b>Documents</b><u></u></div>
<div class="exi" style="top:206px"><i style="background:#2a7ad0"></i><svg style="position:absolute;left:18.5px;top:1px" width="9" height="8"><path d="M0 8L3.5 3.5L6 6L7.5 4.5L9 6V8Z" fill="#d8ecff"/></svg><b>Pictures</b><u></u></div>
<div class="exi" style="top:223px"><i style="background:#e0504a;border-radius:50%"></i><b>Music</b><u></u></div>
<div class="exi" style="top:241px"><i style="background:#8a50d8"></i><svg style="position:absolute;left:18.5px;top:1px" width="9" height="8"><path d="M3.5 2L6.5 4L3.5 6Z" fill="#fff"/></svg><b>Videos</b><u></u></div>
<div class="exi" style="top:258.5px"><i style="background:#f0c040;height:7px;top:1px"></i><b>20260219</b><u></u></div>
<div class="exi" style="top:276px"><i style="background:#445;height:3.5px;top:4.5px;width:8px"></i><b>Z:\</b></div>
<div style="position:absolute;left:1px;top:307px;width:76px;height:17px;background:#dedede;border:0.6px solid #d2d2d2;border-radius:2px"></div>
<div class="exi" style="top:311px"><svg style="position:absolute;left:7.5px;top:2.5px" width="5" height="6"><path d="M1.5 1L3.5 3L1.5 5" stroke="#666" stroke-width="0.7" fill="none"/></svg><i style="background:#1e95d8;height:7px"></i><b>This PC</b></div>
<div class="exi" style="top:328px"><svg style="position:absolute;left:7.5px;top:2.5px" width="5" height="6"><path d="M1.5 1L3.5 3L1.5 5" stroke="#666" stroke-width="0.7" fill="none"/></svg><i style="background:#3a8ad0;height:6px;top:2px"></i><b>Network</b></div>
<div style="position:absolute;left:0;top:337px;width:84px;height:11px;background:#fbfbfb"></div>
<div class="t" style="left:6.5px;top:337.5px;font-size:6.8px;color:#555">2 items</div>
<div style="position:absolute;left:80.5px;top:83px;width:1.6px;height:210px;background:#8a8a8a;border-radius:1px"></div>
</div>
</div>
</body></html>
